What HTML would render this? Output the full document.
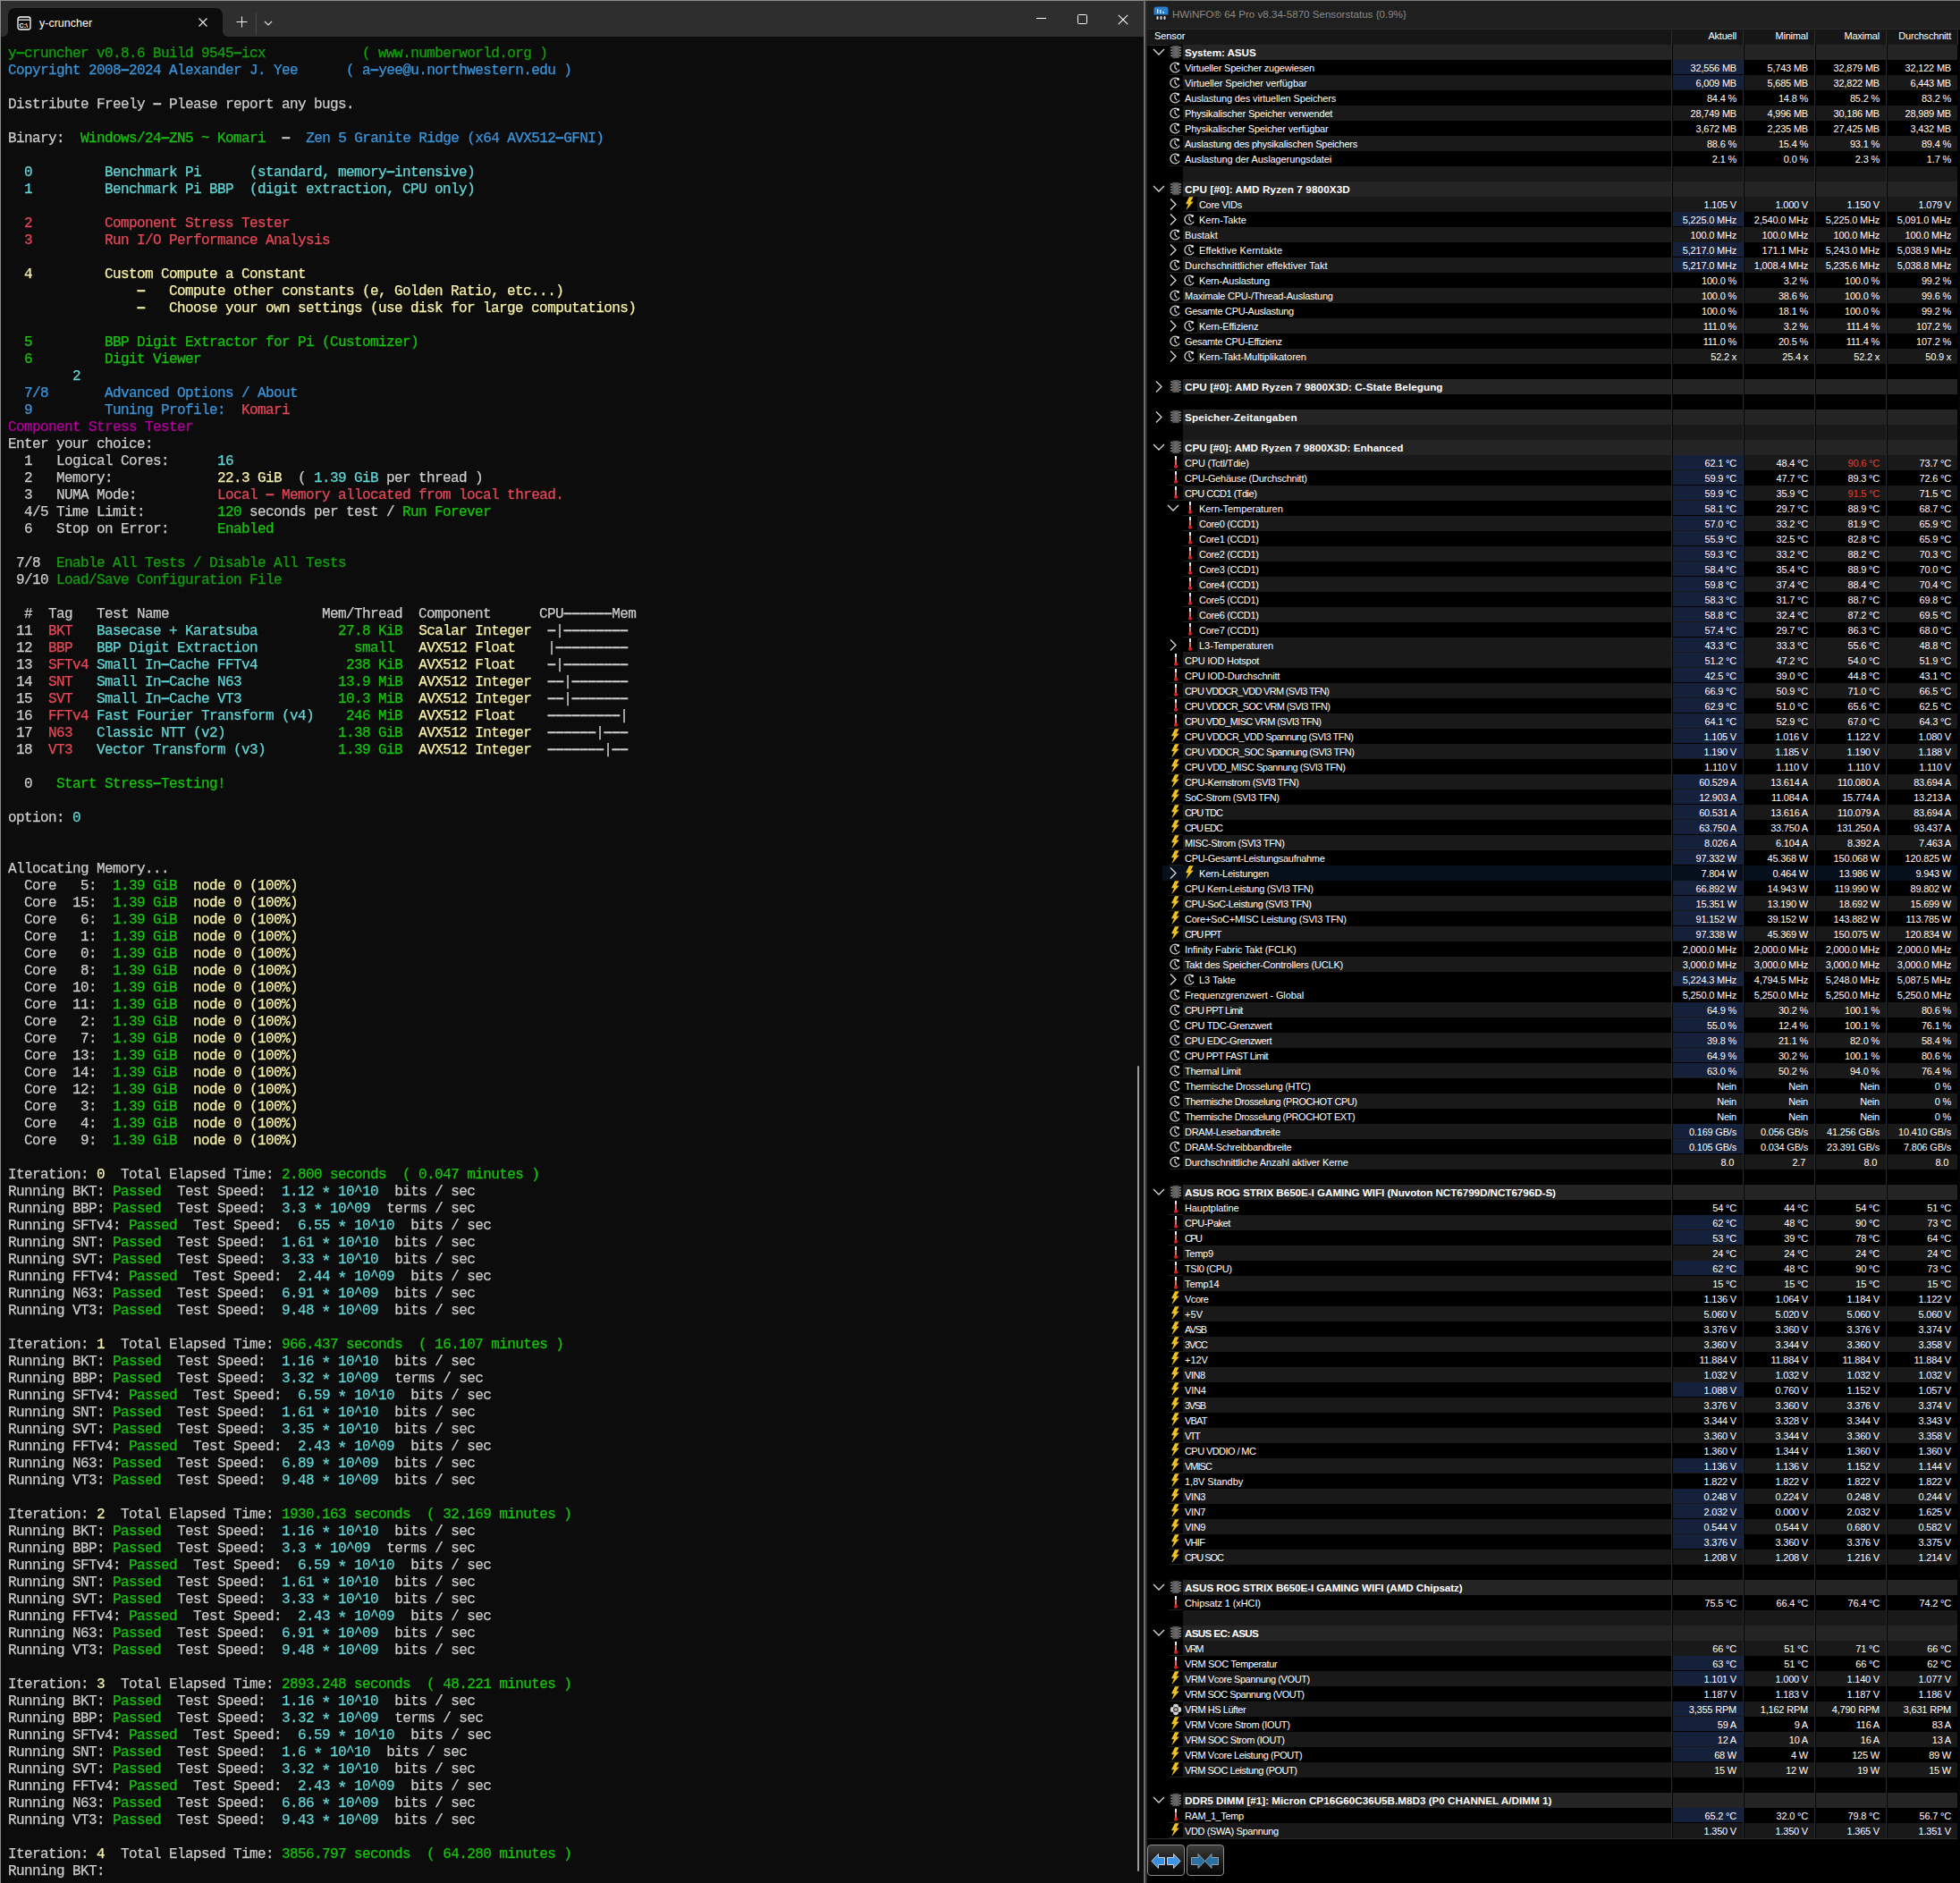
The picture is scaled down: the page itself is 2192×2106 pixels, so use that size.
<!DOCTYPE html><html><head><meta charset="utf-8"><style>

*{box-sizing:border-box}
body{margin:0;width:2192px;height:2106px;overflow:hidden;background:#000;position:relative;font-family:"Liberation Sans",sans-serif}
.a{position:absolute;line-height:0}
svg{display:block}
#tw{position:absolute;left:0;top:0;width:1280px;height:2106px;background:#0c0c0c;border-left:1px solid #8a8a8a;border-top:1px solid #8f8f8f;border-right:1px solid #6e6e6e;overflow:hidden}
#tb{position:absolute;left:0;top:0;width:1278px;height:40px;background:#2e2e2e}
#tab{position:absolute;left:8px;top:8px;width:240px;height:32px;background:#0c0c0c;border-radius:8px 8px 0 0}
.st{display:inline-block;transform:translateY(2.5px) scale(1.2)}
.d{display:inline-block;transform:translateY(-0.7px) scale(1.22,1.35)}
.tl{position:absolute;left:8px;height:19px;line-height:19px;white-space:pre;font-family:"Liberation Mono",monospace;font-size:16px;letter-spacing:-0.6px;color:#ccc;-webkit-text-stroke:0.25px currentColor}
#hw{position:absolute;left:1280px;top:0;width:912px;height:2106px;background:#000;border-top:1px solid #7a7a7a}
.r{position:absolute;left:0;width:912px;height:17px}
.tx{position:absolute;white-space:pre;font-size:11px;line-height:17px;color:#fff;letter-spacing:-0.08px}
.gx{position:absolute;white-space:pre;font-size:11.7px;line-height:17px;color:#fff;font-weight:bold}
.v{position:absolute;top:1px;height:17px;width:79px;text-align:right;padding-right:7px;white-space:pre;font-size:11px;line-height:17px;color:#fff;letter-spacing:-0.2px}

</style></head><body>
<div id="tw">
<div id="tb"></div>
<div id="tab"></div>
<div class="a" style="left:0;top:32px;width:8px;height:8px;background:#0c0c0c"></div>
<div class="a" style="left:-8px;top:24px;width:16px;height:16px;background:#2e2e2e;border-radius:0 0 6px 0"></div>
<div class="a" style="left:248px;top:32px;width:8px;height:8px;background:#0c0c0c"></div>
<div class="a" style="left:248px;top:24px;width:16px;height:16px;background:#2e2e2e;border-radius:0 0 0 6px"></div>
<svg class="a" style="left:18px;top:17px" width="16" height="16" viewBox="0 0 16 16"><rect x="1" y="1" width="14" height="14" rx="2.5" fill="none" stroke="#fff" stroke-width="1.3"/><line x1="1.5" y1="4.2" x2="14.5" y2="4.2" stroke="#fff" stroke-width="1.2"/><text x="2.6" y="12.6" font-family="Liberation Sans" font-size="7" font-weight="bold" fill="#fff">C:\</text></svg>
<div class="a" style="left:43px;top:15px;font-size:12.5px;line-height:20px;color:#fff;white-space:pre">y-cruncher</div>
<svg class="a" style="left:220px;top:18px" width="12" height="12" viewBox="0 0 12 12"><path d="M1.5 1.5L10.5 10.5M10.5 1.5L1.5 10.5" stroke="#e8e8e8" stroke-width="1.2"/></svg>
<svg class="a" style="left:263px;top:17px" width="13" height="13" viewBox="0 0 13 13"><path d="M6.5 0.5V12.5M0.5 6.5H12.5" stroke="#eef2f4" stroke-width="1"/></svg>
<div class="a" style="left:285px;top:13px;width:1px;height:25px;background:#4a4a44"></div>
<svg class="a" style="left:294px;top:21px" width="10" height="8" viewBox="0 0 10 8"><path d="M1 2L5 6L9 2" fill="none" stroke="#e0e0e0" stroke-width="1.1"/></svg>
<div class="a" style="left:1158px;top:19px;width:11px;height:1px;background:#fff"></div>
<div class="a" style="left:1204px;top:15px;width:11px;height:11px;border:1px solid #fff;border-radius:1.5px"></div>
<svg class="a" style="left:1249px;top:15px" width="12" height="12" viewBox="0 0 12 12"><path d="M0.8 0.8L11.2 11.2M11.2 0.8L0.8 11.2" stroke="#fff" stroke-width="1.1"/></svg>
<div class="a" style="left:1271px;top:1191px;width:2px;height:901px;background:#9c9c9c;border-radius:1px"></div>
<div class="a" style="left:0;top:0;width:1278px;height:2105px;will-change:transform">
<div class="tl" style="top:50px"><span style="color:#13a10e">y<span class="d">–</span>cruncher v0.8.6 Build 9545<span class="d">–</span>icx            ( www.numberworld.org )</span></div>
<div class="tl" style="top:69px"><span style="color:#3a96dd">Copyright 2008<span class="d">–</span>2024 Alexander J. Yee      ( a<span class="d">–</span>yee@u.northwestern.edu )</span></div>
<div class="tl" style="top:107px">Distribute Freely <span class="d">–</span> Please report any bugs.</div>
<div class="tl" style="top:145px">Binary:  <span style="color:#16c60c">Windows/24<span class="d">–</span>ZN5 ~ Komari</span>  <span class="d">–</span>  <span style="color:#3a96dd">Zen 5 Granite Ridge (x64 AVX512<span class="d">–</span>GFNI)</span></div>
<div class="tl" style="top:183px"><span style="color:#61d6d6">  0         </span><span style="color:#61d6d6">Benchmark Pi      (standard, memory<span class="d">–</span>intensive)</span></div>
<div class="tl" style="top:202px"><span style="color:#61d6d6">  1         </span><span style="color:#61d6d6">Benchmark Pi BBP  (digit extraction, CPU only)</span></div>
<div class="tl" style="top:240px"><span style="color:#e74856">  2         </span><span style="color:#e74856">Component Stress Tester</span></div>
<div class="tl" style="top:259px"><span style="color:#e74856">  3         </span><span style="color:#e74856">Run I/O Performance Analysis</span></div>
<div class="tl" style="top:297px"><span style="color:#f9f1a5">  4         </span><span style="color:#f9f1a5">Custom Compute a Constant</span></div>
<div class="tl" style="top:316px"><span style="color:#f9f1a5">                <span class="d">–</span>   Compute other constants (e, Golden Ratio, etc...)</span></div>
<div class="tl" style="top:335px"><span style="color:#f9f1a5">                <span class="d">–</span>   Choose your own settings (use disk for large computations)</span></div>
<div class="tl" style="top:373px"><span style="color:#16c60c">  5         </span><span style="color:#16c60c">BBP Digit Extractor for Pi (Customizer)</span></div>
<div class="tl" style="top:392px"><span style="color:#16c60c">  6         </span><span style="color:#16c60c">Digit Viewer</span></div>
<div class="tl" style="top:411px"><span style="color:#61d6d6">        2</span></div>
<div class="tl" style="top:430px"><span style="color:#3a96dd">  7/8       </span><span style="color:#3a96dd">Advanced Options / About</span></div>
<div class="tl" style="top:449px"><span style="color:#3a96dd">  9         </span><span style="color:#3a96dd">Tuning Profile:  </span><span style="color:#e74856">Komari</span></div>
<div class="tl" style="top:468px"><span style="color:#b4009e">Component Stress Tester</span></div>
<div class="tl" style="top:487px">Enter your choice:</div>
<div class="tl" style="top:506px">  1   Logical Cores:      <span style="color:#61d6d6">16</span></div>
<div class="tl" style="top:525px">  2   Memory:             <span style="color:#f9f1a5">22.3 GiB</span>  ( <span style="color:#61d6d6">1.39 GiB</span> per thread )</div>
<div class="tl" style="top:544px">  3   NUMA Mode:          <span style="color:#e74856">Local <span class="d">–</span> Memory allocated from local thread.</span></div>
<div class="tl" style="top:563px">  4/5 Time Limit:         <span style="color:#16c60c">120</span> seconds per test / <span style="color:#16c60c">Run Forever</span></div>
<div class="tl" style="top:582px">  6   Stop on Error:      <span style="color:#16c60c">Enabled</span></div>
<div class="tl" style="top:620px"> 7/8  <span style="color:#13a10e">Enable All Tests / Disable All Tests</span></div>
<div class="tl" style="top:639px"> 9/10 <span style="color:#13a10e">Load/Save Configuration File</span></div>
<div class="tl" style="top:677px">  #  Tag   Test Name                   Mem/Thread  Component      CPU<span class="d">–</span><span class="d">–</span><span class="d">–</span><span class="d">–</span><span class="d">–</span><span class="d">–</span>Mem</div>
<div class="tl" style="top:696px"> 11  <span style="color:#e74856">BKT  </span> <span style="color:#61d6d6">Basecase + Karatsuba       </span><span style="color:#16c60c">   27.8 KiB</span>  <span style="color:#f9f1a5">Scalar Integer</span>  <span class="d">–</span>|<span class="d">–</span><span class="d">–</span><span class="d">–</span><span class="d">–</span><span class="d">–</span><span class="d">–</span><span class="d">–</span><span class="d">–</span></div>
<div class="tl" style="top:715px"> 12  <span style="color:#e74856">BBP  </span> <span style="color:#61d6d6">BBP Digit Extraction       </span><span style="color:#16c60c">     small </span>  <span style="color:#f9f1a5">AVX512 Float  </span>  |<span class="d">–</span><span class="d">–</span><span class="d">–</span><span class="d">–</span><span class="d">–</span><span class="d">–</span><span class="d">–</span><span class="d">–</span><span class="d">–</span></div>
<div class="tl" style="top:734px"> 13  <span style="color:#e74856">SFTv4</span> <span style="color:#61d6d6">Small In<span class="d">–</span>Cache FFTv4       </span><span style="color:#16c60c">    238 KiB</span>  <span style="color:#f9f1a5">AVX512 Float  </span>  <span class="d">–</span>|<span class="d">–</span><span class="d">–</span><span class="d">–</span><span class="d">–</span><span class="d">–</span><span class="d">–</span><span class="d">–</span><span class="d">–</span></div>
<div class="tl" style="top:753px"> 14  <span style="color:#e74856">SNT  </span> <span style="color:#61d6d6">Small In<span class="d">–</span>Cache N63         </span><span style="color:#16c60c">   13.9 MiB</span>  <span style="color:#f9f1a5">AVX512 Integer</span>  <span class="d">–</span><span class="d">–</span>|<span class="d">–</span><span class="d">–</span><span class="d">–</span><span class="d">–</span><span class="d">–</span><span class="d">–</span><span class="d">–</span></div>
<div class="tl" style="top:772px"> 15  <span style="color:#e74856">SVT  </span> <span style="color:#61d6d6">Small In<span class="d">–</span>Cache VT3         </span><span style="color:#16c60c">   10.3 MiB</span>  <span style="color:#f9f1a5">AVX512 Integer</span>  <span class="d">–</span><span class="d">–</span>|<span class="d">–</span><span class="d">–</span><span class="d">–</span><span class="d">–</span><span class="d">–</span><span class="d">–</span><span class="d">–</span></div>
<div class="tl" style="top:791px"> 16  <span style="color:#e74856">FFTv4</span> <span style="color:#61d6d6">Fast Fourier Transform (v4)</span><span style="color:#16c60c">    246 MiB</span>  <span style="color:#f9f1a5">AVX512 Float  </span>  <span class="d">–</span><span class="d">–</span><span class="d">–</span><span class="d">–</span><span class="d">–</span><span class="d">–</span><span class="d">–</span><span class="d">–</span><span class="d">–</span>|</div>
<div class="tl" style="top:810px"> 17  <span style="color:#e74856">N63  </span> <span style="color:#61d6d6">Classic NTT (v2)           </span><span style="color:#16c60c">   1.38 GiB</span>  <span style="color:#f9f1a5">AVX512 Integer</span>  <span class="d">–</span><span class="d">–</span><span class="d">–</span><span class="d">–</span><span class="d">–</span><span class="d">–</span>|<span class="d">–</span><span class="d">–</span><span class="d">–</span></div>
<div class="tl" style="top:829px"> 18  <span style="color:#e74856">VT3  </span> <span style="color:#61d6d6">Vector Transform (v3)      </span><span style="color:#16c60c">   1.39 GiB</span>  <span style="color:#f9f1a5">AVX512 Integer</span>  <span class="d">–</span><span class="d">–</span><span class="d">–</span><span class="d">–</span><span class="d">–</span><span class="d">–</span><span class="d">–</span>|<span class="d">–</span><span class="d">–</span></div>
<div class="tl" style="top:867px">  0   <span style="color:#16c60c">Start Stress<span class="d">–</span>Testing!</span></div>
<div class="tl" style="top:905px">option: <span style="color:#61d6d6">0</span></div>
<div class="tl" style="top:962px">Allocating Memory...</div>
<div class="tl" style="top:981px">  Core   5:  <span style="color:#16c60c">1.39 GiB</span>  <span style="color:#f9f1a5">node 0 (100%)</span></div>
<div class="tl" style="top:1000px">  Core  15:  <span style="color:#16c60c">1.39 GiB</span>  <span style="color:#f9f1a5">node 0 (100%)</span></div>
<div class="tl" style="top:1019px">  Core   6:  <span style="color:#16c60c">1.39 GiB</span>  <span style="color:#f9f1a5">node 0 (100%)</span></div>
<div class="tl" style="top:1038px">  Core   1:  <span style="color:#16c60c">1.39 GiB</span>  <span style="color:#f9f1a5">node 0 (100%)</span></div>
<div class="tl" style="top:1057px">  Core   0:  <span style="color:#16c60c">1.39 GiB</span>  <span style="color:#f9f1a5">node 0 (100%)</span></div>
<div class="tl" style="top:1076px">  Core   8:  <span style="color:#16c60c">1.39 GiB</span>  <span style="color:#f9f1a5">node 0 (100%)</span></div>
<div class="tl" style="top:1095px">  Core  10:  <span style="color:#16c60c">1.39 GiB</span>  <span style="color:#f9f1a5">node 0 (100%)</span></div>
<div class="tl" style="top:1114px">  Core  11:  <span style="color:#16c60c">1.39 GiB</span>  <span style="color:#f9f1a5">node 0 (100%)</span></div>
<div class="tl" style="top:1133px">  Core   2:  <span style="color:#16c60c">1.39 GiB</span>  <span style="color:#f9f1a5">node 0 (100%)</span></div>
<div class="tl" style="top:1152px">  Core   7:  <span style="color:#16c60c">1.39 GiB</span>  <span style="color:#f9f1a5">node 0 (100%)</span></div>
<div class="tl" style="top:1171px">  Core  13:  <span style="color:#16c60c">1.39 GiB</span>  <span style="color:#f9f1a5">node 0 (100%)</span></div>
<div class="tl" style="top:1190px">  Core  14:  <span style="color:#16c60c">1.39 GiB</span>  <span style="color:#f9f1a5">node 0 (100%)</span></div>
<div class="tl" style="top:1209px">  Core  12:  <span style="color:#16c60c">1.39 GiB</span>  <span style="color:#f9f1a5">node 0 (100%)</span></div>
<div class="tl" style="top:1228px">  Core   3:  <span style="color:#16c60c">1.39 GiB</span>  <span style="color:#f9f1a5">node 0 (100%)</span></div>
<div class="tl" style="top:1247px">  Core   4:  <span style="color:#16c60c">1.39 GiB</span>  <span style="color:#f9f1a5">node 0 (100%)</span></div>
<div class="tl" style="top:1266px">  Core   9:  <span style="color:#16c60c">1.39 GiB</span>  <span style="color:#f9f1a5">node 0 (100%)</span></div>
<div class="tl" style="top:1304px">Iteration: <span style="color:#f9f1a5">0</span>  Total Elapsed Time: <span style="color:#16c60c">2.800 seconds  ( 0.047 minutes )</span></div>
<div class="tl" style="top:1323px">Running BKT: <span style="color:#16c60c">Passed</span>  Test Speed:  <span style="color:#61d6d6">1.12 <span class="st">*</span> 10^10</span>  bits / sec</div>
<div class="tl" style="top:1342px">Running BBP: <span style="color:#16c60c">Passed</span>  Test Speed:  <span style="color:#61d6d6">3.3 <span class="st">*</span> 10^09</span>  terms / sec</div>
<div class="tl" style="top:1361px">Running SFTv4: <span style="color:#16c60c">Passed</span>  Test Speed:  <span style="color:#61d6d6">6.55 <span class="st">*</span> 10^10</span>  bits / sec</div>
<div class="tl" style="top:1380px">Running SNT: <span style="color:#16c60c">Passed</span>  Test Speed:  <span style="color:#61d6d6">1.61 <span class="st">*</span> 10^10</span>  bits / sec</div>
<div class="tl" style="top:1399px">Running SVT: <span style="color:#16c60c">Passed</span>  Test Speed:  <span style="color:#61d6d6">3.33 <span class="st">*</span> 10^10</span>  bits / sec</div>
<div class="tl" style="top:1418px">Running FFTv4: <span style="color:#16c60c">Passed</span>  Test Speed:  <span style="color:#61d6d6">2.44 <span class="st">*</span> 10^09</span>  bits / sec</div>
<div class="tl" style="top:1437px">Running N63: <span style="color:#16c60c">Passed</span>  Test Speed:  <span style="color:#61d6d6">6.91 <span class="st">*</span> 10^09</span>  bits / sec</div>
<div class="tl" style="top:1456px">Running VT3: <span style="color:#16c60c">Passed</span>  Test Speed:  <span style="color:#61d6d6">9.48 <span class="st">*</span> 10^09</span>  bits / sec</div>
<div class="tl" style="top:1494px">Iteration: <span style="color:#f9f1a5">1</span>  Total Elapsed Time: <span style="color:#16c60c">966.437 seconds  ( 16.107 minutes )</span></div>
<div class="tl" style="top:1513px">Running BKT: <span style="color:#16c60c">Passed</span>  Test Speed:  <span style="color:#61d6d6">1.16 <span class="st">*</span> 10^10</span>  bits / sec</div>
<div class="tl" style="top:1532px">Running BBP: <span style="color:#16c60c">Passed</span>  Test Speed:  <span style="color:#61d6d6">3.32 <span class="st">*</span> 10^09</span>  terms / sec</div>
<div class="tl" style="top:1551px">Running SFTv4: <span style="color:#16c60c">Passed</span>  Test Speed:  <span style="color:#61d6d6">6.59 <span class="st">*</span> 10^10</span>  bits / sec</div>
<div class="tl" style="top:1570px">Running SNT: <span style="color:#16c60c">Passed</span>  Test Speed:  <span style="color:#61d6d6">1.61 <span class="st">*</span> 10^10</span>  bits / sec</div>
<div class="tl" style="top:1589px">Running SVT: <span style="color:#16c60c">Passed</span>  Test Speed:  <span style="color:#61d6d6">3.35 <span class="st">*</span> 10^10</span>  bits / sec</div>
<div class="tl" style="top:1608px">Running FFTv4: <span style="color:#16c60c">Passed</span>  Test Speed:  <span style="color:#61d6d6">2.43 <span class="st">*</span> 10^09</span>  bits / sec</div>
<div class="tl" style="top:1627px">Running N63: <span style="color:#16c60c">Passed</span>  Test Speed:  <span style="color:#61d6d6">6.89 <span class="st">*</span> 10^09</span>  bits / sec</div>
<div class="tl" style="top:1646px">Running VT3: <span style="color:#16c60c">Passed</span>  Test Speed:  <span style="color:#61d6d6">9.48 <span class="st">*</span> 10^09</span>  bits / sec</div>
<div class="tl" style="top:1684px">Iteration: <span style="color:#f9f1a5">2</span>  Total Elapsed Time: <span style="color:#16c60c">1930.163 seconds  ( 32.169 minutes )</span></div>
<div class="tl" style="top:1703px">Running BKT: <span style="color:#16c60c">Passed</span>  Test Speed:  <span style="color:#61d6d6">1.16 <span class="st">*</span> 10^10</span>  bits / sec</div>
<div class="tl" style="top:1722px">Running BBP: <span style="color:#16c60c">Passed</span>  Test Speed:  <span style="color:#61d6d6">3.3 <span class="st">*</span> 10^09</span>  terms / sec</div>
<div class="tl" style="top:1741px">Running SFTv4: <span style="color:#16c60c">Passed</span>  Test Speed:  <span style="color:#61d6d6">6.59 <span class="st">*</span> 10^10</span>  bits / sec</div>
<div class="tl" style="top:1760px">Running SNT: <span style="color:#16c60c">Passed</span>  Test Speed:  <span style="color:#61d6d6">1.61 <span class="st">*</span> 10^10</span>  bits / sec</div>
<div class="tl" style="top:1779px">Running SVT: <span style="color:#16c60c">Passed</span>  Test Speed:  <span style="color:#61d6d6">3.33 <span class="st">*</span> 10^10</span>  bits / sec</div>
<div class="tl" style="top:1798px">Running FFTv4: <span style="color:#16c60c">Passed</span>  Test Speed:  <span style="color:#61d6d6">2.43 <span class="st">*</span> 10^09</span>  bits / sec</div>
<div class="tl" style="top:1817px">Running N63: <span style="color:#16c60c">Passed</span>  Test Speed:  <span style="color:#61d6d6">6.91 <span class="st">*</span> 10^09</span>  bits / sec</div>
<div class="tl" style="top:1836px">Running VT3: <span style="color:#16c60c">Passed</span>  Test Speed:  <span style="color:#61d6d6">9.48 <span class="st">*</span> 10^09</span>  bits / sec</div>
<div class="tl" style="top:1874px">Iteration: <span style="color:#f9f1a5">3</span>  Total Elapsed Time: <span style="color:#16c60c">2893.248 seconds  ( 48.221 minutes )</span></div>
<div class="tl" style="top:1893px">Running BKT: <span style="color:#16c60c">Passed</span>  Test Speed:  <span style="color:#61d6d6">1.16 <span class="st">*</span> 10^10</span>  bits / sec</div>
<div class="tl" style="top:1912px">Running BBP: <span style="color:#16c60c">Passed</span>  Test Speed:  <span style="color:#61d6d6">3.32 <span class="st">*</span> 10^09</span>  terms / sec</div>
<div class="tl" style="top:1931px">Running SFTv4: <span style="color:#16c60c">Passed</span>  Test Speed:  <span style="color:#61d6d6">6.59 <span class="st">*</span> 10^10</span>  bits / sec</div>
<div class="tl" style="top:1950px">Running SNT: <span style="color:#16c60c">Passed</span>  Test Speed:  <span style="color:#61d6d6">1.6 <span class="st">*</span> 10^10</span>  bits / sec</div>
<div class="tl" style="top:1969px">Running SVT: <span style="color:#16c60c">Passed</span>  Test Speed:  <span style="color:#61d6d6">3.32 <span class="st">*</span> 10^10</span>  bits / sec</div>
<div class="tl" style="top:1988px">Running FFTv4: <span style="color:#16c60c">Passed</span>  Test Speed:  <span style="color:#61d6d6">2.43 <span class="st">*</span> 10^09</span>  bits / sec</div>
<div class="tl" style="top:2007px">Running N63: <span style="color:#16c60c">Passed</span>  Test Speed:  <span style="color:#61d6d6">6.86 <span class="st">*</span> 10^09</span>  bits / sec</div>
<div class="tl" style="top:2026px">Running VT3: <span style="color:#16c60c">Passed</span>  Test Speed:  <span style="color:#61d6d6">9.43 <span class="st">*</span> 10^09</span>  bits / sec</div>
<div class="tl" style="top:2064px">Iteration: <span style="color:#f9f1a5">4</span>  Total Elapsed Time: <span style="color:#16c60c">3856.797 seconds  ( 64.280 minutes )</span></div>
<div class="tl" style="top:2083px">Running BKT: </div>
</div>
</div>
<div id="hw">
<div class="a" style="left:0;top:0;width:1px;height:2106px;background:#6a6a6a"></div><div class="a" style="left:1px;top:0;width:2px;height:2106px;background:#262626"></div>
<div class="a" style="left:3px;top:0;width:909px;height:31px;background:#1f1f1f"></div><div class="a" style="left:3px;top:31px;width:909px;height:1px;background:#2a2a2a"></div>
<svg class="a" style="left:10px;top:6px" width="17" height="17" viewBox="0 0 17 17"><rect x="0.5" y="0.5" width="16" height="16" rx="3" fill="#1a1a1a"/><path d="M0.5 3.5A3 3 0 0 1 3.5 0.5H13.5A3 3 0 0 1 16.5 3.5V9.5H0.5Z" fill="#2a7fcf"/><rect x="4" y="3" width="1.3" height="5" fill="#dfe8f0"/><rect x="7" y="4" width="1.5" height="4" fill="#dfe8f0"/><rect x="10.5" y="6" width="1.5" height="2" fill="#dfe8f0"/><rect x="3.5" y="11" width="2" height="4" rx="1" fill="#ddd"/><rect x="7.5" y="11" width="2" height="4" rx="1" fill="#ddd"/><rect x="11.5" y="11" width="2" height="4" rx="1" fill="#ddd"/></svg>
<div class="a" style="left:31px;top:6px;font-size:11.6px;line-height:18px;color:#8a8a86;white-space:pre">HWiNFO® 64 Pro v8.34-5870 Sensorstatus {0.9%}</div>
<div class="a" style="left:3px;top:32px;width:906px;height:18px;background:#161616;border-bottom:1px solid #2a2a2a"></div>
<div class="tx" style="left:11px;top:31px;line-height:17px">Sensor</div>
<div class="a" style="left:589px;top:33px;width:1px;height:16px;background:#2e2e2e"></div>
<div class="v" style="left:590px;top:31px;line-height:17px">Aktuell</div>
<div class="a" style="left:669px;top:33px;width:1px;height:16px;background:#2e2e2e"></div>
<div class="v" style="left:670px;top:31px;line-height:17px">Minimal</div>
<div class="a" style="left:749px;top:33px;width:1px;height:16px;background:#2e2e2e"></div>
<div class="v" style="left:750px;top:31px;line-height:17px">Maximal</div>
<div class="a" style="left:829px;top:33px;width:1px;height:16px;background:#2e2e2e"></div>
<div class="v" style="left:830px;top:31px;line-height:17px">Durchschnitt</div>
<div class="a" style="left:909px;top:33px;width:1px;height:16px;background:#2e2e2e"></div>
<div class="r" style="top:49px">
<div class="a" style="left:43px;top:0;width:866px;height:17px;background:#242424"></div>
<div class="a" style="left:27px;top:0;width:16px;height:16px;background:#0a0a0a"></div>
<div class="a" style="left:9px;top:4px"><svg width="14" height="9" viewBox="0 0 14 9"><path d="M1 1L7 7L13 1" fill="none" stroke="#dcdcdc" stroke-width="1.25"/></svg></div>
<div class="a" style="left:29px;top:0px"><svg width="12" height="16" viewBox="0 0 12 16"><rect x="2" y="1" width="8" height="14" rx="1.5" fill="#555"/><rect x="3.5" y="2.5" width="5" height="11" fill="#676767"/><rect x="0.3" y="2.5" width="1.8" height="1.3" fill="#b0b0b0"/><rect x="9.9" y="2.5" width="1.8" height="1.3" fill="#b0b0b0"/><rect x="0.3" y="5.5" width="1.8" height="1.3" fill="#b0b0b0"/><rect x="9.9" y="5.5" width="1.8" height="1.3" fill="#b0b0b0"/><rect x="0.3" y="8.5" width="1.8" height="1.3" fill="#b0b0b0"/><rect x="9.9" y="8.5" width="1.8" height="1.3" fill="#b0b0b0"/><rect x="0.3" y="11.5" width="1.8" height="1.3" fill="#b0b0b0"/><rect x="9.9" y="11.5" width="1.8" height="1.3" fill="#b0b0b0"/></svg></div>
<div class="gx" id="n0" style="left:45px;top:0px;letter-spacing:-0.097px">System: ASUS</div>
<div class="a" style="left:589px;top:0;width:1px;height:17px;background:#2a2a2a"></div><div class="a" style="left:590px;top:0;width:1px;height:17px;background:#01050c"></div>
<div class="a" style="left:669px;top:0;width:1px;height:17px;background:#2a2a2a"></div><div class="a" style="left:670px;top:0;width:1px;height:17px;background:#01050c"></div>
<div class="a" style="left:749px;top:0;width:1px;height:17px;background:#2a2a2a"></div><div class="a" style="left:750px;top:0;width:1px;height:17px;background:#01050c"></div>
<div class="a" style="left:829px;top:0;width:1px;height:17px;background:#2a2a2a"></div><div class="a" style="left:830px;top:0;width:1px;height:17px;background:#01050c"></div>
</div>
<div class="r" style="top:66px">
<div class="a" style="left:43px;top:0;width:866px;height:17px;background:#000"></div>
<div class="a" style="left:27px;top:16px;width:16px;height:1px;background:#1e1e1e"></div>
<div class="a" style="left:28px;top:2px"><svg width="13" height="13" viewBox="0 0 13 13"><path d="M9.3 2.2A5.3 5.3 0 1 0 11.1 8.8" fill="none" stroke="#c4c4c4" stroke-width="1.4"/><circle cx="9.6" cy="2.6" r="1.3" fill="#fff"/><path d="M6 3V6.6L8.2 9" fill="none" stroke="#cfcfcf" stroke-width="1.3"/></svg></div>
<div class="tx" id="n1" style="left:45px;top:1px;letter-spacing:-0.201px">Virtueller Speicher zugewiesen</div>
<div class="a" style="left:589px;top:0;width:1px;height:17px;background:#2a2a2a"></div><div class="a" style="left:590px;top:0;width:1px;height:17px;background:#01050c"></div>
<div class="a" style="left:591px;top:0;width:79px;height:16px;background:#15203a"></div>
<div class="v" style="left:590px">32,556 MB</div>
<div class="a" style="left:669px;top:0;width:1px;height:17px;background:#2a2a2a"></div><div class="a" style="left:670px;top:0;width:1px;height:17px;background:#01050c"></div>
<div class="v" style="left:670px">5,743 MB</div>
<div class="a" style="left:749px;top:0;width:1px;height:17px;background:#2a2a2a"></div><div class="a" style="left:750px;top:0;width:1px;height:17px;background:#01050c"></div>
<div class="v" style="left:750px">32,879 MB</div>
<div class="a" style="left:829px;top:0;width:1px;height:17px;background:#2a2a2a"></div><div class="a" style="left:830px;top:0;width:1px;height:17px;background:#01050c"></div>
<div class="v" style="left:830px">32,122 MB</div>
</div>
<div class="r" style="top:83px">
<div class="a" style="left:43px;top:0;width:866px;height:17px;background:#191919"></div>
<div class="a" style="left:27px;top:16px;width:16px;height:1px;background:#1e1e1e"></div>
<div class="a" style="left:28px;top:2px"><svg width="13" height="13" viewBox="0 0 13 13"><path d="M9.3 2.2A5.3 5.3 0 1 0 11.1 8.8" fill="none" stroke="#c4c4c4" stroke-width="1.4"/><circle cx="9.6" cy="2.6" r="1.3" fill="#fff"/><path d="M6 3V6.6L8.2 9" fill="none" stroke="#cfcfcf" stroke-width="1.3"/></svg></div>
<div class="tx" id="n2" style="left:45px;top:1px;letter-spacing:-0.093px">Virtueller Speicher verfügbar</div>
<div class="a" style="left:589px;top:0;width:1px;height:17px;background:#2a2a2a"></div><div class="a" style="left:590px;top:0;width:1px;height:17px;background:#01050c"></div>
<div class="a" style="left:591px;top:0;width:79px;height:16px;background:#15203a"></div>
<div class="v" style="left:590px">6,009 MB</div>
<div class="a" style="left:669px;top:0;width:1px;height:17px;background:#2a2a2a"></div><div class="a" style="left:670px;top:0;width:1px;height:17px;background:#01050c"></div>
<div class="v" style="left:670px">5,685 MB</div>
<div class="a" style="left:749px;top:0;width:1px;height:17px;background:#2a2a2a"></div><div class="a" style="left:750px;top:0;width:1px;height:17px;background:#01050c"></div>
<div class="v" style="left:750px">32,822 MB</div>
<div class="a" style="left:829px;top:0;width:1px;height:17px;background:#2a2a2a"></div><div class="a" style="left:830px;top:0;width:1px;height:17px;background:#01050c"></div>
<div class="v" style="left:830px">6,443 MB</div>
</div>
<div class="r" style="top:100px">
<div class="a" style="left:43px;top:0;width:866px;height:17px;background:#000"></div>
<div class="a" style="left:27px;top:16px;width:16px;height:1px;background:#1e1e1e"></div>
<div class="a" style="left:28px;top:2px"><svg width="13" height="13" viewBox="0 0 13 13"><path d="M9.3 2.2A5.3 5.3 0 1 0 11.1 8.8" fill="none" stroke="#c4c4c4" stroke-width="1.4"/><circle cx="9.6" cy="2.6" r="1.3" fill="#fff"/><path d="M6 3V6.6L8.2 9" fill="none" stroke="#cfcfcf" stroke-width="1.3"/></svg></div>
<div class="tx" id="n3" style="left:45px;top:1px;letter-spacing:-0.149px">Auslastung des virtuellen Speichers</div>
<div class="a" style="left:589px;top:0;width:1px;height:17px;background:#2a2a2a"></div><div class="a" style="left:590px;top:0;width:1px;height:17px;background:#01050c"></div>
<div class="v" style="left:590px">84.4 %</div>
<div class="a" style="left:669px;top:0;width:1px;height:17px;background:#2a2a2a"></div><div class="a" style="left:670px;top:0;width:1px;height:17px;background:#01050c"></div>
<div class="v" style="left:670px">14.8 %</div>
<div class="a" style="left:749px;top:0;width:1px;height:17px;background:#2a2a2a"></div><div class="a" style="left:750px;top:0;width:1px;height:17px;background:#01050c"></div>
<div class="v" style="left:750px">85.2 %</div>
<div class="a" style="left:829px;top:0;width:1px;height:17px;background:#2a2a2a"></div><div class="a" style="left:830px;top:0;width:1px;height:17px;background:#01050c"></div>
<div class="v" style="left:830px">83.2 %</div>
</div>
<div class="r" style="top:117px">
<div class="a" style="left:43px;top:0;width:866px;height:17px;background:#191919"></div>
<div class="a" style="left:27px;top:16px;width:16px;height:1px;background:#1e1e1e"></div>
<div class="a" style="left:28px;top:2px"><svg width="13" height="13" viewBox="0 0 13 13"><path d="M9.3 2.2A5.3 5.3 0 1 0 11.1 8.8" fill="none" stroke="#c4c4c4" stroke-width="1.4"/><circle cx="9.6" cy="2.6" r="1.3" fill="#fff"/><path d="M6 3V6.6L8.2 9" fill="none" stroke="#cfcfcf" stroke-width="1.3"/></svg></div>
<div class="tx" id="n4" style="left:45px;top:1px;letter-spacing:-0.162px">Physikalischer Speicher verwendet</div>
<div class="a" style="left:589px;top:0;width:1px;height:17px;background:#2a2a2a"></div><div class="a" style="left:590px;top:0;width:1px;height:17px;background:#01050c"></div>
<div class="v" style="left:590px">28,749 MB</div>
<div class="a" style="left:669px;top:0;width:1px;height:17px;background:#2a2a2a"></div><div class="a" style="left:670px;top:0;width:1px;height:17px;background:#01050c"></div>
<div class="v" style="left:670px">4,996 MB</div>
<div class="a" style="left:749px;top:0;width:1px;height:17px;background:#2a2a2a"></div><div class="a" style="left:750px;top:0;width:1px;height:17px;background:#01050c"></div>
<div class="v" style="left:750px">30,186 MB</div>
<div class="a" style="left:829px;top:0;width:1px;height:17px;background:#2a2a2a"></div><div class="a" style="left:830px;top:0;width:1px;height:17px;background:#01050c"></div>
<div class="v" style="left:830px">28,989 MB</div>
</div>
<div class="r" style="top:134px">
<div class="a" style="left:43px;top:0;width:866px;height:17px;background:#000"></div>
<div class="a" style="left:27px;top:16px;width:16px;height:1px;background:#1e1e1e"></div>
<div class="a" style="left:28px;top:2px"><svg width="13" height="13" viewBox="0 0 13 13"><path d="M9.3 2.2A5.3 5.3 0 1 0 11.1 8.8" fill="none" stroke="#c4c4c4" stroke-width="1.4"/><circle cx="9.6" cy="2.6" r="1.3" fill="#fff"/><path d="M6 3V6.6L8.2 9" fill="none" stroke="#cfcfcf" stroke-width="1.3"/></svg></div>
<div class="tx" id="n5" style="left:45px;top:1px;letter-spacing:-0.175px">Physikalischer Speicher verfügbar</div>
<div class="a" style="left:589px;top:0;width:1px;height:17px;background:#2a2a2a"></div><div class="a" style="left:590px;top:0;width:1px;height:17px;background:#01050c"></div>
<div class="v" style="left:590px">3,672 MB</div>
<div class="a" style="left:669px;top:0;width:1px;height:17px;background:#2a2a2a"></div><div class="a" style="left:670px;top:0;width:1px;height:17px;background:#01050c"></div>
<div class="v" style="left:670px">2,235 MB</div>
<div class="a" style="left:749px;top:0;width:1px;height:17px;background:#2a2a2a"></div><div class="a" style="left:750px;top:0;width:1px;height:17px;background:#01050c"></div>
<div class="v" style="left:750px">27,425 MB</div>
<div class="a" style="left:829px;top:0;width:1px;height:17px;background:#2a2a2a"></div><div class="a" style="left:830px;top:0;width:1px;height:17px;background:#01050c"></div>
<div class="v" style="left:830px">3,432 MB</div>
</div>
<div class="r" style="top:151px">
<div class="a" style="left:43px;top:0;width:866px;height:17px;background:#191919"></div>
<div class="a" style="left:27px;top:16px;width:16px;height:1px;background:#1e1e1e"></div>
<div class="a" style="left:28px;top:2px"><svg width="13" height="13" viewBox="0 0 13 13"><path d="M9.3 2.2A5.3 5.3 0 1 0 11.1 8.8" fill="none" stroke="#c4c4c4" stroke-width="1.4"/><circle cx="9.6" cy="2.6" r="1.3" fill="#fff"/><path d="M6 3V6.6L8.2 9" fill="none" stroke="#cfcfcf" stroke-width="1.3"/></svg></div>
<div class="tx" id="n6" style="left:45px;top:1px;letter-spacing:-0.223px">Auslastung des physikalischen Speichers</div>
<div class="a" style="left:589px;top:0;width:1px;height:17px;background:#2a2a2a"></div><div class="a" style="left:590px;top:0;width:1px;height:17px;background:#01050c"></div>
<div class="v" style="left:590px">88.6 %</div>
<div class="a" style="left:669px;top:0;width:1px;height:17px;background:#2a2a2a"></div><div class="a" style="left:670px;top:0;width:1px;height:17px;background:#01050c"></div>
<div class="v" style="left:670px">15.4 %</div>
<div class="a" style="left:749px;top:0;width:1px;height:17px;background:#2a2a2a"></div><div class="a" style="left:750px;top:0;width:1px;height:17px;background:#01050c"></div>
<div class="v" style="left:750px">93.1 %</div>
<div class="a" style="left:829px;top:0;width:1px;height:17px;background:#2a2a2a"></div><div class="a" style="left:830px;top:0;width:1px;height:17px;background:#01050c"></div>
<div class="v" style="left:830px">89.4 %</div>
</div>
<div class="r" style="top:168px">
<div class="a" style="left:43px;top:0;width:866px;height:17px;background:#000"></div>
<div class="a" style="left:27px;top:16px;width:16px;height:1px;background:#1e1e1e"></div>
<div class="a" style="left:28px;top:2px"><svg width="13" height="13" viewBox="0 0 13 13"><path d="M9.3 2.2A5.3 5.3 0 1 0 11.1 8.8" fill="none" stroke="#c4c4c4" stroke-width="1.4"/><circle cx="9.6" cy="2.6" r="1.3" fill="#fff"/><path d="M6 3V6.6L8.2 9" fill="none" stroke="#cfcfcf" stroke-width="1.3"/></svg></div>
<div class="tx" id="n7" style="left:45px;top:1px;letter-spacing:-0.089px">Auslastung der Auslagerungsdatei</div>
<div class="a" style="left:589px;top:0;width:1px;height:17px;background:#2a2a2a"></div><div class="a" style="left:590px;top:0;width:1px;height:17px;background:#01050c"></div>
<div class="v" style="left:590px">2.1 %</div>
<div class="a" style="left:669px;top:0;width:1px;height:17px;background:#2a2a2a"></div><div class="a" style="left:670px;top:0;width:1px;height:17px;background:#01050c"></div>
<div class="v" style="left:670px">0.0 %</div>
<div class="a" style="left:749px;top:0;width:1px;height:17px;background:#2a2a2a"></div><div class="a" style="left:750px;top:0;width:1px;height:17px;background:#01050c"></div>
<div class="v" style="left:750px">2.3 %</div>
<div class="a" style="left:829px;top:0;width:1px;height:17px;background:#2a2a2a"></div><div class="a" style="left:830px;top:0;width:1px;height:17px;background:#01050c"></div>
<div class="v" style="left:830px">1.7 %</div>
</div>
<div class="r" style="top:185px">
<div class="a" style="left:43px;top:0;width:866px;height:17px;background:#191919"></div>
<div class="a" style="left:589px;top:0;width:1px;height:17px;background:#2a2a2a"></div><div class="a" style="left:590px;top:0;width:1px;height:17px;background:#01050c"></div>
<div class="a" style="left:669px;top:0;width:1px;height:17px;background:#2a2a2a"></div><div class="a" style="left:670px;top:0;width:1px;height:17px;background:#01050c"></div>
<div class="a" style="left:749px;top:0;width:1px;height:17px;background:#2a2a2a"></div><div class="a" style="left:750px;top:0;width:1px;height:17px;background:#01050c"></div>
<div class="a" style="left:829px;top:0;width:1px;height:17px;background:#2a2a2a"></div><div class="a" style="left:830px;top:0;width:1px;height:17px;background:#01050c"></div>
</div>
<div class="r" style="top:202px">
<div class="a" style="left:43px;top:0;width:866px;height:17px;background:#242424"></div>
<div class="a" style="left:27px;top:0;width:16px;height:16px;background:#0a0a0a"></div>
<div class="a" style="left:9px;top:4px"><svg width="14" height="9" viewBox="0 0 14 9"><path d="M1 1L7 7L13 1" fill="none" stroke="#dcdcdc" stroke-width="1.25"/></svg></div>
<div class="a" style="left:29px;top:0px"><svg width="12" height="16" viewBox="0 0 12 16"><rect x="2" y="1" width="8" height="14" rx="1.5" fill="#555"/><rect x="3.5" y="2.5" width="5" height="11" fill="#676767"/><rect x="0.3" y="2.5" width="1.8" height="1.3" fill="#b0b0b0"/><rect x="9.9" y="2.5" width="1.8" height="1.3" fill="#b0b0b0"/><rect x="0.3" y="5.5" width="1.8" height="1.3" fill="#b0b0b0"/><rect x="9.9" y="5.5" width="1.8" height="1.3" fill="#b0b0b0"/><rect x="0.3" y="8.5" width="1.8" height="1.3" fill="#b0b0b0"/><rect x="9.9" y="8.5" width="1.8" height="1.3" fill="#b0b0b0"/><rect x="0.3" y="11.5" width="1.8" height="1.3" fill="#b0b0b0"/><rect x="9.9" y="11.5" width="1.8" height="1.3" fill="#b0b0b0"/></svg></div>
<div class="gx" id="n9" style="left:45px;top:0px;letter-spacing:0.120px">CPU [#0]: AMD Ryzen 7 9800X3D</div>
<div class="a" style="left:589px;top:0;width:1px;height:17px;background:#2a2a2a"></div><div class="a" style="left:590px;top:0;width:1px;height:17px;background:#01050c"></div>
<div class="a" style="left:669px;top:0;width:1px;height:17px;background:#2a2a2a"></div><div class="a" style="left:670px;top:0;width:1px;height:17px;background:#01050c"></div>
<div class="a" style="left:749px;top:0;width:1px;height:17px;background:#2a2a2a"></div><div class="a" style="left:750px;top:0;width:1px;height:17px;background:#01050c"></div>
<div class="a" style="left:829px;top:0;width:1px;height:17px;background:#2a2a2a"></div><div class="a" style="left:830px;top:0;width:1px;height:17px;background:#01050c"></div>
</div>
<div class="r" style="top:219px">
<div class="a" style="left:59px;top:0;width:850px;height:17px;background:#191919"></div>
<div class="a" style="left:43px;top:16px;width:16px;height:1px;background:#1e1e1e"></div>
<div class="a" style="left:46px;top:0"><svg width="10" height="16" viewBox="0 0 10 16"><path d="M4 0.2H8.6L5.6 5.6H8.8L0.3 15.3L3 8.3H0Z" fill="#f0c020"/></svg></div>
<div class="a" style="left:28px;top:1px"><svg width="8" height="14" viewBox="0 0 8 14"><path d="M1 1.5L7 7.5L1 13.5" fill="none" stroke="#dcdcdc" stroke-width="1.25"/></svg></div>
<div class="tx" id="n10" style="left:61px;top:1px;letter-spacing:-0.319px">Core VIDs</div>
<div class="a" style="left:589px;top:0;width:1px;height:17px;background:#2a2a2a"></div><div class="a" style="left:590px;top:0;width:1px;height:17px;background:#01050c"></div>
<div class="v" style="left:590px">1.105 V</div>
<div class="a" style="left:669px;top:0;width:1px;height:17px;background:#2a2a2a"></div><div class="a" style="left:670px;top:0;width:1px;height:17px;background:#01050c"></div>
<div class="v" style="left:670px">1.000 V</div>
<div class="a" style="left:749px;top:0;width:1px;height:17px;background:#2a2a2a"></div><div class="a" style="left:750px;top:0;width:1px;height:17px;background:#01050c"></div>
<div class="v" style="left:750px">1.150 V</div>
<div class="a" style="left:829px;top:0;width:1px;height:17px;background:#2a2a2a"></div><div class="a" style="left:830px;top:0;width:1px;height:17px;background:#01050c"></div>
<div class="v" style="left:830px">1.079 V</div>
</div>
<div class="r" style="top:236px">
<div class="a" style="left:59px;top:0;width:850px;height:17px;background:#000"></div>
<div class="a" style="left:43px;top:16px;width:16px;height:1px;background:#1e1e1e"></div>
<div class="a" style="left:44px;top:2px"><svg width="13" height="13" viewBox="0 0 13 13"><path d="M9.3 2.2A5.3 5.3 0 1 0 11.1 8.8" fill="none" stroke="#c4c4c4" stroke-width="1.4"/><circle cx="9.6" cy="2.6" r="1.3" fill="#fff"/><path d="M6 3V6.6L8.2 9" fill="none" stroke="#cfcfcf" stroke-width="1.3"/></svg></div>
<div class="a" style="left:28px;top:1px"><svg width="8" height="14" viewBox="0 0 8 14"><path d="M1 1.5L7 7.5L1 13.5" fill="none" stroke="#dcdcdc" stroke-width="1.25"/></svg></div>
<div class="tx" id="n11" style="left:61px;top:1px;letter-spacing:-0.023px">Kern-Takte</div>
<div class="a" style="left:589px;top:0;width:1px;height:17px;background:#2a2a2a"></div><div class="a" style="left:590px;top:0;width:1px;height:17px;background:#01050c"></div>
<div class="a" style="left:591px;top:0;width:79px;height:16px;background:#15203a"></div>
<div class="v" style="left:590px">5,225.0 MHz</div>
<div class="a" style="left:669px;top:0;width:1px;height:17px;background:#2a2a2a"></div><div class="a" style="left:670px;top:0;width:1px;height:17px;background:#01050c"></div>
<div class="v" style="left:670px">2,540.0 MHz</div>
<div class="a" style="left:749px;top:0;width:1px;height:17px;background:#2a2a2a"></div><div class="a" style="left:750px;top:0;width:1px;height:17px;background:#01050c"></div>
<div class="v" style="left:750px">5,225.0 MHz</div>
<div class="a" style="left:829px;top:0;width:1px;height:17px;background:#2a2a2a"></div><div class="a" style="left:830px;top:0;width:1px;height:17px;background:#01050c"></div>
<div class="v" style="left:830px">5,091.0 MHz</div>
</div>
<div class="r" style="top:253px">
<div class="a" style="left:43px;top:0;width:866px;height:17px;background:#191919"></div>
<div class="a" style="left:27px;top:16px;width:16px;height:1px;background:#1e1e1e"></div>
<div class="a" style="left:28px;top:2px"><svg width="13" height="13" viewBox="0 0 13 13"><path d="M9.3 2.2A5.3 5.3 0 1 0 11.1 8.8" fill="none" stroke="#c4c4c4" stroke-width="1.4"/><circle cx="9.6" cy="2.6" r="1.3" fill="#fff"/><path d="M6 3V6.6L8.2 9" fill="none" stroke="#cfcfcf" stroke-width="1.3"/></svg></div>
<div class="tx" id="n12" style="left:45px;top:1px;letter-spacing:0.002px">Bustakt</div>
<div class="a" style="left:589px;top:0;width:1px;height:17px;background:#2a2a2a"></div><div class="a" style="left:590px;top:0;width:1px;height:17px;background:#01050c"></div>
<div class="v" style="left:590px">100.0 MHz</div>
<div class="a" style="left:669px;top:0;width:1px;height:17px;background:#2a2a2a"></div><div class="a" style="left:670px;top:0;width:1px;height:17px;background:#01050c"></div>
<div class="v" style="left:670px">100.0 MHz</div>
<div class="a" style="left:749px;top:0;width:1px;height:17px;background:#2a2a2a"></div><div class="a" style="left:750px;top:0;width:1px;height:17px;background:#01050c"></div>
<div class="v" style="left:750px">100.0 MHz</div>
<div class="a" style="left:829px;top:0;width:1px;height:17px;background:#2a2a2a"></div><div class="a" style="left:830px;top:0;width:1px;height:17px;background:#01050c"></div>
<div class="v" style="left:830px">100.0 MHz</div>
</div>
<div class="r" style="top:270px">
<div class="a" style="left:59px;top:0;width:850px;height:17px;background:#000"></div>
<div class="a" style="left:43px;top:16px;width:16px;height:1px;background:#1e1e1e"></div>
<div class="a" style="left:44px;top:2px"><svg width="13" height="13" viewBox="0 0 13 13"><path d="M9.3 2.2A5.3 5.3 0 1 0 11.1 8.8" fill="none" stroke="#c4c4c4" stroke-width="1.4"/><circle cx="9.6" cy="2.6" r="1.3" fill="#fff"/><path d="M6 3V6.6L8.2 9" fill="none" stroke="#cfcfcf" stroke-width="1.3"/></svg></div>
<div class="a" style="left:28px;top:1px"><svg width="8" height="14" viewBox="0 0 8 14"><path d="M1 1.5L7 7.5L1 13.5" fill="none" stroke="#dcdcdc" stroke-width="1.25"/></svg></div>
<div class="tx" id="n13" style="left:61px;top:1px;letter-spacing:0.054px">Effektive Kerntakte</div>
<div class="a" style="left:589px;top:0;width:1px;height:17px;background:#2a2a2a"></div><div class="a" style="left:590px;top:0;width:1px;height:17px;background:#01050c"></div>
<div class="a" style="left:591px;top:0;width:79px;height:16px;background:#15203a"></div>
<div class="v" style="left:590px">5,217.0 MHz</div>
<div class="a" style="left:669px;top:0;width:1px;height:17px;background:#2a2a2a"></div><div class="a" style="left:670px;top:0;width:1px;height:17px;background:#01050c"></div>
<div class="v" style="left:670px">171.1 MHz</div>
<div class="a" style="left:749px;top:0;width:1px;height:17px;background:#2a2a2a"></div><div class="a" style="left:750px;top:0;width:1px;height:17px;background:#01050c"></div>
<div class="v" style="left:750px">5,243.0 MHz</div>
<div class="a" style="left:829px;top:0;width:1px;height:17px;background:#2a2a2a"></div><div class="a" style="left:830px;top:0;width:1px;height:17px;background:#01050c"></div>
<div class="v" style="left:830px">5,038.9 MHz</div>
</div>
<div class="r" style="top:287px">
<div class="a" style="left:43px;top:0;width:866px;height:17px;background:#191919"></div>
<div class="a" style="left:27px;top:16px;width:16px;height:1px;background:#1e1e1e"></div>
<div class="a" style="left:28px;top:2px"><svg width="13" height="13" viewBox="0 0 13 13"><path d="M9.3 2.2A5.3 5.3 0 1 0 11.1 8.8" fill="none" stroke="#c4c4c4" stroke-width="1.4"/><circle cx="9.6" cy="2.6" r="1.3" fill="#fff"/><path d="M6 3V6.6L8.2 9" fill="none" stroke="#cfcfcf" stroke-width="1.3"/></svg></div>
<div class="tx" id="n14" style="left:45px;top:1px;letter-spacing:0.050px">Durchschnittlicher effektiver Takt</div>
<div class="a" style="left:589px;top:0;width:1px;height:17px;background:#2a2a2a"></div><div class="a" style="left:590px;top:0;width:1px;height:17px;background:#01050c"></div>
<div class="a" style="left:591px;top:0;width:79px;height:16px;background:#15203a"></div>
<div class="v" style="left:590px">5,217.0 MHz</div>
<div class="a" style="left:669px;top:0;width:1px;height:17px;background:#2a2a2a"></div><div class="a" style="left:670px;top:0;width:1px;height:17px;background:#01050c"></div>
<div class="v" style="left:670px">1,008.4 MHz</div>
<div class="a" style="left:749px;top:0;width:1px;height:17px;background:#2a2a2a"></div><div class="a" style="left:750px;top:0;width:1px;height:17px;background:#01050c"></div>
<div class="v" style="left:750px">5,235.6 MHz</div>
<div class="a" style="left:829px;top:0;width:1px;height:17px;background:#2a2a2a"></div><div class="a" style="left:830px;top:0;width:1px;height:17px;background:#01050c"></div>
<div class="v" style="left:830px">5,038.8 MHz</div>
</div>
<div class="r" style="top:304px">
<div class="a" style="left:59px;top:0;width:850px;height:17px;background:#000"></div>
<div class="a" style="left:43px;top:16px;width:16px;height:1px;background:#1e1e1e"></div>
<div class="a" style="left:44px;top:2px"><svg width="13" height="13" viewBox="0 0 13 13"><path d="M9.3 2.2A5.3 5.3 0 1 0 11.1 8.8" fill="none" stroke="#c4c4c4" stroke-width="1.4"/><circle cx="9.6" cy="2.6" r="1.3" fill="#fff"/><path d="M6 3V6.6L8.2 9" fill="none" stroke="#cfcfcf" stroke-width="1.3"/></svg></div>
<div class="a" style="left:28px;top:1px"><svg width="8" height="14" viewBox="0 0 8 14"><path d="M1 1.5L7 7.5L1 13.5" fill="none" stroke="#dcdcdc" stroke-width="1.25"/></svg></div>
<div class="tx" id="n15" style="left:61px;top:1px;letter-spacing:-0.166px">Kern-Auslastung</div>
<div class="a" style="left:589px;top:0;width:1px;height:17px;background:#2a2a2a"></div><div class="a" style="left:590px;top:0;width:1px;height:17px;background:#01050c"></div>
<div class="v" style="left:590px">100.0 %</div>
<div class="a" style="left:669px;top:0;width:1px;height:17px;background:#2a2a2a"></div><div class="a" style="left:670px;top:0;width:1px;height:17px;background:#01050c"></div>
<div class="v" style="left:670px">3.2 %</div>
<div class="a" style="left:749px;top:0;width:1px;height:17px;background:#2a2a2a"></div><div class="a" style="left:750px;top:0;width:1px;height:17px;background:#01050c"></div>
<div class="v" style="left:750px">100.0 %</div>
<div class="a" style="left:829px;top:0;width:1px;height:17px;background:#2a2a2a"></div><div class="a" style="left:830px;top:0;width:1px;height:17px;background:#01050c"></div>
<div class="v" style="left:830px">99.2 %</div>
</div>
<div class="r" style="top:321px">
<div class="a" style="left:43px;top:0;width:866px;height:17px;background:#191919"></div>
<div class="a" style="left:27px;top:16px;width:16px;height:1px;background:#1e1e1e"></div>
<div class="a" style="left:28px;top:2px"><svg width="13" height="13" viewBox="0 0 13 13"><path d="M9.3 2.2A5.3 5.3 0 1 0 11.1 8.8" fill="none" stroke="#c4c4c4" stroke-width="1.4"/><circle cx="9.6" cy="2.6" r="1.3" fill="#fff"/><path d="M6 3V6.6L8.2 9" fill="none" stroke="#cfcfcf" stroke-width="1.3"/></svg></div>
<div class="tx" id="n16" style="left:45px;top:1px;letter-spacing:-0.234px">Maximale CPU-/Thread-Auslastung</div>
<div class="a" style="left:589px;top:0;width:1px;height:17px;background:#2a2a2a"></div><div class="a" style="left:590px;top:0;width:1px;height:17px;background:#01050c"></div>
<div class="v" style="left:590px">100.0 %</div>
<div class="a" style="left:669px;top:0;width:1px;height:17px;background:#2a2a2a"></div><div class="a" style="left:670px;top:0;width:1px;height:17px;background:#01050c"></div>
<div class="v" style="left:670px">38.6 %</div>
<div class="a" style="left:749px;top:0;width:1px;height:17px;background:#2a2a2a"></div><div class="a" style="left:750px;top:0;width:1px;height:17px;background:#01050c"></div>
<div class="v" style="left:750px">100.0 %</div>
<div class="a" style="left:829px;top:0;width:1px;height:17px;background:#2a2a2a"></div><div class="a" style="left:830px;top:0;width:1px;height:17px;background:#01050c"></div>
<div class="v" style="left:830px">99.6 %</div>
</div>
<div class="r" style="top:338px">
<div class="a" style="left:43px;top:0;width:866px;height:17px;background:#000"></div>
<div class="a" style="left:27px;top:16px;width:16px;height:1px;background:#1e1e1e"></div>
<div class="a" style="left:28px;top:2px"><svg width="13" height="13" viewBox="0 0 13 13"><path d="M9.3 2.2A5.3 5.3 0 1 0 11.1 8.8" fill="none" stroke="#c4c4c4" stroke-width="1.4"/><circle cx="9.6" cy="2.6" r="1.3" fill="#fff"/><path d="M6 3V6.6L8.2 9" fill="none" stroke="#cfcfcf" stroke-width="1.3"/></svg></div>
<div class="tx" id="n17" style="left:45px;top:1px;letter-spacing:-0.329px">Gesamte CPU-Auslastung</div>
<div class="a" style="left:589px;top:0;width:1px;height:17px;background:#2a2a2a"></div><div class="a" style="left:590px;top:0;width:1px;height:17px;background:#01050c"></div>
<div class="v" style="left:590px">100.0 %</div>
<div class="a" style="left:669px;top:0;width:1px;height:17px;background:#2a2a2a"></div><div class="a" style="left:670px;top:0;width:1px;height:17px;background:#01050c"></div>
<div class="v" style="left:670px">18.1 %</div>
<div class="a" style="left:749px;top:0;width:1px;height:17px;background:#2a2a2a"></div><div class="a" style="left:750px;top:0;width:1px;height:17px;background:#01050c"></div>
<div class="v" style="left:750px">100.0 %</div>
<div class="a" style="left:829px;top:0;width:1px;height:17px;background:#2a2a2a"></div><div class="a" style="left:830px;top:0;width:1px;height:17px;background:#01050c"></div>
<div class="v" style="left:830px">99.2 %</div>
</div>
<div class="r" style="top:355px">
<div class="a" style="left:59px;top:0;width:850px;height:17px;background:#191919"></div>
<div class="a" style="left:43px;top:16px;width:16px;height:1px;background:#1e1e1e"></div>
<div class="a" style="left:44px;top:2px"><svg width="13" height="13" viewBox="0 0 13 13"><path d="M9.3 2.2A5.3 5.3 0 1 0 11.1 8.8" fill="none" stroke="#c4c4c4" stroke-width="1.4"/><circle cx="9.6" cy="2.6" r="1.3" fill="#fff"/><path d="M6 3V6.6L8.2 9" fill="none" stroke="#cfcfcf" stroke-width="1.3"/></svg></div>
<div class="a" style="left:28px;top:1px"><svg width="8" height="14" viewBox="0 0 8 14"><path d="M1 1.5L7 7.5L1 13.5" fill="none" stroke="#dcdcdc" stroke-width="1.25"/></svg></div>
<div class="tx" id="n18" style="left:61px;top:1px;letter-spacing:-0.129px">Kern-Effizienz</div>
<div class="a" style="left:589px;top:0;width:1px;height:17px;background:#2a2a2a"></div><div class="a" style="left:590px;top:0;width:1px;height:17px;background:#01050c"></div>
<div class="v" style="left:590px">111.0 %</div>
<div class="a" style="left:669px;top:0;width:1px;height:17px;background:#2a2a2a"></div><div class="a" style="left:670px;top:0;width:1px;height:17px;background:#01050c"></div>
<div class="v" style="left:670px">3.2 %</div>
<div class="a" style="left:749px;top:0;width:1px;height:17px;background:#2a2a2a"></div><div class="a" style="left:750px;top:0;width:1px;height:17px;background:#01050c"></div>
<div class="v" style="left:750px">111.4 %</div>
<div class="a" style="left:829px;top:0;width:1px;height:17px;background:#2a2a2a"></div><div class="a" style="left:830px;top:0;width:1px;height:17px;background:#01050c"></div>
<div class="v" style="left:830px">107.2 %</div>
</div>
<div class="r" style="top:372px">
<div class="a" style="left:43px;top:0;width:866px;height:17px;background:#000"></div>
<div class="a" style="left:27px;top:16px;width:16px;height:1px;background:#1e1e1e"></div>
<div class="a" style="left:28px;top:2px"><svg width="13" height="13" viewBox="0 0 13 13"><path d="M9.3 2.2A5.3 5.3 0 1 0 11.1 8.8" fill="none" stroke="#c4c4c4" stroke-width="1.4"/><circle cx="9.6" cy="2.6" r="1.3" fill="#fff"/><path d="M6 3V6.6L8.2 9" fill="none" stroke="#cfcfcf" stroke-width="1.3"/></svg></div>
<div class="tx" id="n19" style="left:45px;top:1px;letter-spacing:-0.343px">Gesamte CPU-Effizienz</div>
<div class="a" style="left:589px;top:0;width:1px;height:17px;background:#2a2a2a"></div><div class="a" style="left:590px;top:0;width:1px;height:17px;background:#01050c"></div>
<div class="v" style="left:590px">111.0 %</div>
<div class="a" style="left:669px;top:0;width:1px;height:17px;background:#2a2a2a"></div><div class="a" style="left:670px;top:0;width:1px;height:17px;background:#01050c"></div>
<div class="v" style="left:670px">20.5 %</div>
<div class="a" style="left:749px;top:0;width:1px;height:17px;background:#2a2a2a"></div><div class="a" style="left:750px;top:0;width:1px;height:17px;background:#01050c"></div>
<div class="v" style="left:750px">111.4 %</div>
<div class="a" style="left:829px;top:0;width:1px;height:17px;background:#2a2a2a"></div><div class="a" style="left:830px;top:0;width:1px;height:17px;background:#01050c"></div>
<div class="v" style="left:830px">107.2 %</div>
</div>
<div class="r" style="top:389px">
<div class="a" style="left:59px;top:0;width:850px;height:17px;background:#191919"></div>
<div class="a" style="left:43px;top:16px;width:16px;height:1px;background:#1e1e1e"></div>
<div class="a" style="left:44px;top:2px"><svg width="13" height="13" viewBox="0 0 13 13"><path d="M9.3 2.2A5.3 5.3 0 1 0 11.1 8.8" fill="none" stroke="#c4c4c4" stroke-width="1.4"/><circle cx="9.6" cy="2.6" r="1.3" fill="#fff"/><path d="M6 3V6.6L8.2 9" fill="none" stroke="#cfcfcf" stroke-width="1.3"/></svg></div>
<div class="a" style="left:28px;top:1px"><svg width="8" height="14" viewBox="0 0 8 14"><path d="M1 1.5L7 7.5L1 13.5" fill="none" stroke="#dcdcdc" stroke-width="1.25"/></svg></div>
<div class="tx" id="n20" style="left:61px;top:1px;letter-spacing:-0.073px">Kern-Takt-Multiplikatoren</div>
<div class="a" style="left:589px;top:0;width:1px;height:17px;background:#2a2a2a"></div><div class="a" style="left:590px;top:0;width:1px;height:17px;background:#01050c"></div>
<div class="v" style="left:590px">52.2 x</div>
<div class="a" style="left:669px;top:0;width:1px;height:17px;background:#2a2a2a"></div><div class="a" style="left:670px;top:0;width:1px;height:17px;background:#01050c"></div>
<div class="v" style="left:670px">25.4 x</div>
<div class="a" style="left:749px;top:0;width:1px;height:17px;background:#2a2a2a"></div><div class="a" style="left:750px;top:0;width:1px;height:17px;background:#01050c"></div>
<div class="v" style="left:750px">52.2 x</div>
<div class="a" style="left:829px;top:0;width:1px;height:17px;background:#2a2a2a"></div><div class="a" style="left:830px;top:0;width:1px;height:17px;background:#01050c"></div>
<div class="v" style="left:830px">50.9 x</div>
</div>
<div class="r" style="top:406px">
<div class="a" style="left:43px;top:0;width:866px;height:17px;background:#000"></div>
<div class="a" style="left:589px;top:0;width:1px;height:17px;background:#2a2a2a"></div><div class="a" style="left:590px;top:0;width:1px;height:17px;background:#01050c"></div>
<div class="a" style="left:669px;top:0;width:1px;height:17px;background:#2a2a2a"></div><div class="a" style="left:670px;top:0;width:1px;height:17px;background:#01050c"></div>
<div class="a" style="left:749px;top:0;width:1px;height:17px;background:#2a2a2a"></div><div class="a" style="left:750px;top:0;width:1px;height:17px;background:#01050c"></div>
<div class="a" style="left:829px;top:0;width:1px;height:17px;background:#2a2a2a"></div><div class="a" style="left:830px;top:0;width:1px;height:17px;background:#01050c"></div>
</div>
<div class="r" style="top:423px">
<div class="a" style="left:43px;top:0;width:866px;height:17px;background:#242424"></div>
<div class="a" style="left:27px;top:0;width:16px;height:16px;background:#0a0a0a"></div>
<div class="a" style="left:12px;top:1px"><svg width="8" height="14" viewBox="0 0 8 14"><path d="M1 1.5L7 7.5L1 13.5" fill="none" stroke="#dcdcdc" stroke-width="1.25"/></svg></div>
<div class="a" style="left:29px;top:0px"><svg width="12" height="16" viewBox="0 0 12 16"><rect x="2" y="1" width="8" height="14" rx="1.5" fill="#555"/><rect x="3.5" y="2.5" width="5" height="11" fill="#676767"/><rect x="0.3" y="2.5" width="1.8" height="1.3" fill="#b0b0b0"/><rect x="9.9" y="2.5" width="1.8" height="1.3" fill="#b0b0b0"/><rect x="0.3" y="5.5" width="1.8" height="1.3" fill="#b0b0b0"/><rect x="9.9" y="5.5" width="1.8" height="1.3" fill="#b0b0b0"/><rect x="0.3" y="8.5" width="1.8" height="1.3" fill="#b0b0b0"/><rect x="9.9" y="8.5" width="1.8" height="1.3" fill="#b0b0b0"/><rect x="0.3" y="11.5" width="1.8" height="1.3" fill="#b0b0b0"/><rect x="9.9" y="11.5" width="1.8" height="1.3" fill="#b0b0b0"/></svg></div>
<div class="gx" id="n22" style="left:45px;top:0px;letter-spacing:0.055px">CPU [#0]: AMD Ryzen 7 9800X3D: C-State Belegung</div>
<div class="a" style="left:589px;top:0;width:1px;height:17px;background:#2a2a2a"></div><div class="a" style="left:590px;top:0;width:1px;height:17px;background:#01050c"></div>
<div class="a" style="left:669px;top:0;width:1px;height:17px;background:#2a2a2a"></div><div class="a" style="left:670px;top:0;width:1px;height:17px;background:#01050c"></div>
<div class="a" style="left:749px;top:0;width:1px;height:17px;background:#2a2a2a"></div><div class="a" style="left:750px;top:0;width:1px;height:17px;background:#01050c"></div>
<div class="a" style="left:829px;top:0;width:1px;height:17px;background:#2a2a2a"></div><div class="a" style="left:830px;top:0;width:1px;height:17px;background:#01050c"></div>
</div>
<div class="r" style="top:440px">
<div class="a" style="left:43px;top:0;width:866px;height:17px;background:#000"></div>
<div class="a" style="left:589px;top:0;width:1px;height:17px;background:#2a2a2a"></div><div class="a" style="left:590px;top:0;width:1px;height:17px;background:#01050c"></div>
<div class="a" style="left:669px;top:0;width:1px;height:17px;background:#2a2a2a"></div><div class="a" style="left:670px;top:0;width:1px;height:17px;background:#01050c"></div>
<div class="a" style="left:749px;top:0;width:1px;height:17px;background:#2a2a2a"></div><div class="a" style="left:750px;top:0;width:1px;height:17px;background:#01050c"></div>
<div class="a" style="left:829px;top:0;width:1px;height:17px;background:#2a2a2a"></div><div class="a" style="left:830px;top:0;width:1px;height:17px;background:#01050c"></div>
</div>
<div class="r" style="top:457px">
<div class="a" style="left:43px;top:0;width:866px;height:17px;background:#242424"></div>
<div class="a" style="left:27px;top:0;width:16px;height:16px;background:#0a0a0a"></div>
<div class="a" style="left:12px;top:1px"><svg width="8" height="14" viewBox="0 0 8 14"><path d="M1 1.5L7 7.5L1 13.5" fill="none" stroke="#dcdcdc" stroke-width="1.25"/></svg></div>
<div class="a" style="left:29px;top:0px"><svg width="12" height="16" viewBox="0 0 12 16"><rect x="2" y="1" width="8" height="14" rx="1.5" fill="#555"/><rect x="3.5" y="2.5" width="5" height="11" fill="#676767"/><rect x="0.3" y="2.5" width="1.8" height="1.3" fill="#b0b0b0"/><rect x="9.9" y="2.5" width="1.8" height="1.3" fill="#b0b0b0"/><rect x="0.3" y="5.5" width="1.8" height="1.3" fill="#b0b0b0"/><rect x="9.9" y="5.5" width="1.8" height="1.3" fill="#b0b0b0"/><rect x="0.3" y="8.5" width="1.8" height="1.3" fill="#b0b0b0"/><rect x="9.9" y="8.5" width="1.8" height="1.3" fill="#b0b0b0"/><rect x="0.3" y="11.5" width="1.8" height="1.3" fill="#b0b0b0"/><rect x="9.9" y="11.5" width="1.8" height="1.3" fill="#b0b0b0"/></svg></div>
<div class="gx" id="n24" style="left:45px;top:0px;letter-spacing:0.184px">Speicher-Zeitangaben</div>
<div class="a" style="left:589px;top:0;width:1px;height:17px;background:#2a2a2a"></div><div class="a" style="left:590px;top:0;width:1px;height:17px;background:#01050c"></div>
<div class="a" style="left:669px;top:0;width:1px;height:17px;background:#2a2a2a"></div><div class="a" style="left:670px;top:0;width:1px;height:17px;background:#01050c"></div>
<div class="a" style="left:749px;top:0;width:1px;height:17px;background:#2a2a2a"></div><div class="a" style="left:750px;top:0;width:1px;height:17px;background:#01050c"></div>
<div class="a" style="left:829px;top:0;width:1px;height:17px;background:#2a2a2a"></div><div class="a" style="left:830px;top:0;width:1px;height:17px;background:#01050c"></div>
</div>
<div class="r" style="top:474px">
<div class="a" style="left:43px;top:0;width:866px;height:17px;background:#191919"></div>
<div class="a" style="left:589px;top:0;width:1px;height:17px;background:#2a2a2a"></div><div class="a" style="left:590px;top:0;width:1px;height:17px;background:#01050c"></div>
<div class="a" style="left:669px;top:0;width:1px;height:17px;background:#2a2a2a"></div><div class="a" style="left:670px;top:0;width:1px;height:17px;background:#01050c"></div>
<div class="a" style="left:749px;top:0;width:1px;height:17px;background:#2a2a2a"></div><div class="a" style="left:750px;top:0;width:1px;height:17px;background:#01050c"></div>
<div class="a" style="left:829px;top:0;width:1px;height:17px;background:#2a2a2a"></div><div class="a" style="left:830px;top:0;width:1px;height:17px;background:#01050c"></div>
</div>
<div class="r" style="top:491px">
<div class="a" style="left:43px;top:0;width:866px;height:17px;background:#242424"></div>
<div class="a" style="left:27px;top:0;width:16px;height:16px;background:#0a0a0a"></div>
<div class="a" style="left:9px;top:4px"><svg width="14" height="9" viewBox="0 0 14 9"><path d="M1 1L7 7L13 1" fill="none" stroke="#dcdcdc" stroke-width="1.25"/></svg></div>
<div class="a" style="left:29px;top:0px"><svg width="12" height="16" viewBox="0 0 12 16"><rect x="2" y="1" width="8" height="14" rx="1.5" fill="#555"/><rect x="3.5" y="2.5" width="5" height="11" fill="#676767"/><rect x="0.3" y="2.5" width="1.8" height="1.3" fill="#b0b0b0"/><rect x="9.9" y="2.5" width="1.8" height="1.3" fill="#b0b0b0"/><rect x="0.3" y="5.5" width="1.8" height="1.3" fill="#b0b0b0"/><rect x="9.9" y="5.5" width="1.8" height="1.3" fill="#b0b0b0"/><rect x="0.3" y="8.5" width="1.8" height="1.3" fill="#b0b0b0"/><rect x="9.9" y="8.5" width="1.8" height="1.3" fill="#b0b0b0"/><rect x="0.3" y="11.5" width="1.8" height="1.3" fill="#b0b0b0"/><rect x="9.9" y="11.5" width="1.8" height="1.3" fill="#b0b0b0"/></svg></div>
<div class="gx" id="n26" style="left:45px;top:0px;letter-spacing:0.002px">CPU [#0]: AMD Ryzen 7 9800X3D: Enhanced</div>
<div class="a" style="left:589px;top:0;width:1px;height:17px;background:#2a2a2a"></div><div class="a" style="left:590px;top:0;width:1px;height:17px;background:#01050c"></div>
<div class="a" style="left:669px;top:0;width:1px;height:17px;background:#2a2a2a"></div><div class="a" style="left:670px;top:0;width:1px;height:17px;background:#01050c"></div>
<div class="a" style="left:749px;top:0;width:1px;height:17px;background:#2a2a2a"></div><div class="a" style="left:750px;top:0;width:1px;height:17px;background:#01050c"></div>
<div class="a" style="left:829px;top:0;width:1px;height:17px;background:#2a2a2a"></div><div class="a" style="left:830px;top:0;width:1px;height:17px;background:#01050c"></div>
</div>
<div class="r" style="top:508px">
<div class="a" style="left:43px;top:0;width:866px;height:17px;background:#191919"></div>
<div class="a" style="left:27px;top:16px;width:16px;height:1px;background:#1e1e1e"></div>
<div class="a" style="left:32px;top:0"><svg width="6" height="16" viewBox="0 0 6 16"><rect x="2" y="1" width="2" height="4.5" fill="#e4ecef"/><rect x="2" y="5.5" width="2" height="6" fill="#e0705e"/><circle cx="3" cy="12.8" r="2" fill="#e82020"/></svg></div>
<div class="tx" id="n27" style="left:45px;top:1px;letter-spacing:-0.190px">CPU (Tctl/Tdie)</div>
<div class="a" style="left:589px;top:0;width:1px;height:17px;background:#2a2a2a"></div><div class="a" style="left:590px;top:0;width:1px;height:17px;background:#01050c"></div>
<div class="a" style="left:591px;top:0;width:79px;height:16px;background:#15203a"></div>
<div class="v" style="left:590px">62.1 °C</div>
<div class="a" style="left:669px;top:0;width:1px;height:17px;background:#2a2a2a"></div><div class="a" style="left:670px;top:0;width:1px;height:17px;background:#01050c"></div>
<div class="v" style="left:670px">48.4 °C</div>
<div class="a" style="left:749px;top:0;width:1px;height:17px;background:#2a2a2a"></div><div class="a" style="left:750px;top:0;width:1px;height:17px;background:#01050c"></div>
<div class="v" style="left:750px;color:#f03a2a">90.6 °C</div>
<div class="a" style="left:829px;top:0;width:1px;height:17px;background:#2a2a2a"></div><div class="a" style="left:830px;top:0;width:1px;height:17px;background:#01050c"></div>
<div class="v" style="left:830px">73.7 °C</div>
</div>
<div class="r" style="top:525px">
<div class="a" style="left:43px;top:0;width:866px;height:17px;background:#000"></div>
<div class="a" style="left:27px;top:16px;width:16px;height:1px;background:#1e1e1e"></div>
<div class="a" style="left:32px;top:0"><svg width="6" height="16" viewBox="0 0 6 16"><rect x="2" y="1" width="2" height="4.5" fill="#e4ecef"/><rect x="2" y="5.5" width="2" height="6" fill="#e0705e"/><circle cx="3" cy="12.8" r="2" fill="#e82020"/></svg></div>
<div class="tx" id="n28" style="left:45px;top:1px;letter-spacing:-0.247px">CPU-Gehäuse (Durchschnitt)</div>
<div class="a" style="left:589px;top:0;width:1px;height:17px;background:#2a2a2a"></div><div class="a" style="left:590px;top:0;width:1px;height:17px;background:#01050c"></div>
<div class="a" style="left:591px;top:0;width:79px;height:16px;background:#15203a"></div>
<div class="v" style="left:590px">59.9 °C</div>
<div class="a" style="left:669px;top:0;width:1px;height:17px;background:#2a2a2a"></div><div class="a" style="left:670px;top:0;width:1px;height:17px;background:#01050c"></div>
<div class="v" style="left:670px">47.7 °C</div>
<div class="a" style="left:749px;top:0;width:1px;height:17px;background:#2a2a2a"></div><div class="a" style="left:750px;top:0;width:1px;height:17px;background:#01050c"></div>
<div class="v" style="left:750px">89.3 °C</div>
<div class="a" style="left:829px;top:0;width:1px;height:17px;background:#2a2a2a"></div><div class="a" style="left:830px;top:0;width:1px;height:17px;background:#01050c"></div>
<div class="v" style="left:830px">72.6 °C</div>
</div>
<div class="r" style="top:542px">
<div class="a" style="left:43px;top:0;width:866px;height:17px;background:#191919"></div>
<div class="a" style="left:27px;top:16px;width:16px;height:1px;background:#1e1e1e"></div>
<div class="a" style="left:32px;top:0"><svg width="6" height="16" viewBox="0 0 6 16"><rect x="2" y="1" width="2" height="4.5" fill="#e4ecef"/><rect x="2" y="5.5" width="2" height="6" fill="#e0705e"/><circle cx="3" cy="12.8" r="2" fill="#e82020"/></svg></div>
<div class="tx" id="n29" style="left:45px;top:1px;letter-spacing:-0.515px">CPU CCD1 (Tdie)</div>
<div class="a" style="left:589px;top:0;width:1px;height:17px;background:#2a2a2a"></div><div class="a" style="left:590px;top:0;width:1px;height:17px;background:#01050c"></div>
<div class="a" style="left:591px;top:0;width:79px;height:16px;background:#15203a"></div>
<div class="v" style="left:590px">59.9 °C</div>
<div class="a" style="left:669px;top:0;width:1px;height:17px;background:#2a2a2a"></div><div class="a" style="left:670px;top:0;width:1px;height:17px;background:#01050c"></div>
<div class="v" style="left:670px">35.9 °C</div>
<div class="a" style="left:749px;top:0;width:1px;height:17px;background:#2a2a2a"></div><div class="a" style="left:750px;top:0;width:1px;height:17px;background:#01050c"></div>
<div class="v" style="left:750px;color:#f03a2a">91.5 °C</div>
<div class="a" style="left:829px;top:0;width:1px;height:17px;background:#2a2a2a"></div><div class="a" style="left:830px;top:0;width:1px;height:17px;background:#01050c"></div>
<div class="v" style="left:830px">71.5 °C</div>
</div>
<div class="r" style="top:559px">
<div class="a" style="left:59px;top:0;width:850px;height:17px;background:#000"></div>
<div class="a" style="left:43px;top:16px;width:16px;height:1px;background:#1e1e1e"></div>
<div class="a" style="left:48px;top:0"><svg width="6" height="16" viewBox="0 0 6 16"><rect x="2" y="1" width="2" height="4.5" fill="#e4ecef"/><rect x="2" y="5.5" width="2" height="6" fill="#e0705e"/><circle cx="3" cy="12.8" r="2" fill="#e82020"/></svg></div>
<div class="a" style="left:25px;top:4px"><svg width="14" height="9" viewBox="0 0 14 9"><path d="M1 1L7 7L13 1" fill="none" stroke="#dcdcdc" stroke-width="1.25"/></svg></div>
<div class="tx" id="n30" style="left:61px;top:1px;letter-spacing:-0.061px">Kern-Temperaturen</div>
<div class="a" style="left:589px;top:0;width:1px;height:17px;background:#2a2a2a"></div><div class="a" style="left:590px;top:0;width:1px;height:17px;background:#01050c"></div>
<div class="a" style="left:591px;top:0;width:79px;height:16px;background:#15203a"></div>
<div class="v" style="left:590px">58.1 °C</div>
<div class="a" style="left:669px;top:0;width:1px;height:17px;background:#2a2a2a"></div><div class="a" style="left:670px;top:0;width:1px;height:17px;background:#01050c"></div>
<div class="v" style="left:670px">29.7 °C</div>
<div class="a" style="left:749px;top:0;width:1px;height:17px;background:#2a2a2a"></div><div class="a" style="left:750px;top:0;width:1px;height:17px;background:#01050c"></div>
<div class="v" style="left:750px">88.9 °C</div>
<div class="a" style="left:829px;top:0;width:1px;height:17px;background:#2a2a2a"></div><div class="a" style="left:830px;top:0;width:1px;height:17px;background:#01050c"></div>
<div class="v" style="left:830px">68.7 °C</div>
</div>
<div class="r" style="top:576px">
<div class="a" style="left:59px;top:0;width:850px;height:17px;background:#191919"></div>
<div class="a" style="left:43px;top:16px;width:16px;height:1px;background:#1e1e1e"></div>
<div class="a" style="left:48px;top:0"><svg width="6" height="16" viewBox="0 0 6 16"><rect x="2" y="1" width="2" height="4.5" fill="#e4ecef"/><rect x="2" y="5.5" width="2" height="6" fill="#e0705e"/><circle cx="3" cy="12.8" r="2" fill="#e82020"/></svg></div>
<div class="tx" id="n31" style="left:61px;top:1px;letter-spacing:-0.300px">Core0 (CCD1)</div>
<div class="a" style="left:589px;top:0;width:1px;height:17px;background:#2a2a2a"></div><div class="a" style="left:590px;top:0;width:1px;height:17px;background:#01050c"></div>
<div class="a" style="left:591px;top:0;width:79px;height:16px;background:#15203a"></div>
<div class="v" style="left:590px">57.0 °C</div>
<div class="a" style="left:669px;top:0;width:1px;height:17px;background:#2a2a2a"></div><div class="a" style="left:670px;top:0;width:1px;height:17px;background:#01050c"></div>
<div class="v" style="left:670px">33.2 °C</div>
<div class="a" style="left:749px;top:0;width:1px;height:17px;background:#2a2a2a"></div><div class="a" style="left:750px;top:0;width:1px;height:17px;background:#01050c"></div>
<div class="v" style="left:750px">81.9 °C</div>
<div class="a" style="left:829px;top:0;width:1px;height:17px;background:#2a2a2a"></div><div class="a" style="left:830px;top:0;width:1px;height:17px;background:#01050c"></div>
<div class="v" style="left:830px">65.9 °C</div>
</div>
<div class="r" style="top:593px">
<div class="a" style="left:59px;top:0;width:850px;height:17px;background:#000"></div>
<div class="a" style="left:43px;top:16px;width:16px;height:1px;background:#1e1e1e"></div>
<div class="a" style="left:48px;top:0"><svg width="6" height="16" viewBox="0 0 6 16"><rect x="2" y="1" width="2" height="4.5" fill="#e4ecef"/><rect x="2" y="5.5" width="2" height="6" fill="#e0705e"/><circle cx="3" cy="12.8" r="2" fill="#e82020"/></svg></div>
<div class="tx" id="n32" style="left:61px;top:1px;letter-spacing:-0.300px">Core1 (CCD1)</div>
<div class="a" style="left:589px;top:0;width:1px;height:17px;background:#2a2a2a"></div><div class="a" style="left:590px;top:0;width:1px;height:17px;background:#01050c"></div>
<div class="a" style="left:591px;top:0;width:79px;height:16px;background:#15203a"></div>
<div class="v" style="left:590px">55.9 °C</div>
<div class="a" style="left:669px;top:0;width:1px;height:17px;background:#2a2a2a"></div><div class="a" style="left:670px;top:0;width:1px;height:17px;background:#01050c"></div>
<div class="v" style="left:670px">32.5 °C</div>
<div class="a" style="left:749px;top:0;width:1px;height:17px;background:#2a2a2a"></div><div class="a" style="left:750px;top:0;width:1px;height:17px;background:#01050c"></div>
<div class="v" style="left:750px">82.8 °C</div>
<div class="a" style="left:829px;top:0;width:1px;height:17px;background:#2a2a2a"></div><div class="a" style="left:830px;top:0;width:1px;height:17px;background:#01050c"></div>
<div class="v" style="left:830px">65.9 °C</div>
</div>
<div class="r" style="top:610px">
<div class="a" style="left:59px;top:0;width:850px;height:17px;background:#191919"></div>
<div class="a" style="left:43px;top:16px;width:16px;height:1px;background:#1e1e1e"></div>
<div class="a" style="left:48px;top:0"><svg width="6" height="16" viewBox="0 0 6 16"><rect x="2" y="1" width="2" height="4.5" fill="#e4ecef"/><rect x="2" y="5.5" width="2" height="6" fill="#e0705e"/><circle cx="3" cy="12.8" r="2" fill="#e82020"/></svg></div>
<div class="tx" id="n33" style="left:61px;top:1px;letter-spacing:-0.300px">Core2 (CCD1)</div>
<div class="a" style="left:589px;top:0;width:1px;height:17px;background:#2a2a2a"></div><div class="a" style="left:590px;top:0;width:1px;height:17px;background:#01050c"></div>
<div class="a" style="left:591px;top:0;width:79px;height:16px;background:#15203a"></div>
<div class="v" style="left:590px">59.3 °C</div>
<div class="a" style="left:669px;top:0;width:1px;height:17px;background:#2a2a2a"></div><div class="a" style="left:670px;top:0;width:1px;height:17px;background:#01050c"></div>
<div class="v" style="left:670px">33.2 °C</div>
<div class="a" style="left:749px;top:0;width:1px;height:17px;background:#2a2a2a"></div><div class="a" style="left:750px;top:0;width:1px;height:17px;background:#01050c"></div>
<div class="v" style="left:750px">88.2 °C</div>
<div class="a" style="left:829px;top:0;width:1px;height:17px;background:#2a2a2a"></div><div class="a" style="left:830px;top:0;width:1px;height:17px;background:#01050c"></div>
<div class="v" style="left:830px">70.3 °C</div>
</div>
<div class="r" style="top:627px">
<div class="a" style="left:59px;top:0;width:850px;height:17px;background:#000"></div>
<div class="a" style="left:43px;top:16px;width:16px;height:1px;background:#1e1e1e"></div>
<div class="a" style="left:48px;top:0"><svg width="6" height="16" viewBox="0 0 6 16"><rect x="2" y="1" width="2" height="4.5" fill="#e4ecef"/><rect x="2" y="5.5" width="2" height="6" fill="#e0705e"/><circle cx="3" cy="12.8" r="2" fill="#e82020"/></svg></div>
<div class="tx" id="n34" style="left:61px;top:1px;letter-spacing:-0.300px">Core3 (CCD1)</div>
<div class="a" style="left:589px;top:0;width:1px;height:17px;background:#2a2a2a"></div><div class="a" style="left:590px;top:0;width:1px;height:17px;background:#01050c"></div>
<div class="a" style="left:591px;top:0;width:79px;height:16px;background:#15203a"></div>
<div class="v" style="left:590px">58.4 °C</div>
<div class="a" style="left:669px;top:0;width:1px;height:17px;background:#2a2a2a"></div><div class="a" style="left:670px;top:0;width:1px;height:17px;background:#01050c"></div>
<div class="v" style="left:670px">35.4 °C</div>
<div class="a" style="left:749px;top:0;width:1px;height:17px;background:#2a2a2a"></div><div class="a" style="left:750px;top:0;width:1px;height:17px;background:#01050c"></div>
<div class="v" style="left:750px">88.9 °C</div>
<div class="a" style="left:829px;top:0;width:1px;height:17px;background:#2a2a2a"></div><div class="a" style="left:830px;top:0;width:1px;height:17px;background:#01050c"></div>
<div class="v" style="left:830px">70.0 °C</div>
</div>
<div class="r" style="top:644px">
<div class="a" style="left:59px;top:0;width:850px;height:17px;background:#191919"></div>
<div class="a" style="left:43px;top:16px;width:16px;height:1px;background:#1e1e1e"></div>
<div class="a" style="left:48px;top:0"><svg width="6" height="16" viewBox="0 0 6 16"><rect x="2" y="1" width="2" height="4.5" fill="#e4ecef"/><rect x="2" y="5.5" width="2" height="6" fill="#e0705e"/><circle cx="3" cy="12.8" r="2" fill="#e82020"/></svg></div>
<div class="tx" id="n35" style="left:61px;top:1px;letter-spacing:-0.300px">Core4 (CCD1)</div>
<div class="a" style="left:589px;top:0;width:1px;height:17px;background:#2a2a2a"></div><div class="a" style="left:590px;top:0;width:1px;height:17px;background:#01050c"></div>
<div class="a" style="left:591px;top:0;width:79px;height:16px;background:#15203a"></div>
<div class="v" style="left:590px">59.8 °C</div>
<div class="a" style="left:669px;top:0;width:1px;height:17px;background:#2a2a2a"></div><div class="a" style="left:670px;top:0;width:1px;height:17px;background:#01050c"></div>
<div class="v" style="left:670px">37.4 °C</div>
<div class="a" style="left:749px;top:0;width:1px;height:17px;background:#2a2a2a"></div><div class="a" style="left:750px;top:0;width:1px;height:17px;background:#01050c"></div>
<div class="v" style="left:750px">88.4 °C</div>
<div class="a" style="left:829px;top:0;width:1px;height:17px;background:#2a2a2a"></div><div class="a" style="left:830px;top:0;width:1px;height:17px;background:#01050c"></div>
<div class="v" style="left:830px">70.4 °C</div>
</div>
<div class="r" style="top:661px">
<div class="a" style="left:59px;top:0;width:850px;height:17px;background:#000"></div>
<div class="a" style="left:43px;top:16px;width:16px;height:1px;background:#1e1e1e"></div>
<div class="a" style="left:48px;top:0"><svg width="6" height="16" viewBox="0 0 6 16"><rect x="2" y="1" width="2" height="4.5" fill="#e4ecef"/><rect x="2" y="5.5" width="2" height="6" fill="#e0705e"/><circle cx="3" cy="12.8" r="2" fill="#e82020"/></svg></div>
<div class="tx" id="n36" style="left:61px;top:1px;letter-spacing:-0.300px">Core5 (CCD1)</div>
<div class="a" style="left:589px;top:0;width:1px;height:17px;background:#2a2a2a"></div><div class="a" style="left:590px;top:0;width:1px;height:17px;background:#01050c"></div>
<div class="a" style="left:591px;top:0;width:79px;height:16px;background:#15203a"></div>
<div class="v" style="left:590px">58.3 °C</div>
<div class="a" style="left:669px;top:0;width:1px;height:17px;background:#2a2a2a"></div><div class="a" style="left:670px;top:0;width:1px;height:17px;background:#01050c"></div>
<div class="v" style="left:670px">31.7 °C</div>
<div class="a" style="left:749px;top:0;width:1px;height:17px;background:#2a2a2a"></div><div class="a" style="left:750px;top:0;width:1px;height:17px;background:#01050c"></div>
<div class="v" style="left:750px">88.7 °C</div>
<div class="a" style="left:829px;top:0;width:1px;height:17px;background:#2a2a2a"></div><div class="a" style="left:830px;top:0;width:1px;height:17px;background:#01050c"></div>
<div class="v" style="left:830px">69.8 °C</div>
</div>
<div class="r" style="top:678px">
<div class="a" style="left:59px;top:0;width:850px;height:17px;background:#191919"></div>
<div class="a" style="left:43px;top:16px;width:16px;height:1px;background:#1e1e1e"></div>
<div class="a" style="left:48px;top:0"><svg width="6" height="16" viewBox="0 0 6 16"><rect x="2" y="1" width="2" height="4.5" fill="#e4ecef"/><rect x="2" y="5.5" width="2" height="6" fill="#e0705e"/><circle cx="3" cy="12.8" r="2" fill="#e82020"/></svg></div>
<div class="tx" id="n37" style="left:61px;top:1px;letter-spacing:-0.300px">Core6 (CCD1)</div>
<div class="a" style="left:589px;top:0;width:1px;height:17px;background:#2a2a2a"></div><div class="a" style="left:590px;top:0;width:1px;height:17px;background:#01050c"></div>
<div class="a" style="left:591px;top:0;width:79px;height:16px;background:#15203a"></div>
<div class="v" style="left:590px">58.8 °C</div>
<div class="a" style="left:669px;top:0;width:1px;height:17px;background:#2a2a2a"></div><div class="a" style="left:670px;top:0;width:1px;height:17px;background:#01050c"></div>
<div class="v" style="left:670px">32.4 °C</div>
<div class="a" style="left:749px;top:0;width:1px;height:17px;background:#2a2a2a"></div><div class="a" style="left:750px;top:0;width:1px;height:17px;background:#01050c"></div>
<div class="v" style="left:750px">87.2 °C</div>
<div class="a" style="left:829px;top:0;width:1px;height:17px;background:#2a2a2a"></div><div class="a" style="left:830px;top:0;width:1px;height:17px;background:#01050c"></div>
<div class="v" style="left:830px">69.5 °C</div>
</div>
<div class="r" style="top:695px">
<div class="a" style="left:59px;top:0;width:850px;height:17px;background:#000"></div>
<div class="a" style="left:43px;top:16px;width:16px;height:1px;background:#1e1e1e"></div>
<div class="a" style="left:48px;top:0"><svg width="6" height="16" viewBox="0 0 6 16"><rect x="2" y="1" width="2" height="4.5" fill="#e4ecef"/><rect x="2" y="5.5" width="2" height="6" fill="#e0705e"/><circle cx="3" cy="12.8" r="2" fill="#e82020"/></svg></div>
<div class="tx" id="n38" style="left:61px;top:1px;letter-spacing:-0.300px">Core7 (CCD1)</div>
<div class="a" style="left:589px;top:0;width:1px;height:17px;background:#2a2a2a"></div><div class="a" style="left:590px;top:0;width:1px;height:17px;background:#01050c"></div>
<div class="a" style="left:591px;top:0;width:79px;height:16px;background:#15203a"></div>
<div class="v" style="left:590px">57.4 °C</div>
<div class="a" style="left:669px;top:0;width:1px;height:17px;background:#2a2a2a"></div><div class="a" style="left:670px;top:0;width:1px;height:17px;background:#01050c"></div>
<div class="v" style="left:670px">29.7 °C</div>
<div class="a" style="left:749px;top:0;width:1px;height:17px;background:#2a2a2a"></div><div class="a" style="left:750px;top:0;width:1px;height:17px;background:#01050c"></div>
<div class="v" style="left:750px">86.3 °C</div>
<div class="a" style="left:829px;top:0;width:1px;height:17px;background:#2a2a2a"></div><div class="a" style="left:830px;top:0;width:1px;height:17px;background:#01050c"></div>
<div class="v" style="left:830px">68.0 °C</div>
</div>
<div class="r" style="top:712px">
<div class="a" style="left:59px;top:0;width:850px;height:17px;background:#191919"></div>
<div class="a" style="left:43px;top:16px;width:16px;height:1px;background:#1e1e1e"></div>
<div class="a" style="left:48px;top:0"><svg width="6" height="16" viewBox="0 0 6 16"><rect x="2" y="1" width="2" height="4.5" fill="#e4ecef"/><rect x="2" y="5.5" width="2" height="6" fill="#e0705e"/><circle cx="3" cy="12.8" r="2" fill="#e82020"/></svg></div>
<div class="a" style="left:28px;top:1px"><svg width="8" height="14" viewBox="0 0 8 14"><path d="M1 1.5L7 7.5L1 13.5" fill="none" stroke="#dcdcdc" stroke-width="1.25"/></svg></div>
<div class="tx" id="n39" style="left:61px;top:1px;letter-spacing:-0.049px">L3-Temperaturen</div>
<div class="a" style="left:589px;top:0;width:1px;height:17px;background:#2a2a2a"></div><div class="a" style="left:590px;top:0;width:1px;height:17px;background:#01050c"></div>
<div class="a" style="left:591px;top:0;width:79px;height:16px;background:#15203a"></div>
<div class="v" style="left:590px">43.3 °C</div>
<div class="a" style="left:669px;top:0;width:1px;height:17px;background:#2a2a2a"></div><div class="a" style="left:670px;top:0;width:1px;height:17px;background:#01050c"></div>
<div class="v" style="left:670px">33.3 °C</div>
<div class="a" style="left:749px;top:0;width:1px;height:17px;background:#2a2a2a"></div><div class="a" style="left:750px;top:0;width:1px;height:17px;background:#01050c"></div>
<div class="v" style="left:750px">55.6 °C</div>
<div class="a" style="left:829px;top:0;width:1px;height:17px;background:#2a2a2a"></div><div class="a" style="left:830px;top:0;width:1px;height:17px;background:#01050c"></div>
<div class="v" style="left:830px">48.8 °C</div>
</div>
<div class="r" style="top:729px">
<div class="a" style="left:43px;top:0;width:866px;height:17px;background:#191919"></div>
<div class="a" style="left:27px;top:16px;width:16px;height:1px;background:#1e1e1e"></div>
<div class="a" style="left:32px;top:0"><svg width="6" height="16" viewBox="0 0 6 16"><rect x="2" y="1" width="2" height="4.5" fill="#e4ecef"/><rect x="2" y="5.5" width="2" height="6" fill="#e0705e"/><circle cx="3" cy="12.8" r="2" fill="#e82020"/></svg></div>
<div class="tx" id="n40" style="left:45px;top:1px;letter-spacing:-0.244px">CPU IOD Hotspot</div>
<div class="a" style="left:589px;top:0;width:1px;height:17px;background:#2a2a2a"></div><div class="a" style="left:590px;top:0;width:1px;height:17px;background:#01050c"></div>
<div class="a" style="left:591px;top:0;width:79px;height:16px;background:#15203a"></div>
<div class="v" style="left:590px">51.2 °C</div>
<div class="a" style="left:669px;top:0;width:1px;height:17px;background:#2a2a2a"></div><div class="a" style="left:670px;top:0;width:1px;height:17px;background:#01050c"></div>
<div class="v" style="left:670px">47.2 °C</div>
<div class="a" style="left:749px;top:0;width:1px;height:17px;background:#2a2a2a"></div><div class="a" style="left:750px;top:0;width:1px;height:17px;background:#01050c"></div>
<div class="v" style="left:750px">54.0 °C</div>
<div class="a" style="left:829px;top:0;width:1px;height:17px;background:#2a2a2a"></div><div class="a" style="left:830px;top:0;width:1px;height:17px;background:#01050c"></div>
<div class="v" style="left:830px">51.9 °C</div>
</div>
<div class="r" style="top:746px">
<div class="a" style="left:43px;top:0;width:866px;height:17px;background:#000"></div>
<div class="a" style="left:27px;top:16px;width:16px;height:1px;background:#1e1e1e"></div>
<div class="a" style="left:32px;top:0"><svg width="6" height="16" viewBox="0 0 6 16"><rect x="2" y="1" width="2" height="4.5" fill="#e4ecef"/><rect x="2" y="5.5" width="2" height="6" fill="#e0705e"/><circle cx="3" cy="12.8" r="2" fill="#e82020"/></svg></div>
<div class="tx" id="n41" style="left:45px;top:1px;letter-spacing:-0.228px">CPU IOD-Durchschnitt</div>
<div class="a" style="left:589px;top:0;width:1px;height:17px;background:#2a2a2a"></div><div class="a" style="left:590px;top:0;width:1px;height:17px;background:#01050c"></div>
<div class="a" style="left:591px;top:0;width:79px;height:16px;background:#15203a"></div>
<div class="v" style="left:590px">42.5 °C</div>
<div class="a" style="left:669px;top:0;width:1px;height:17px;background:#2a2a2a"></div><div class="a" style="left:670px;top:0;width:1px;height:17px;background:#01050c"></div>
<div class="v" style="left:670px">39.0 °C</div>
<div class="a" style="left:749px;top:0;width:1px;height:17px;background:#2a2a2a"></div><div class="a" style="left:750px;top:0;width:1px;height:17px;background:#01050c"></div>
<div class="v" style="left:750px">44.8 °C</div>
<div class="a" style="left:829px;top:0;width:1px;height:17px;background:#2a2a2a"></div><div class="a" style="left:830px;top:0;width:1px;height:17px;background:#01050c"></div>
<div class="v" style="left:830px">43.1 °C</div>
</div>
<div class="r" style="top:763px">
<div class="a" style="left:43px;top:0;width:866px;height:17px;background:#191919"></div>
<div class="a" style="left:27px;top:16px;width:16px;height:1px;background:#1e1e1e"></div>
<div class="a" style="left:32px;top:0"><svg width="6" height="16" viewBox="0 0 6 16"><rect x="2" y="1" width="2" height="4.5" fill="#e4ecef"/><rect x="2" y="5.5" width="2" height="6" fill="#e0705e"/><circle cx="3" cy="12.8" r="2" fill="#e82020"/></svg></div>
<div class="tx" id="n42" style="left:45px;top:1px;letter-spacing:-0.697px">CPU VDDCR_VDD VRM (SVI3 TFN)</div>
<div class="a" style="left:589px;top:0;width:1px;height:17px;background:#2a2a2a"></div><div class="a" style="left:590px;top:0;width:1px;height:17px;background:#01050c"></div>
<div class="a" style="left:591px;top:0;width:79px;height:16px;background:#15203a"></div>
<div class="v" style="left:590px">66.9 °C</div>
<div class="a" style="left:669px;top:0;width:1px;height:17px;background:#2a2a2a"></div><div class="a" style="left:670px;top:0;width:1px;height:17px;background:#01050c"></div>
<div class="v" style="left:670px">50.9 °C</div>
<div class="a" style="left:749px;top:0;width:1px;height:17px;background:#2a2a2a"></div><div class="a" style="left:750px;top:0;width:1px;height:17px;background:#01050c"></div>
<div class="v" style="left:750px">71.0 °C</div>
<div class="a" style="left:829px;top:0;width:1px;height:17px;background:#2a2a2a"></div><div class="a" style="left:830px;top:0;width:1px;height:17px;background:#01050c"></div>
<div class="v" style="left:830px">66.5 °C</div>
</div>
<div class="r" style="top:780px">
<div class="a" style="left:43px;top:0;width:866px;height:17px;background:#000"></div>
<div class="a" style="left:27px;top:16px;width:16px;height:1px;background:#1e1e1e"></div>
<div class="a" style="left:32px;top:0"><svg width="6" height="16" viewBox="0 0 6 16"><rect x="2" y="1" width="2" height="4.5" fill="#e4ecef"/><rect x="2" y="5.5" width="2" height="6" fill="#e0705e"/><circle cx="3" cy="12.8" r="2" fill="#e82020"/></svg></div>
<div class="tx" id="n43" style="left:45px;top:1px;letter-spacing:-0.679px">CPU VDDCR_SOC VRM (SVI3 TFN)</div>
<div class="a" style="left:589px;top:0;width:1px;height:17px;background:#2a2a2a"></div><div class="a" style="left:590px;top:0;width:1px;height:17px;background:#01050c"></div>
<div class="a" style="left:591px;top:0;width:79px;height:16px;background:#15203a"></div>
<div class="v" style="left:590px">62.9 °C</div>
<div class="a" style="left:669px;top:0;width:1px;height:17px;background:#2a2a2a"></div><div class="a" style="left:670px;top:0;width:1px;height:17px;background:#01050c"></div>
<div class="v" style="left:670px">51.0 °C</div>
<div class="a" style="left:749px;top:0;width:1px;height:17px;background:#2a2a2a"></div><div class="a" style="left:750px;top:0;width:1px;height:17px;background:#01050c"></div>
<div class="v" style="left:750px">65.6 °C</div>
<div class="a" style="left:829px;top:0;width:1px;height:17px;background:#2a2a2a"></div><div class="a" style="left:830px;top:0;width:1px;height:17px;background:#01050c"></div>
<div class="v" style="left:830px">62.5 °C</div>
</div>
<div class="r" style="top:797px">
<div class="a" style="left:43px;top:0;width:866px;height:17px;background:#191919"></div>
<div class="a" style="left:27px;top:16px;width:16px;height:1px;background:#1e1e1e"></div>
<div class="a" style="left:32px;top:0"><svg width="6" height="16" viewBox="0 0 6 16"><rect x="2" y="1" width="2" height="4.5" fill="#e4ecef"/><rect x="2" y="5.5" width="2" height="6" fill="#e0705e"/><circle cx="3" cy="12.8" r="2" fill="#e82020"/></svg></div>
<div class="tx" id="n44" style="left:45px;top:1px;letter-spacing:-0.619px">CPU VDD_MISC VRM (SVI3 TFN)</div>
<div class="a" style="left:589px;top:0;width:1px;height:17px;background:#2a2a2a"></div><div class="a" style="left:590px;top:0;width:1px;height:17px;background:#01050c"></div>
<div class="a" style="left:591px;top:0;width:79px;height:16px;background:#15203a"></div>
<div class="v" style="left:590px">64.1 °C</div>
<div class="a" style="left:669px;top:0;width:1px;height:17px;background:#2a2a2a"></div><div class="a" style="left:670px;top:0;width:1px;height:17px;background:#01050c"></div>
<div class="v" style="left:670px">52.9 °C</div>
<div class="a" style="left:749px;top:0;width:1px;height:17px;background:#2a2a2a"></div><div class="a" style="left:750px;top:0;width:1px;height:17px;background:#01050c"></div>
<div class="v" style="left:750px">67.0 °C</div>
<div class="a" style="left:829px;top:0;width:1px;height:17px;background:#2a2a2a"></div><div class="a" style="left:830px;top:0;width:1px;height:17px;background:#01050c"></div>
<div class="v" style="left:830px">64.3 °C</div>
</div>
<div class="r" style="top:814px">
<div class="a" style="left:43px;top:0;width:866px;height:17px;background:#000"></div>
<div class="a" style="left:27px;top:16px;width:16px;height:1px;background:#1e1e1e"></div>
<div class="a" style="left:30px;top:0"><svg width="10" height="16" viewBox="0 0 10 16"><path d="M4 0.2H8.6L5.6 5.6H8.8L0.3 15.3L3 8.3H0Z" fill="#f0c020"/></svg></div>
<div class="tx" id="n45" style="left:45px;top:1px;letter-spacing:-0.544px">CPU VDDCR_VDD Spannung (SVI3 TFN)</div>
<div class="a" style="left:589px;top:0;width:1px;height:17px;background:#2a2a2a"></div><div class="a" style="left:590px;top:0;width:1px;height:17px;background:#01050c"></div>
<div class="a" style="left:591px;top:0;width:79px;height:16px;background:#15203a"></div>
<div class="v" style="left:590px">1.105 V</div>
<div class="a" style="left:669px;top:0;width:1px;height:17px;background:#2a2a2a"></div><div class="a" style="left:670px;top:0;width:1px;height:17px;background:#01050c"></div>
<div class="v" style="left:670px">1.016 V</div>
<div class="a" style="left:749px;top:0;width:1px;height:17px;background:#2a2a2a"></div><div class="a" style="left:750px;top:0;width:1px;height:17px;background:#01050c"></div>
<div class="v" style="left:750px">1.122 V</div>
<div class="a" style="left:829px;top:0;width:1px;height:17px;background:#2a2a2a"></div><div class="a" style="left:830px;top:0;width:1px;height:17px;background:#01050c"></div>
<div class="v" style="left:830px">1.080 V</div>
</div>
<div class="r" style="top:831px">
<div class="a" style="left:43px;top:0;width:866px;height:17px;background:#191919"></div>
<div class="a" style="left:27px;top:16px;width:16px;height:1px;background:#1e1e1e"></div>
<div class="a" style="left:30px;top:0"><svg width="10" height="16" viewBox="0 0 10 16"><path d="M4 0.2H8.6L5.6 5.6H8.8L0.3 15.3L3 8.3H0Z" fill="#f0c020"/></svg></div>
<div class="tx" id="n46" style="left:45px;top:1px;letter-spacing:-0.536px">CPU VDDCR_SOC Spannung (SVI3 TFN)</div>
<div class="a" style="left:589px;top:0;width:1px;height:17px;background:#2a2a2a"></div><div class="a" style="left:590px;top:0;width:1px;height:17px;background:#01050c"></div>
<div class="a" style="left:591px;top:0;width:79px;height:16px;background:#15203a"></div>
<div class="v" style="left:590px">1.190 V</div>
<div class="a" style="left:669px;top:0;width:1px;height:17px;background:#2a2a2a"></div><div class="a" style="left:670px;top:0;width:1px;height:17px;background:#01050c"></div>
<div class="v" style="left:670px">1.185 V</div>
<div class="a" style="left:749px;top:0;width:1px;height:17px;background:#2a2a2a"></div><div class="a" style="left:750px;top:0;width:1px;height:17px;background:#01050c"></div>
<div class="v" style="left:750px">1.190 V</div>
<div class="a" style="left:829px;top:0;width:1px;height:17px;background:#2a2a2a"></div><div class="a" style="left:830px;top:0;width:1px;height:17px;background:#01050c"></div>
<div class="v" style="left:830px">1.188 V</div>
</div>
<div class="r" style="top:848px">
<div class="a" style="left:43px;top:0;width:866px;height:17px;background:#000"></div>
<div class="a" style="left:27px;top:16px;width:16px;height:1px;background:#1e1e1e"></div>
<div class="a" style="left:30px;top:0"><svg width="10" height="16" viewBox="0 0 10 16"><path d="M4 0.2H8.6L5.6 5.6H8.8L0.3 15.3L3 8.3H0Z" fill="#f0c020"/></svg></div>
<div class="tx" id="n47" style="left:45px;top:1px;letter-spacing:-0.481px">CPU VDD_MISC Spannung (SVI3 TFN)</div>
<div class="a" style="left:589px;top:0;width:1px;height:17px;background:#2a2a2a"></div><div class="a" style="left:590px;top:0;width:1px;height:17px;background:#01050c"></div>
<div class="v" style="left:590px">1.110 V</div>
<div class="a" style="left:669px;top:0;width:1px;height:17px;background:#2a2a2a"></div><div class="a" style="left:670px;top:0;width:1px;height:17px;background:#01050c"></div>
<div class="v" style="left:670px">1.110 V</div>
<div class="a" style="left:749px;top:0;width:1px;height:17px;background:#2a2a2a"></div><div class="a" style="left:750px;top:0;width:1px;height:17px;background:#01050c"></div>
<div class="v" style="left:750px">1.110 V</div>
<div class="a" style="left:829px;top:0;width:1px;height:17px;background:#2a2a2a"></div><div class="a" style="left:830px;top:0;width:1px;height:17px;background:#01050c"></div>
<div class="v" style="left:830px">1.110 V</div>
</div>
<div class="r" style="top:865px">
<div class="a" style="left:43px;top:0;width:866px;height:17px;background:#191919"></div>
<div class="a" style="left:27px;top:16px;width:16px;height:1px;background:#1e1e1e"></div>
<div class="a" style="left:30px;top:0"><svg width="10" height="16" viewBox="0 0 10 16"><path d="M4 0.2H8.6L5.6 5.6H8.8L0.3 15.3L3 8.3H0Z" fill="#f0c020"/></svg></div>
<div class="tx" id="n48" style="left:45px;top:1px;letter-spacing:-0.361px">CPU-Kernstrom (SVI3 TFN)</div>
<div class="a" style="left:589px;top:0;width:1px;height:17px;background:#2a2a2a"></div><div class="a" style="left:590px;top:0;width:1px;height:17px;background:#01050c"></div>
<div class="a" style="left:591px;top:0;width:79px;height:16px;background:#15203a"></div>
<div class="v" style="left:590px">60.529 A</div>
<div class="a" style="left:669px;top:0;width:1px;height:17px;background:#2a2a2a"></div><div class="a" style="left:670px;top:0;width:1px;height:17px;background:#01050c"></div>
<div class="v" style="left:670px">13.614 A</div>
<div class="a" style="left:749px;top:0;width:1px;height:17px;background:#2a2a2a"></div><div class="a" style="left:750px;top:0;width:1px;height:17px;background:#01050c"></div>
<div class="v" style="left:750px">110.080 A</div>
<div class="a" style="left:829px;top:0;width:1px;height:17px;background:#2a2a2a"></div><div class="a" style="left:830px;top:0;width:1px;height:17px;background:#01050c"></div>
<div class="v" style="left:830px">83.694 A</div>
</div>
<div class="r" style="top:882px">
<div class="a" style="left:43px;top:0;width:866px;height:17px;background:#000"></div>
<div class="a" style="left:27px;top:16px;width:16px;height:1px;background:#1e1e1e"></div>
<div class="a" style="left:30px;top:0"><svg width="10" height="16" viewBox="0 0 10 16"><path d="M4 0.2H8.6L5.6 5.6H8.8L0.3 15.3L3 8.3H0Z" fill="#f0c020"/></svg></div>
<div class="tx" id="n49" style="left:45px;top:1px;letter-spacing:-0.362px">SoC-Strom (SVI3 TFN)</div>
<div class="a" style="left:589px;top:0;width:1px;height:17px;background:#2a2a2a"></div><div class="a" style="left:590px;top:0;width:1px;height:17px;background:#01050c"></div>
<div class="a" style="left:591px;top:0;width:79px;height:16px;background:#15203a"></div>
<div class="v" style="left:590px">12.903 A</div>
<div class="a" style="left:669px;top:0;width:1px;height:17px;background:#2a2a2a"></div><div class="a" style="left:670px;top:0;width:1px;height:17px;background:#01050c"></div>
<div class="v" style="left:670px">11.084 A</div>
<div class="a" style="left:749px;top:0;width:1px;height:17px;background:#2a2a2a"></div><div class="a" style="left:750px;top:0;width:1px;height:17px;background:#01050c"></div>
<div class="v" style="left:750px">15.774 A</div>
<div class="a" style="left:829px;top:0;width:1px;height:17px;background:#2a2a2a"></div><div class="a" style="left:830px;top:0;width:1px;height:17px;background:#01050c"></div>
<div class="v" style="left:830px">13.213 A</div>
</div>
<div class="r" style="top:899px">
<div class="a" style="left:43px;top:0;width:866px;height:17px;background:#191919"></div>
<div class="a" style="left:27px;top:16px;width:16px;height:1px;background:#1e1e1e"></div>
<div class="a" style="left:30px;top:0"><svg width="10" height="16" viewBox="0 0 10 16"><path d="M4 0.2H8.6L5.6 5.6H8.8L0.3 15.3L3 8.3H0Z" fill="#f0c020"/></svg></div>
<div class="tx" id="n50" style="left:45px;top:1px;letter-spacing:-0.967px">CPU TDC</div>
<div class="a" style="left:589px;top:0;width:1px;height:17px;background:#2a2a2a"></div><div class="a" style="left:590px;top:0;width:1px;height:17px;background:#01050c"></div>
<div class="a" style="left:591px;top:0;width:79px;height:16px;background:#15203a"></div>
<div class="v" style="left:590px">60.531 A</div>
<div class="a" style="left:669px;top:0;width:1px;height:17px;background:#2a2a2a"></div><div class="a" style="left:670px;top:0;width:1px;height:17px;background:#01050c"></div>
<div class="v" style="left:670px">13.616 A</div>
<div class="a" style="left:749px;top:0;width:1px;height:17px;background:#2a2a2a"></div><div class="a" style="left:750px;top:0;width:1px;height:17px;background:#01050c"></div>
<div class="v" style="left:750px">110.079 A</div>
<div class="a" style="left:829px;top:0;width:1px;height:17px;background:#2a2a2a"></div><div class="a" style="left:830px;top:0;width:1px;height:17px;background:#01050c"></div>
<div class="v" style="left:830px">83.694 A</div>
</div>
<div class="r" style="top:916px">
<div class="a" style="left:43px;top:0;width:866px;height:17px;background:#000"></div>
<div class="a" style="left:27px;top:16px;width:16px;height:1px;background:#1e1e1e"></div>
<div class="a" style="left:30px;top:0"><svg width="10" height="16" viewBox="0 0 10 16"><path d="M4 0.2H8.6L5.6 5.6H8.8L0.3 15.3L3 8.3H0Z" fill="#f0c020"/></svg></div>
<div class="tx" id="n51" style="left:45px;top:1px;letter-spacing:-1.103px">CPU EDC</div>
<div class="a" style="left:589px;top:0;width:1px;height:17px;background:#2a2a2a"></div><div class="a" style="left:590px;top:0;width:1px;height:17px;background:#01050c"></div>
<div class="a" style="left:591px;top:0;width:79px;height:16px;background:#15203a"></div>
<div class="v" style="left:590px">63.750 A</div>
<div class="a" style="left:669px;top:0;width:1px;height:17px;background:#2a2a2a"></div><div class="a" style="left:670px;top:0;width:1px;height:17px;background:#01050c"></div>
<div class="v" style="left:670px">33.750 A</div>
<div class="a" style="left:749px;top:0;width:1px;height:17px;background:#2a2a2a"></div><div class="a" style="left:750px;top:0;width:1px;height:17px;background:#01050c"></div>
<div class="v" style="left:750px">131.250 A</div>
<div class="a" style="left:829px;top:0;width:1px;height:17px;background:#2a2a2a"></div><div class="a" style="left:830px;top:0;width:1px;height:17px;background:#01050c"></div>
<div class="v" style="left:830px">93.437 A</div>
</div>
<div class="r" style="top:933px">
<div class="a" style="left:43px;top:0;width:866px;height:17px;background:#191919"></div>
<div class="a" style="left:27px;top:16px;width:16px;height:1px;background:#1e1e1e"></div>
<div class="a" style="left:30px;top:0"><svg width="10" height="16" viewBox="0 0 10 16"><path d="M4 0.2H8.6L5.6 5.6H8.8L0.3 15.3L3 8.3H0Z" fill="#f0c020"/></svg></div>
<div class="tx" id="n52" style="left:45px;top:1px;letter-spacing:-0.359px">MISC-Strom (SVI3 TFN)</div>
<div class="a" style="left:589px;top:0;width:1px;height:17px;background:#2a2a2a"></div><div class="a" style="left:590px;top:0;width:1px;height:17px;background:#01050c"></div>
<div class="a" style="left:591px;top:0;width:79px;height:16px;background:#15203a"></div>
<div class="v" style="left:590px">8.026 A</div>
<div class="a" style="left:669px;top:0;width:1px;height:17px;background:#2a2a2a"></div><div class="a" style="left:670px;top:0;width:1px;height:17px;background:#01050c"></div>
<div class="v" style="left:670px">6.104 A</div>
<div class="a" style="left:749px;top:0;width:1px;height:17px;background:#2a2a2a"></div><div class="a" style="left:750px;top:0;width:1px;height:17px;background:#01050c"></div>
<div class="v" style="left:750px">8.392 A</div>
<div class="a" style="left:829px;top:0;width:1px;height:17px;background:#2a2a2a"></div><div class="a" style="left:830px;top:0;width:1px;height:17px;background:#01050c"></div>
<div class="v" style="left:830px">7.463 A</div>
</div>
<div class="r" style="top:950px">
<div class="a" style="left:43px;top:0;width:866px;height:17px;background:#000"></div>
<div class="a" style="left:27px;top:16px;width:16px;height:1px;background:#1e1e1e"></div>
<div class="a" style="left:30px;top:0"><svg width="10" height="16" viewBox="0 0 10 16"><path d="M4 0.2H8.6L5.6 5.6H8.8L0.3 15.3L3 8.3H0Z" fill="#f0c020"/></svg></div>
<div class="tx" id="n53" style="left:45px;top:1px;letter-spacing:-0.307px">CPU-Gesamt-Leistungsaufnahme</div>
<div class="a" style="left:589px;top:0;width:1px;height:17px;background:#2a2a2a"></div><div class="a" style="left:590px;top:0;width:1px;height:17px;background:#01050c"></div>
<div class="a" style="left:591px;top:0;width:79px;height:16px;background:#15203a"></div>
<div class="v" style="left:590px">97.332 W</div>
<div class="a" style="left:669px;top:0;width:1px;height:17px;background:#2a2a2a"></div><div class="a" style="left:670px;top:0;width:1px;height:17px;background:#01050c"></div>
<div class="v" style="left:670px">45.368 W</div>
<div class="a" style="left:749px;top:0;width:1px;height:17px;background:#2a2a2a"></div><div class="a" style="left:750px;top:0;width:1px;height:17px;background:#01050c"></div>
<div class="v" style="left:750px">150.068 W</div>
<div class="a" style="left:829px;top:0;width:1px;height:17px;background:#2a2a2a"></div><div class="a" style="left:830px;top:0;width:1px;height:17px;background:#01050c"></div>
<div class="v" style="left:830px">120.825 W</div>
</div>
<div class="r" style="top:967px">
<div class="a" style="left:20px;top:0;width:889px;height:17px;background:#06101c"></div>
<div class="a" style="left:46px;top:0"><svg width="10" height="16" viewBox="0 0 10 16"><path d="M4 0.2H8.6L5.6 5.6H8.8L0.3 15.3L3 8.3H0Z" fill="#f0c020"/></svg></div>
<div class="a" style="left:28px;top:1px"><svg width="8" height="14" viewBox="0 0 8 14"><path d="M1 1.5L7 7.5L1 13.5" fill="none" stroke="#dcdcdc" stroke-width="1.25"/></svg></div>
<div class="tx" id="n54" style="left:61px;top:1px;letter-spacing:-0.188px">Kern-Leistungen</div>
<div class="a" style="left:589px;top:0;width:1px;height:17px;background:#2a2a2a"></div><div class="a" style="left:590px;top:0;width:1px;height:17px;background:#01050c"></div>
<div class="v" style="left:590px">7.804 W</div>
<div class="a" style="left:669px;top:0;width:1px;height:17px;background:#2a2a2a"></div><div class="a" style="left:670px;top:0;width:1px;height:17px;background:#01050c"></div>
<div class="v" style="left:670px">0.464 W</div>
<div class="a" style="left:749px;top:0;width:1px;height:17px;background:#2a2a2a"></div><div class="a" style="left:750px;top:0;width:1px;height:17px;background:#01050c"></div>
<div class="v" style="left:750px">13.986 W</div>
<div class="a" style="left:829px;top:0;width:1px;height:17px;background:#2a2a2a"></div><div class="a" style="left:830px;top:0;width:1px;height:17px;background:#01050c"></div>
<div class="v" style="left:830px">9.943 W</div>
</div>
<div class="r" style="top:984px">
<div class="a" style="left:43px;top:0;width:866px;height:17px;background:#000"></div>
<div class="a" style="left:27px;top:16px;width:16px;height:1px;background:#1e1e1e"></div>
<div class="a" style="left:30px;top:0"><svg width="10" height="16" viewBox="0 0 10 16"><path d="M4 0.2H8.6L5.6 5.6H8.8L0.3 15.3L3 8.3H0Z" fill="#f0c020"/></svg></div>
<div class="tx" id="n55" style="left:45px;top:1px;letter-spacing:-0.343px">CPU Kern-Leistung (SVI3 TFN)</div>
<div class="a" style="left:589px;top:0;width:1px;height:17px;background:#2a2a2a"></div><div class="a" style="left:590px;top:0;width:1px;height:17px;background:#01050c"></div>
<div class="a" style="left:591px;top:0;width:79px;height:16px;background:#15203a"></div>
<div class="v" style="left:590px">66.892 W</div>
<div class="a" style="left:669px;top:0;width:1px;height:17px;background:#2a2a2a"></div><div class="a" style="left:670px;top:0;width:1px;height:17px;background:#01050c"></div>
<div class="v" style="left:670px">14.943 W</div>
<div class="a" style="left:749px;top:0;width:1px;height:17px;background:#2a2a2a"></div><div class="a" style="left:750px;top:0;width:1px;height:17px;background:#01050c"></div>
<div class="v" style="left:750px">119.990 W</div>
<div class="a" style="left:829px;top:0;width:1px;height:17px;background:#2a2a2a"></div><div class="a" style="left:830px;top:0;width:1px;height:17px;background:#01050c"></div>
<div class="v" style="left:830px">89.802 W</div>
</div>
<div class="r" style="top:1001px">
<div class="a" style="left:43px;top:0;width:866px;height:17px;background:#191919"></div>
<div class="a" style="left:27px;top:16px;width:16px;height:1px;background:#1e1e1e"></div>
<div class="a" style="left:30px;top:0"><svg width="10" height="16" viewBox="0 0 10 16"><path d="M4 0.2H8.6L5.6 5.6H8.8L0.3 15.3L3 8.3H0Z" fill="#f0c020"/></svg></div>
<div class="tx" id="n56" style="left:45px;top:1px;letter-spacing:-0.385px">CPU-SoC-Leistung (SVI3 TFN)</div>
<div class="a" style="left:589px;top:0;width:1px;height:17px;background:#2a2a2a"></div><div class="a" style="left:590px;top:0;width:1px;height:17px;background:#01050c"></div>
<div class="a" style="left:591px;top:0;width:79px;height:16px;background:#15203a"></div>
<div class="v" style="left:590px">15.351 W</div>
<div class="a" style="left:669px;top:0;width:1px;height:17px;background:#2a2a2a"></div><div class="a" style="left:670px;top:0;width:1px;height:17px;background:#01050c"></div>
<div class="v" style="left:670px">13.190 W</div>
<div class="a" style="left:749px;top:0;width:1px;height:17px;background:#2a2a2a"></div><div class="a" style="left:750px;top:0;width:1px;height:17px;background:#01050c"></div>
<div class="v" style="left:750px">18.692 W</div>
<div class="a" style="left:829px;top:0;width:1px;height:17px;background:#2a2a2a"></div><div class="a" style="left:830px;top:0;width:1px;height:17px;background:#01050c"></div>
<div class="v" style="left:830px">15.699 W</div>
</div>
<div class="r" style="top:1018px">
<div class="a" style="left:43px;top:0;width:866px;height:17px;background:#000"></div>
<div class="a" style="left:27px;top:16px;width:16px;height:1px;background:#1e1e1e"></div>
<div class="a" style="left:30px;top:0"><svg width="10" height="16" viewBox="0 0 10 16"><path d="M4 0.2H8.6L5.6 5.6H8.8L0.3 15.3L3 8.3H0Z" fill="#f0c020"/></svg></div>
<div class="tx" id="n57" style="left:45px;top:1px;letter-spacing:-0.241px">Core+SoC+MISC Leistung (SVI3 TFN)</div>
<div class="a" style="left:589px;top:0;width:1px;height:17px;background:#2a2a2a"></div><div class="a" style="left:590px;top:0;width:1px;height:17px;background:#01050c"></div>
<div class="a" style="left:591px;top:0;width:79px;height:16px;background:#15203a"></div>
<div class="v" style="left:590px">91.152 W</div>
<div class="a" style="left:669px;top:0;width:1px;height:17px;background:#2a2a2a"></div><div class="a" style="left:670px;top:0;width:1px;height:17px;background:#01050c"></div>
<div class="v" style="left:670px">39.152 W</div>
<div class="a" style="left:749px;top:0;width:1px;height:17px;background:#2a2a2a"></div><div class="a" style="left:750px;top:0;width:1px;height:17px;background:#01050c"></div>
<div class="v" style="left:750px">143.882 W</div>
<div class="a" style="left:829px;top:0;width:1px;height:17px;background:#2a2a2a"></div><div class="a" style="left:830px;top:0;width:1px;height:17px;background:#01050c"></div>
<div class="v" style="left:830px">113.785 W</div>
</div>
<div class="r" style="top:1035px">
<div class="a" style="left:43px;top:0;width:866px;height:17px;background:#191919"></div>
<div class="a" style="left:27px;top:16px;width:16px;height:1px;background:#1e1e1e"></div>
<div class="a" style="left:30px;top:0"><svg width="10" height="16" viewBox="0 0 10 16"><path d="M4 0.2H8.6L5.6 5.6H8.8L0.3 15.3L3 8.3H0Z" fill="#f0c020"/></svg></div>
<div class="tx" id="n58" style="left:45px;top:1px;letter-spacing:-1.048px">CPU PPT</div>
<div class="a" style="left:589px;top:0;width:1px;height:17px;background:#2a2a2a"></div><div class="a" style="left:590px;top:0;width:1px;height:17px;background:#01050c"></div>
<div class="a" style="left:591px;top:0;width:79px;height:16px;background:#15203a"></div>
<div class="v" style="left:590px">97.338 W</div>
<div class="a" style="left:669px;top:0;width:1px;height:17px;background:#2a2a2a"></div><div class="a" style="left:670px;top:0;width:1px;height:17px;background:#01050c"></div>
<div class="v" style="left:670px">45.369 W</div>
<div class="a" style="left:749px;top:0;width:1px;height:17px;background:#2a2a2a"></div><div class="a" style="left:750px;top:0;width:1px;height:17px;background:#01050c"></div>
<div class="v" style="left:750px">150.075 W</div>
<div class="a" style="left:829px;top:0;width:1px;height:17px;background:#2a2a2a"></div><div class="a" style="left:830px;top:0;width:1px;height:17px;background:#01050c"></div>
<div class="v" style="left:830px">120.834 W</div>
</div>
<div class="r" style="top:1052px">
<div class="a" style="left:43px;top:0;width:866px;height:17px;background:#000"></div>
<div class="a" style="left:27px;top:16px;width:16px;height:1px;background:#1e1e1e"></div>
<div class="a" style="left:28px;top:2px"><svg width="13" height="13" viewBox="0 0 13 13"><path d="M9.3 2.2A5.3 5.3 0 1 0 11.1 8.8" fill="none" stroke="#c4c4c4" stroke-width="1.4"/><circle cx="9.6" cy="2.6" r="1.3" fill="#fff"/><path d="M6 3V6.6L8.2 9" fill="none" stroke="#cfcfcf" stroke-width="1.3"/></svg></div>
<div class="tx" id="n59" style="left:45px;top:1px;letter-spacing:-0.083px">Infinity Fabric Takt (FCLK)</div>
<div class="a" style="left:589px;top:0;width:1px;height:17px;background:#2a2a2a"></div><div class="a" style="left:590px;top:0;width:1px;height:17px;background:#01050c"></div>
<div class="v" style="left:590px">2,000.0 MHz</div>
<div class="a" style="left:669px;top:0;width:1px;height:17px;background:#2a2a2a"></div><div class="a" style="left:670px;top:0;width:1px;height:17px;background:#01050c"></div>
<div class="v" style="left:670px">2,000.0 MHz</div>
<div class="a" style="left:749px;top:0;width:1px;height:17px;background:#2a2a2a"></div><div class="a" style="left:750px;top:0;width:1px;height:17px;background:#01050c"></div>
<div class="v" style="left:750px">2,000.0 MHz</div>
<div class="a" style="left:829px;top:0;width:1px;height:17px;background:#2a2a2a"></div><div class="a" style="left:830px;top:0;width:1px;height:17px;background:#01050c"></div>
<div class="v" style="left:830px">2,000.0 MHz</div>
</div>
<div class="r" style="top:1069px">
<div class="a" style="left:43px;top:0;width:866px;height:17px;background:#191919"></div>
<div class="a" style="left:27px;top:16px;width:16px;height:1px;background:#1e1e1e"></div>
<div class="a" style="left:28px;top:2px"><svg width="13" height="13" viewBox="0 0 13 13"><path d="M9.3 2.2A5.3 5.3 0 1 0 11.1 8.8" fill="none" stroke="#c4c4c4" stroke-width="1.4"/><circle cx="9.6" cy="2.6" r="1.3" fill="#fff"/><path d="M6 3V6.6L8.2 9" fill="none" stroke="#cfcfcf" stroke-width="1.3"/></svg></div>
<div class="tx" id="n60" style="left:45px;top:1px;letter-spacing:-0.195px">Takt des Speicher-Controllers (UCLK)</div>
<div class="a" style="left:589px;top:0;width:1px;height:17px;background:#2a2a2a"></div><div class="a" style="left:590px;top:0;width:1px;height:17px;background:#01050c"></div>
<div class="v" style="left:590px">3,000.0 MHz</div>
<div class="a" style="left:669px;top:0;width:1px;height:17px;background:#2a2a2a"></div><div class="a" style="left:670px;top:0;width:1px;height:17px;background:#01050c"></div>
<div class="v" style="left:670px">3,000.0 MHz</div>
<div class="a" style="left:749px;top:0;width:1px;height:17px;background:#2a2a2a"></div><div class="a" style="left:750px;top:0;width:1px;height:17px;background:#01050c"></div>
<div class="v" style="left:750px">3,000.0 MHz</div>
<div class="a" style="left:829px;top:0;width:1px;height:17px;background:#2a2a2a"></div><div class="a" style="left:830px;top:0;width:1px;height:17px;background:#01050c"></div>
<div class="v" style="left:830px">3,000.0 MHz</div>
</div>
<div class="r" style="top:1086px">
<div class="a" style="left:59px;top:0;width:850px;height:17px;background:#000"></div>
<div class="a" style="left:43px;top:16px;width:16px;height:1px;background:#1e1e1e"></div>
<div class="a" style="left:44px;top:2px"><svg width="13" height="13" viewBox="0 0 13 13"><path d="M9.3 2.2A5.3 5.3 0 1 0 11.1 8.8" fill="none" stroke="#c4c4c4" stroke-width="1.4"/><circle cx="9.6" cy="2.6" r="1.3" fill="#fff"/><path d="M6 3V6.6L8.2 9" fill="none" stroke="#cfcfcf" stroke-width="1.3"/></svg></div>
<div class="a" style="left:28px;top:1px"><svg width="8" height="14" viewBox="0 0 8 14"><path d="M1 1.5L7 7.5L1 13.5" fill="none" stroke="#dcdcdc" stroke-width="1.25"/></svg></div>
<div class="tx" id="n61" style="left:61px;top:1px;letter-spacing:-0.056px">L3 Takte</div>
<div class="a" style="left:589px;top:0;width:1px;height:17px;background:#2a2a2a"></div><div class="a" style="left:590px;top:0;width:1px;height:17px;background:#01050c"></div>
<div class="a" style="left:591px;top:0;width:79px;height:16px;background:#15203a"></div>
<div class="v" style="left:590px">5,224.3 MHz</div>
<div class="a" style="left:669px;top:0;width:1px;height:17px;background:#2a2a2a"></div><div class="a" style="left:670px;top:0;width:1px;height:17px;background:#01050c"></div>
<div class="v" style="left:670px">4,794.5 MHz</div>
<div class="a" style="left:749px;top:0;width:1px;height:17px;background:#2a2a2a"></div><div class="a" style="left:750px;top:0;width:1px;height:17px;background:#01050c"></div>
<div class="v" style="left:750px">5,248.0 MHz</div>
<div class="a" style="left:829px;top:0;width:1px;height:17px;background:#2a2a2a"></div><div class="a" style="left:830px;top:0;width:1px;height:17px;background:#01050c"></div>
<div class="v" style="left:830px">5,087.5 MHz</div>
</div>
<div class="r" style="top:1103px">
<div class="a" style="left:43px;top:0;width:866px;height:17px;background:#000"></div>
<div class="a" style="left:27px;top:16px;width:16px;height:1px;background:#1e1e1e"></div>
<div class="a" style="left:28px;top:2px"><svg width="13" height="13" viewBox="0 0 13 13"><path d="M9.3 2.2A5.3 5.3 0 1 0 11.1 8.8" fill="none" stroke="#c4c4c4" stroke-width="1.4"/><circle cx="9.6" cy="2.6" r="1.3" fill="#fff"/><path d="M6 3V6.6L8.2 9" fill="none" stroke="#cfcfcf" stroke-width="1.3"/></svg></div>
<div class="tx" id="n62" style="left:45px;top:1px;letter-spacing:-0.130px">Frequenzgrenzwert - Global</div>
<div class="a" style="left:589px;top:0;width:1px;height:17px;background:#2a2a2a"></div><div class="a" style="left:590px;top:0;width:1px;height:17px;background:#01050c"></div>
<div class="v" style="left:590px">5,250.0 MHz</div>
<div class="a" style="left:669px;top:0;width:1px;height:17px;background:#2a2a2a"></div><div class="a" style="left:670px;top:0;width:1px;height:17px;background:#01050c"></div>
<div class="v" style="left:670px">5,250.0 MHz</div>
<div class="a" style="left:749px;top:0;width:1px;height:17px;background:#2a2a2a"></div><div class="a" style="left:750px;top:0;width:1px;height:17px;background:#01050c"></div>
<div class="v" style="left:750px">5,250.0 MHz</div>
<div class="a" style="left:829px;top:0;width:1px;height:17px;background:#2a2a2a"></div><div class="a" style="left:830px;top:0;width:1px;height:17px;background:#01050c"></div>
<div class="v" style="left:830px">5,250.0 MHz</div>
</div>
<div class="r" style="top:1120px">
<div class="a" style="left:43px;top:0;width:866px;height:17px;background:#191919"></div>
<div class="a" style="left:27px;top:16px;width:16px;height:1px;background:#1e1e1e"></div>
<div class="a" style="left:28px;top:2px"><svg width="13" height="13" viewBox="0 0 13 13"><path d="M9.3 2.2A5.3 5.3 0 1 0 11.1 8.8" fill="none" stroke="#c4c4c4" stroke-width="1.4"/><circle cx="9.6" cy="2.6" r="1.3" fill="#fff"/><path d="M6 3V6.6L8.2 9" fill="none" stroke="#cfcfcf" stroke-width="1.3"/></svg></div>
<div class="tx" id="n63" style="left:45px;top:1px;letter-spacing:-0.697px">CPU PPT Limit</div>
<div class="a" style="left:589px;top:0;width:1px;height:17px;background:#2a2a2a"></div><div class="a" style="left:590px;top:0;width:1px;height:17px;background:#01050c"></div>
<div class="a" style="left:591px;top:0;width:79px;height:16px;background:#15203a"></div>
<div class="v" style="left:590px">64.9 %</div>
<div class="a" style="left:669px;top:0;width:1px;height:17px;background:#2a2a2a"></div><div class="a" style="left:670px;top:0;width:1px;height:17px;background:#01050c"></div>
<div class="v" style="left:670px">30.2 %</div>
<div class="a" style="left:749px;top:0;width:1px;height:17px;background:#2a2a2a"></div><div class="a" style="left:750px;top:0;width:1px;height:17px;background:#01050c"></div>
<div class="v" style="left:750px">100.1 %</div>
<div class="a" style="left:829px;top:0;width:1px;height:17px;background:#2a2a2a"></div><div class="a" style="left:830px;top:0;width:1px;height:17px;background:#01050c"></div>
<div class="v" style="left:830px">80.6 %</div>
</div>
<div class="r" style="top:1137px">
<div class="a" style="left:43px;top:0;width:866px;height:17px;background:#000"></div>
<div class="a" style="left:27px;top:16px;width:16px;height:1px;background:#1e1e1e"></div>
<div class="a" style="left:28px;top:2px"><svg width="13" height="13" viewBox="0 0 13 13"><path d="M9.3 2.2A5.3 5.3 0 1 0 11.1 8.8" fill="none" stroke="#c4c4c4" stroke-width="1.4"/><circle cx="9.6" cy="2.6" r="1.3" fill="#fff"/><path d="M6 3V6.6L8.2 9" fill="none" stroke="#cfcfcf" stroke-width="1.3"/></svg></div>
<div class="tx" id="n64" style="left:45px;top:1px;letter-spacing:-0.343px">CPU TDC-Grenzwert</div>
<div class="a" style="left:589px;top:0;width:1px;height:17px;background:#2a2a2a"></div><div class="a" style="left:590px;top:0;width:1px;height:17px;background:#01050c"></div>
<div class="a" style="left:591px;top:0;width:79px;height:16px;background:#15203a"></div>
<div class="v" style="left:590px">55.0 %</div>
<div class="a" style="left:669px;top:0;width:1px;height:17px;background:#2a2a2a"></div><div class="a" style="left:670px;top:0;width:1px;height:17px;background:#01050c"></div>
<div class="v" style="left:670px">12.4 %</div>
<div class="a" style="left:749px;top:0;width:1px;height:17px;background:#2a2a2a"></div><div class="a" style="left:750px;top:0;width:1px;height:17px;background:#01050c"></div>
<div class="v" style="left:750px">100.1 %</div>
<div class="a" style="left:829px;top:0;width:1px;height:17px;background:#2a2a2a"></div><div class="a" style="left:830px;top:0;width:1px;height:17px;background:#01050c"></div>
<div class="v" style="left:830px">76.1 %</div>
</div>
<div class="r" style="top:1154px">
<div class="a" style="left:43px;top:0;width:866px;height:17px;background:#191919"></div>
<div class="a" style="left:27px;top:16px;width:16px;height:1px;background:#1e1e1e"></div>
<div class="a" style="left:28px;top:2px"><svg width="13" height="13" viewBox="0 0 13 13"><path d="M9.3 2.2A5.3 5.3 0 1 0 11.1 8.8" fill="none" stroke="#c4c4c4" stroke-width="1.4"/><circle cx="9.6" cy="2.6" r="1.3" fill="#fff"/><path d="M6 3V6.6L8.2 9" fill="none" stroke="#cfcfcf" stroke-width="1.3"/></svg></div>
<div class="tx" id="n65" style="left:45px;top:1px;letter-spacing:-0.394px">CPU EDC-Grenzwert</div>
<div class="a" style="left:589px;top:0;width:1px;height:17px;background:#2a2a2a"></div><div class="a" style="left:590px;top:0;width:1px;height:17px;background:#01050c"></div>
<div class="a" style="left:591px;top:0;width:79px;height:16px;background:#15203a"></div>
<div class="v" style="left:590px">39.8 %</div>
<div class="a" style="left:669px;top:0;width:1px;height:17px;background:#2a2a2a"></div><div class="a" style="left:670px;top:0;width:1px;height:17px;background:#01050c"></div>
<div class="v" style="left:670px">21.1 %</div>
<div class="a" style="left:749px;top:0;width:1px;height:17px;background:#2a2a2a"></div><div class="a" style="left:750px;top:0;width:1px;height:17px;background:#01050c"></div>
<div class="v" style="left:750px">82.0 %</div>
<div class="a" style="left:829px;top:0;width:1px;height:17px;background:#2a2a2a"></div><div class="a" style="left:830px;top:0;width:1px;height:17px;background:#01050c"></div>
<div class="v" style="left:830px">58.4 %</div>
</div>
<div class="r" style="top:1171px">
<div class="a" style="left:43px;top:0;width:866px;height:17px;background:#000"></div>
<div class="a" style="left:27px;top:16px;width:16px;height:1px;background:#1e1e1e"></div>
<div class="a" style="left:28px;top:2px"><svg width="13" height="13" viewBox="0 0 13 13"><path d="M9.3 2.2A5.3 5.3 0 1 0 11.1 8.8" fill="none" stroke="#c4c4c4" stroke-width="1.4"/><circle cx="9.6" cy="2.6" r="1.3" fill="#fff"/><path d="M6 3V6.6L8.2 9" fill="none" stroke="#cfcfcf" stroke-width="1.3"/></svg></div>
<div class="tx" id="n66" style="left:45px;top:1px;letter-spacing:-0.625px">CPU PPT FAST Limit</div>
<div class="a" style="left:589px;top:0;width:1px;height:17px;background:#2a2a2a"></div><div class="a" style="left:590px;top:0;width:1px;height:17px;background:#01050c"></div>
<div class="a" style="left:591px;top:0;width:79px;height:16px;background:#15203a"></div>
<div class="v" style="left:590px">64.9 %</div>
<div class="a" style="left:669px;top:0;width:1px;height:17px;background:#2a2a2a"></div><div class="a" style="left:670px;top:0;width:1px;height:17px;background:#01050c"></div>
<div class="v" style="left:670px">30.2 %</div>
<div class="a" style="left:749px;top:0;width:1px;height:17px;background:#2a2a2a"></div><div class="a" style="left:750px;top:0;width:1px;height:17px;background:#01050c"></div>
<div class="v" style="left:750px">100.1 %</div>
<div class="a" style="left:829px;top:0;width:1px;height:17px;background:#2a2a2a"></div><div class="a" style="left:830px;top:0;width:1px;height:17px;background:#01050c"></div>
<div class="v" style="left:830px">80.6 %</div>
</div>
<div class="r" style="top:1188px">
<div class="a" style="left:43px;top:0;width:866px;height:17px;background:#191919"></div>
<div class="a" style="left:27px;top:16px;width:16px;height:1px;background:#1e1e1e"></div>
<div class="a" style="left:28px;top:2px"><svg width="13" height="13" viewBox="0 0 13 13"><path d="M9.3 2.2A5.3 5.3 0 1 0 11.1 8.8" fill="none" stroke="#c4c4c4" stroke-width="1.4"/><circle cx="9.6" cy="2.6" r="1.3" fill="#fff"/><path d="M6 3V6.6L8.2 9" fill="none" stroke="#cfcfcf" stroke-width="1.3"/></svg></div>
<div class="tx" id="n67" style="left:45px;top:1px;letter-spacing:-0.327px">Thermal Limit</div>
<div class="a" style="left:589px;top:0;width:1px;height:17px;background:#2a2a2a"></div><div class="a" style="left:590px;top:0;width:1px;height:17px;background:#01050c"></div>
<div class="a" style="left:591px;top:0;width:79px;height:16px;background:#15203a"></div>
<div class="v" style="left:590px">63.0 %</div>
<div class="a" style="left:669px;top:0;width:1px;height:17px;background:#2a2a2a"></div><div class="a" style="left:670px;top:0;width:1px;height:17px;background:#01050c"></div>
<div class="v" style="left:670px">50.2 %</div>
<div class="a" style="left:749px;top:0;width:1px;height:17px;background:#2a2a2a"></div><div class="a" style="left:750px;top:0;width:1px;height:17px;background:#01050c"></div>
<div class="v" style="left:750px">94.0 %</div>
<div class="a" style="left:829px;top:0;width:1px;height:17px;background:#2a2a2a"></div><div class="a" style="left:830px;top:0;width:1px;height:17px;background:#01050c"></div>
<div class="v" style="left:830px">76.4 %</div>
</div>
<div class="r" style="top:1205px">
<div class="a" style="left:43px;top:0;width:866px;height:17px;background:#000"></div>
<div class="a" style="left:27px;top:16px;width:16px;height:1px;background:#1e1e1e"></div>
<div class="a" style="left:28px;top:2px"><svg width="13" height="13" viewBox="0 0 13 13"><path d="M9.3 2.2A5.3 5.3 0 1 0 11.1 8.8" fill="none" stroke="#c4c4c4" stroke-width="1.4"/><circle cx="9.6" cy="2.6" r="1.3" fill="#fff"/><path d="M6 3V6.6L8.2 9" fill="none" stroke="#cfcfcf" stroke-width="1.3"/></svg></div>
<div class="tx" id="n68" style="left:45px;top:1px;letter-spacing:-0.318px">Thermische Drosselung (HTC)</div>
<div class="a" style="left:589px;top:0;width:1px;height:17px;background:#2a2a2a"></div><div class="a" style="left:590px;top:0;width:1px;height:17px;background:#01050c"></div>
<div class="v" style="left:590px">Nein</div>
<div class="a" style="left:669px;top:0;width:1px;height:17px;background:#2a2a2a"></div><div class="a" style="left:670px;top:0;width:1px;height:17px;background:#01050c"></div>
<div class="v" style="left:670px">Nein</div>
<div class="a" style="left:749px;top:0;width:1px;height:17px;background:#2a2a2a"></div><div class="a" style="left:750px;top:0;width:1px;height:17px;background:#01050c"></div>
<div class="v" style="left:750px">Nein</div>
<div class="a" style="left:829px;top:0;width:1px;height:17px;background:#2a2a2a"></div><div class="a" style="left:830px;top:0;width:1px;height:17px;background:#01050c"></div>
<div class="v" style="left:830px">0 %</div>
</div>
<div class="r" style="top:1222px">
<div class="a" style="left:43px;top:0;width:866px;height:17px;background:#191919"></div>
<div class="a" style="left:27px;top:16px;width:16px;height:1px;background:#1e1e1e"></div>
<div class="a" style="left:28px;top:2px"><svg width="13" height="13" viewBox="0 0 13 13"><path d="M9.3 2.2A5.3 5.3 0 1 0 11.1 8.8" fill="none" stroke="#c4c4c4" stroke-width="1.4"/><circle cx="9.6" cy="2.6" r="1.3" fill="#fff"/><path d="M6 3V6.6L8.2 9" fill="none" stroke="#cfcfcf" stroke-width="1.3"/></svg></div>
<div class="tx" id="n69" style="left:45px;top:1px;letter-spacing:-0.430px">Thermische Drosselung (PROCHOT CPU)</div>
<div class="a" style="left:589px;top:0;width:1px;height:17px;background:#2a2a2a"></div><div class="a" style="left:590px;top:0;width:1px;height:17px;background:#01050c"></div>
<div class="v" style="left:590px">Nein</div>
<div class="a" style="left:669px;top:0;width:1px;height:17px;background:#2a2a2a"></div><div class="a" style="left:670px;top:0;width:1px;height:17px;background:#01050c"></div>
<div class="v" style="left:670px">Nein</div>
<div class="a" style="left:749px;top:0;width:1px;height:17px;background:#2a2a2a"></div><div class="a" style="left:750px;top:0;width:1px;height:17px;background:#01050c"></div>
<div class="v" style="left:750px">Nein</div>
<div class="a" style="left:829px;top:0;width:1px;height:17px;background:#2a2a2a"></div><div class="a" style="left:830px;top:0;width:1px;height:17px;background:#01050c"></div>
<div class="v" style="left:830px">0 %</div>
</div>
<div class="r" style="top:1239px">
<div class="a" style="left:43px;top:0;width:866px;height:17px;background:#000"></div>
<div class="a" style="left:27px;top:16px;width:16px;height:1px;background:#1e1e1e"></div>
<div class="a" style="left:28px;top:2px"><svg width="13" height="13" viewBox="0 0 13 13"><path d="M9.3 2.2A5.3 5.3 0 1 0 11.1 8.8" fill="none" stroke="#c4c4c4" stroke-width="1.4"/><circle cx="9.6" cy="2.6" r="1.3" fill="#fff"/><path d="M6 3V6.6L8.2 9" fill="none" stroke="#cfcfcf" stroke-width="1.3"/></svg></div>
<div class="tx" id="n70" style="left:45px;top:1px;letter-spacing:-0.444px">Thermische Drosselung (PROCHOT EXT)</div>
<div class="a" style="left:589px;top:0;width:1px;height:17px;background:#2a2a2a"></div><div class="a" style="left:590px;top:0;width:1px;height:17px;background:#01050c"></div>
<div class="v" style="left:590px">Nein</div>
<div class="a" style="left:669px;top:0;width:1px;height:17px;background:#2a2a2a"></div><div class="a" style="left:670px;top:0;width:1px;height:17px;background:#01050c"></div>
<div class="v" style="left:670px">Nein</div>
<div class="a" style="left:749px;top:0;width:1px;height:17px;background:#2a2a2a"></div><div class="a" style="left:750px;top:0;width:1px;height:17px;background:#01050c"></div>
<div class="v" style="left:750px">Nein</div>
<div class="a" style="left:829px;top:0;width:1px;height:17px;background:#2a2a2a"></div><div class="a" style="left:830px;top:0;width:1px;height:17px;background:#01050c"></div>
<div class="v" style="left:830px">0 %</div>
</div>
<div class="r" style="top:1256px">
<div class="a" style="left:43px;top:0;width:866px;height:17px;background:#191919"></div>
<div class="a" style="left:27px;top:16px;width:16px;height:1px;background:#1e1e1e"></div>
<div class="a" style="left:28px;top:2px"><svg width="13" height="13" viewBox="0 0 13 13"><path d="M9.3 2.2A5.3 5.3 0 1 0 11.1 8.8" fill="none" stroke="#c4c4c4" stroke-width="1.4"/><circle cx="9.6" cy="2.6" r="1.3" fill="#fff"/><path d="M6 3V6.6L8.2 9" fill="none" stroke="#cfcfcf" stroke-width="1.3"/></svg></div>
<div class="tx" id="n71" style="left:45px;top:1px;letter-spacing:-0.272px">DRAM-Lesebandbreite</div>
<div class="a" style="left:589px;top:0;width:1px;height:17px;background:#2a2a2a"></div><div class="a" style="left:590px;top:0;width:1px;height:17px;background:#01050c"></div>
<div class="a" style="left:591px;top:0;width:79px;height:16px;background:#15203a"></div>
<div class="v" style="left:590px">0.169 GB/s</div>
<div class="a" style="left:669px;top:0;width:1px;height:17px;background:#2a2a2a"></div><div class="a" style="left:670px;top:0;width:1px;height:17px;background:#01050c"></div>
<div class="v" style="left:670px">0.056 GB/s</div>
<div class="a" style="left:749px;top:0;width:1px;height:17px;background:#2a2a2a"></div><div class="a" style="left:750px;top:0;width:1px;height:17px;background:#01050c"></div>
<div class="v" style="left:750px">41.256 GB/s</div>
<div class="a" style="left:829px;top:0;width:1px;height:17px;background:#2a2a2a"></div><div class="a" style="left:830px;top:0;width:1px;height:17px;background:#01050c"></div>
<div class="v" style="left:830px">10.410 GB/s</div>
</div>
<div class="r" style="top:1273px">
<div class="a" style="left:43px;top:0;width:866px;height:17px;background:#000"></div>
<div class="a" style="left:27px;top:16px;width:16px;height:1px;background:#1e1e1e"></div>
<div class="a" style="left:28px;top:2px"><svg width="13" height="13" viewBox="0 0 13 13"><path d="M9.3 2.2A5.3 5.3 0 1 0 11.1 8.8" fill="none" stroke="#c4c4c4" stroke-width="1.4"/><circle cx="9.6" cy="2.6" r="1.3" fill="#fff"/><path d="M6 3V6.6L8.2 9" fill="none" stroke="#cfcfcf" stroke-width="1.3"/></svg></div>
<div class="tx" id="n72" style="left:45px;top:1px;letter-spacing:-0.269px">DRAM-Schreibbandbreite</div>
<div class="a" style="left:589px;top:0;width:1px;height:17px;background:#2a2a2a"></div><div class="a" style="left:590px;top:0;width:1px;height:17px;background:#01050c"></div>
<div class="a" style="left:591px;top:0;width:79px;height:16px;background:#15203a"></div>
<div class="v" style="left:590px">0.105 GB/s</div>
<div class="a" style="left:669px;top:0;width:1px;height:17px;background:#2a2a2a"></div><div class="a" style="left:670px;top:0;width:1px;height:17px;background:#01050c"></div>
<div class="v" style="left:670px">0.034 GB/s</div>
<div class="a" style="left:749px;top:0;width:1px;height:17px;background:#2a2a2a"></div><div class="a" style="left:750px;top:0;width:1px;height:17px;background:#01050c"></div>
<div class="v" style="left:750px">23.391 GB/s</div>
<div class="a" style="left:829px;top:0;width:1px;height:17px;background:#2a2a2a"></div><div class="a" style="left:830px;top:0;width:1px;height:17px;background:#01050c"></div>
<div class="v" style="left:830px">7.806 GB/s</div>
</div>
<div class="r" style="top:1290px">
<div class="a" style="left:43px;top:0;width:866px;height:17px;background:#191919"></div>
<div class="a" style="left:27px;top:16px;width:16px;height:1px;background:#1e1e1e"></div>
<div class="a" style="left:28px;top:2px"><svg width="13" height="13" viewBox="0 0 13 13"><path d="M9.3 2.2A5.3 5.3 0 1 0 11.1 8.8" fill="none" stroke="#c4c4c4" stroke-width="1.4"/><circle cx="9.6" cy="2.6" r="1.3" fill="#fff"/><path d="M6 3V6.6L8.2 9" fill="none" stroke="#cfcfcf" stroke-width="1.3"/></svg></div>
<div class="tx" id="n73" style="left:45px;top:1px;letter-spacing:-0.130px">Durchschnittliche Anzahl aktiver Kerne</div>
<div class="a" style="left:589px;top:0;width:1px;height:17px;background:#2a2a2a"></div><div class="a" style="left:590px;top:0;width:1px;height:17px;background:#01050c"></div>
<div class="v" style="left:590px">8.0 </div>
<div class="a" style="left:669px;top:0;width:1px;height:17px;background:#2a2a2a"></div><div class="a" style="left:670px;top:0;width:1px;height:17px;background:#01050c"></div>
<div class="v" style="left:670px">2.7 </div>
<div class="a" style="left:749px;top:0;width:1px;height:17px;background:#2a2a2a"></div><div class="a" style="left:750px;top:0;width:1px;height:17px;background:#01050c"></div>
<div class="v" style="left:750px">8.0 </div>
<div class="a" style="left:829px;top:0;width:1px;height:17px;background:#2a2a2a"></div><div class="a" style="left:830px;top:0;width:1px;height:17px;background:#01050c"></div>
<div class="v" style="left:830px">8.0 </div>
</div>
<div class="r" style="top:1307px">
<div class="a" style="left:43px;top:0;width:866px;height:17px;background:#000"></div>
<div class="a" style="left:589px;top:0;width:1px;height:17px;background:#2a2a2a"></div><div class="a" style="left:590px;top:0;width:1px;height:17px;background:#01050c"></div>
<div class="a" style="left:669px;top:0;width:1px;height:17px;background:#2a2a2a"></div><div class="a" style="left:670px;top:0;width:1px;height:17px;background:#01050c"></div>
<div class="a" style="left:749px;top:0;width:1px;height:17px;background:#2a2a2a"></div><div class="a" style="left:750px;top:0;width:1px;height:17px;background:#01050c"></div>
<div class="a" style="left:829px;top:0;width:1px;height:17px;background:#2a2a2a"></div><div class="a" style="left:830px;top:0;width:1px;height:17px;background:#01050c"></div>
</div>
<div class="r" style="top:1324px">
<div class="a" style="left:43px;top:0;width:866px;height:17px;background:#242424"></div>
<div class="a" style="left:27px;top:0;width:16px;height:16px;background:#0a0a0a"></div>
<div class="a" style="left:9px;top:4px"><svg width="14" height="9" viewBox="0 0 14 9"><path d="M1 1L7 7L13 1" fill="none" stroke="#dcdcdc" stroke-width="1.25"/></svg></div>
<div class="a" style="left:29px;top:0px"><svg width="12" height="16" viewBox="0 0 12 16"><rect x="2" y="1" width="8" height="14" rx="1.5" fill="#555"/><rect x="3.5" y="2.5" width="5" height="11" fill="#676767"/><rect x="0.3" y="2.5" width="1.8" height="1.3" fill="#b0b0b0"/><rect x="9.9" y="2.5" width="1.8" height="1.3" fill="#b0b0b0"/><rect x="0.3" y="5.5" width="1.8" height="1.3" fill="#b0b0b0"/><rect x="9.9" y="5.5" width="1.8" height="1.3" fill="#b0b0b0"/><rect x="0.3" y="8.5" width="1.8" height="1.3" fill="#b0b0b0"/><rect x="9.9" y="8.5" width="1.8" height="1.3" fill="#b0b0b0"/><rect x="0.3" y="11.5" width="1.8" height="1.3" fill="#b0b0b0"/><rect x="9.9" y="11.5" width="1.8" height="1.3" fill="#b0b0b0"/></svg></div>
<div class="gx" id="n75" style="left:45px;top:0px;letter-spacing:-0.061px">ASUS ROG STRIX B650E-I GAMING WIFI (Nuvoton NCT6799D/NCT6796D-S)</div>
<div class="a" style="left:589px;top:0;width:1px;height:17px;background:#2a2a2a"></div><div class="a" style="left:590px;top:0;width:1px;height:17px;background:#01050c"></div>
<div class="a" style="left:669px;top:0;width:1px;height:17px;background:#2a2a2a"></div><div class="a" style="left:670px;top:0;width:1px;height:17px;background:#01050c"></div>
<div class="a" style="left:749px;top:0;width:1px;height:17px;background:#2a2a2a"></div><div class="a" style="left:750px;top:0;width:1px;height:17px;background:#01050c"></div>
<div class="a" style="left:829px;top:0;width:1px;height:17px;background:#2a2a2a"></div><div class="a" style="left:830px;top:0;width:1px;height:17px;background:#01050c"></div>
</div>
<div class="r" style="top:1341px">
<div class="a" style="left:43px;top:0;width:866px;height:17px;background:#000"></div>
<div class="a" style="left:27px;top:16px;width:16px;height:1px;background:#1e1e1e"></div>
<div class="a" style="left:32px;top:0"><svg width="6" height="16" viewBox="0 0 6 16"><rect x="2" y="1" width="2" height="4.5" fill="#e4ecef"/><rect x="2" y="5.5" width="2" height="6" fill="#e0705e"/><circle cx="3" cy="12.8" r="2" fill="#e82020"/></svg></div>
<div class="tx" id="n76" style="left:45px;top:1px;letter-spacing:-0.098px">Hauptplatine</div>
<div class="a" style="left:589px;top:0;width:1px;height:17px;background:#2a2a2a"></div><div class="a" style="left:590px;top:0;width:1px;height:17px;background:#01050c"></div>
<div class="v" style="left:590px">54 °C</div>
<div class="a" style="left:669px;top:0;width:1px;height:17px;background:#2a2a2a"></div><div class="a" style="left:670px;top:0;width:1px;height:17px;background:#01050c"></div>
<div class="v" style="left:670px">44 °C</div>
<div class="a" style="left:749px;top:0;width:1px;height:17px;background:#2a2a2a"></div><div class="a" style="left:750px;top:0;width:1px;height:17px;background:#01050c"></div>
<div class="v" style="left:750px">54 °C</div>
<div class="a" style="left:829px;top:0;width:1px;height:17px;background:#2a2a2a"></div><div class="a" style="left:830px;top:0;width:1px;height:17px;background:#01050c"></div>
<div class="v" style="left:830px">51 °C</div>
</div>
<div class="r" style="top:1358px">
<div class="a" style="left:43px;top:0;width:866px;height:17px;background:#191919"></div>
<div class="a" style="left:27px;top:16px;width:16px;height:1px;background:#1e1e1e"></div>
<div class="a" style="left:32px;top:0"><svg width="6" height="16" viewBox="0 0 6 16"><rect x="2" y="1" width="2" height="4.5" fill="#e4ecef"/><rect x="2" y="5.5" width="2" height="6" fill="#e0705e"/><circle cx="3" cy="12.8" r="2" fill="#e82020"/></svg></div>
<div class="tx" id="n77" style="left:45px;top:1px;letter-spacing:-0.466px">CPU-Paket</div>
<div class="a" style="left:589px;top:0;width:1px;height:17px;background:#2a2a2a"></div><div class="a" style="left:590px;top:0;width:1px;height:17px;background:#01050c"></div>
<div class="a" style="left:591px;top:0;width:79px;height:16px;background:#15203a"></div>
<div class="v" style="left:590px">62 °C</div>
<div class="a" style="left:669px;top:0;width:1px;height:17px;background:#2a2a2a"></div><div class="a" style="left:670px;top:0;width:1px;height:17px;background:#01050c"></div>
<div class="v" style="left:670px">48 °C</div>
<div class="a" style="left:749px;top:0;width:1px;height:17px;background:#2a2a2a"></div><div class="a" style="left:750px;top:0;width:1px;height:17px;background:#01050c"></div>
<div class="v" style="left:750px">90 °C</div>
<div class="a" style="left:829px;top:0;width:1px;height:17px;background:#2a2a2a"></div><div class="a" style="left:830px;top:0;width:1px;height:17px;background:#01050c"></div>
<div class="v" style="left:830px">73 °C</div>
</div>
<div class="r" style="top:1375px">
<div class="a" style="left:43px;top:0;width:866px;height:17px;background:#000"></div>
<div class="a" style="left:27px;top:16px;width:16px;height:1px;background:#1e1e1e"></div>
<div class="a" style="left:32px;top:0"><svg width="6" height="16" viewBox="0 0 6 16"><rect x="2" y="1" width="2" height="4.5" fill="#e4ecef"/><rect x="2" y="5.5" width="2" height="6" fill="#e0705e"/><circle cx="3" cy="12.8" r="2" fill="#e82020"/></svg></div>
<div class="tx" id="n78" style="left:45px;top:1px;letter-spacing:-1.667px">CPU</div>
<div class="a" style="left:589px;top:0;width:1px;height:17px;background:#2a2a2a"></div><div class="a" style="left:590px;top:0;width:1px;height:17px;background:#01050c"></div>
<div class="a" style="left:591px;top:0;width:79px;height:16px;background:#15203a"></div>
<div class="v" style="left:590px">53 °C</div>
<div class="a" style="left:669px;top:0;width:1px;height:17px;background:#2a2a2a"></div><div class="a" style="left:670px;top:0;width:1px;height:17px;background:#01050c"></div>
<div class="v" style="left:670px">39 °C</div>
<div class="a" style="left:749px;top:0;width:1px;height:17px;background:#2a2a2a"></div><div class="a" style="left:750px;top:0;width:1px;height:17px;background:#01050c"></div>
<div class="v" style="left:750px">78 °C</div>
<div class="a" style="left:829px;top:0;width:1px;height:17px;background:#2a2a2a"></div><div class="a" style="left:830px;top:0;width:1px;height:17px;background:#01050c"></div>
<div class="v" style="left:830px">64 °C</div>
</div>
<div class="r" style="top:1392px">
<div class="a" style="left:43px;top:0;width:866px;height:17px;background:#191919"></div>
<div class="a" style="left:27px;top:16px;width:16px;height:1px;background:#1e1e1e"></div>
<div class="a" style="left:32px;top:0"><svg width="6" height="16" viewBox="0 0 6 16"><rect x="2" y="1" width="2" height="4.5" fill="#e4ecef"/><rect x="2" y="5.5" width="2" height="6" fill="#e0705e"/><circle cx="3" cy="12.8" r="2" fill="#e82020"/></svg></div>
<div class="tx" id="n79" style="left:45px;top:1px;letter-spacing:-0.233px">Temp9</div>
<div class="a" style="left:589px;top:0;width:1px;height:17px;background:#2a2a2a"></div><div class="a" style="left:590px;top:0;width:1px;height:17px;background:#01050c"></div>
<div class="v" style="left:590px">24 °C</div>
<div class="a" style="left:669px;top:0;width:1px;height:17px;background:#2a2a2a"></div><div class="a" style="left:670px;top:0;width:1px;height:17px;background:#01050c"></div>
<div class="v" style="left:670px">24 °C</div>
<div class="a" style="left:749px;top:0;width:1px;height:17px;background:#2a2a2a"></div><div class="a" style="left:750px;top:0;width:1px;height:17px;background:#01050c"></div>
<div class="v" style="left:750px">24 °C</div>
<div class="a" style="left:829px;top:0;width:1px;height:17px;background:#2a2a2a"></div><div class="a" style="left:830px;top:0;width:1px;height:17px;background:#01050c"></div>
<div class="v" style="left:830px">24 °C</div>
</div>
<div class="r" style="top:1409px">
<div class="a" style="left:43px;top:0;width:866px;height:17px;background:#000"></div>
<div class="a" style="left:27px;top:16px;width:16px;height:1px;background:#1e1e1e"></div>
<div class="a" style="left:32px;top:0"><svg width="6" height="16" viewBox="0 0 6 16"><rect x="2" y="1" width="2" height="4.5" fill="#e4ecef"/><rect x="2" y="5.5" width="2" height="6" fill="#e0705e"/><circle cx="3" cy="12.8" r="2" fill="#e82020"/></svg></div>
<div class="tx" id="n80" style="left:45px;top:1px;letter-spacing:-0.438px">TSI0 (CPU)</div>
<div class="a" style="left:589px;top:0;width:1px;height:17px;background:#2a2a2a"></div><div class="a" style="left:590px;top:0;width:1px;height:17px;background:#01050c"></div>
<div class="a" style="left:591px;top:0;width:79px;height:16px;background:#15203a"></div>
<div class="v" style="left:590px">62 °C</div>
<div class="a" style="left:669px;top:0;width:1px;height:17px;background:#2a2a2a"></div><div class="a" style="left:670px;top:0;width:1px;height:17px;background:#01050c"></div>
<div class="v" style="left:670px">48 °C</div>
<div class="a" style="left:749px;top:0;width:1px;height:17px;background:#2a2a2a"></div><div class="a" style="left:750px;top:0;width:1px;height:17px;background:#01050c"></div>
<div class="v" style="left:750px">90 °C</div>
<div class="a" style="left:829px;top:0;width:1px;height:17px;background:#2a2a2a"></div><div class="a" style="left:830px;top:0;width:1px;height:17px;background:#01050c"></div>
<div class="v" style="left:830px">73 °C</div>
</div>
<div class="r" style="top:1426px">
<div class="a" style="left:43px;top:0;width:866px;height:17px;background:#191919"></div>
<div class="a" style="left:27px;top:16px;width:16px;height:1px;background:#1e1e1e"></div>
<div class="a" style="left:32px;top:0"><svg width="6" height="16" viewBox="0 0 6 16"><rect x="2" y="1" width="2" height="4.5" fill="#e4ecef"/><rect x="2" y="5.5" width="2" height="6" fill="#e0705e"/><circle cx="3" cy="12.8" r="2" fill="#e82020"/></svg></div>
<div class="tx" id="n81" style="left:45px;top:1px;letter-spacing:-0.088px">Temp14</div>
<div class="a" style="left:589px;top:0;width:1px;height:17px;background:#2a2a2a"></div><div class="a" style="left:590px;top:0;width:1px;height:17px;background:#01050c"></div>
<div class="v" style="left:590px">15 °C</div>
<div class="a" style="left:669px;top:0;width:1px;height:17px;background:#2a2a2a"></div><div class="a" style="left:670px;top:0;width:1px;height:17px;background:#01050c"></div>
<div class="v" style="left:670px">15 °C</div>
<div class="a" style="left:749px;top:0;width:1px;height:17px;background:#2a2a2a"></div><div class="a" style="left:750px;top:0;width:1px;height:17px;background:#01050c"></div>
<div class="v" style="left:750px">15 °C</div>
<div class="a" style="left:829px;top:0;width:1px;height:17px;background:#2a2a2a"></div><div class="a" style="left:830px;top:0;width:1px;height:17px;background:#01050c"></div>
<div class="v" style="left:830px">15 °C</div>
</div>
<div class="r" style="top:1443px">
<div class="a" style="left:43px;top:0;width:866px;height:17px;background:#000"></div>
<div class="a" style="left:27px;top:16px;width:16px;height:1px;background:#1e1e1e"></div>
<div class="a" style="left:30px;top:0"><svg width="10" height="16" viewBox="0 0 10 16"><path d="M4 0.2H8.6L5.6 5.6H8.8L0.3 15.3L3 8.3H0Z" fill="#f0c020"/></svg></div>
<div class="tx" id="n82" style="left:45px;top:1px;letter-spacing:-0.463px">Vcore</div>
<div class="a" style="left:589px;top:0;width:1px;height:17px;background:#2a2a2a"></div><div class="a" style="left:590px;top:0;width:1px;height:17px;background:#01050c"></div>
<div class="v" style="left:590px">1.136 V</div>
<div class="a" style="left:669px;top:0;width:1px;height:17px;background:#2a2a2a"></div><div class="a" style="left:670px;top:0;width:1px;height:17px;background:#01050c"></div>
<div class="v" style="left:670px">1.064 V</div>
<div class="a" style="left:749px;top:0;width:1px;height:17px;background:#2a2a2a"></div><div class="a" style="left:750px;top:0;width:1px;height:17px;background:#01050c"></div>
<div class="v" style="left:750px">1.184 V</div>
<div class="a" style="left:829px;top:0;width:1px;height:17px;background:#2a2a2a"></div><div class="a" style="left:830px;top:0;width:1px;height:17px;background:#01050c"></div>
<div class="v" style="left:830px">1.122 V</div>
</div>
<div class="r" style="top:1460px">
<div class="a" style="left:43px;top:0;width:866px;height:17px;background:#191919"></div>
<div class="a" style="left:27px;top:16px;width:16px;height:1px;background:#1e1e1e"></div>
<div class="a" style="left:30px;top:0"><svg width="10" height="16" viewBox="0 0 10 16"><path d="M4 0.2H8.6L5.6 5.6H8.8L0.3 15.3L3 8.3H0Z" fill="#f0c020"/></svg></div>
<div class="tx" id="n83" style="left:45px;top:1px;letter-spacing:0.105px">+5V</div>
<div class="a" style="left:589px;top:0;width:1px;height:17px;background:#2a2a2a"></div><div class="a" style="left:590px;top:0;width:1px;height:17px;background:#01050c"></div>
<div class="v" style="left:590px">5.060 V</div>
<div class="a" style="left:669px;top:0;width:1px;height:17px;background:#2a2a2a"></div><div class="a" style="left:670px;top:0;width:1px;height:17px;background:#01050c"></div>
<div class="v" style="left:670px">5.020 V</div>
<div class="a" style="left:749px;top:0;width:1px;height:17px;background:#2a2a2a"></div><div class="a" style="left:750px;top:0;width:1px;height:17px;background:#01050c"></div>
<div class="v" style="left:750px">5.060 V</div>
<div class="a" style="left:829px;top:0;width:1px;height:17px;background:#2a2a2a"></div><div class="a" style="left:830px;top:0;width:1px;height:17px;background:#01050c"></div>
<div class="v" style="left:830px">5.060 V</div>
</div>
<div class="r" style="top:1477px">
<div class="a" style="left:43px;top:0;width:866px;height:17px;background:#000"></div>
<div class="a" style="left:27px;top:16px;width:16px;height:1px;background:#1e1e1e"></div>
<div class="a" style="left:30px;top:0"><svg width="10" height="16" viewBox="0 0 10 16"><path d="M4 0.2H8.6L5.6 5.6H8.8L0.3 15.3L3 8.3H0Z" fill="#f0c020"/></svg></div>
<div class="tx" id="n84" style="left:45px;top:1px;letter-spacing:-1.110px">AVSB</div>
<div class="a" style="left:589px;top:0;width:1px;height:17px;background:#2a2a2a"></div><div class="a" style="left:590px;top:0;width:1px;height:17px;background:#01050c"></div>
<div class="v" style="left:590px">3.376 V</div>
<div class="a" style="left:669px;top:0;width:1px;height:17px;background:#2a2a2a"></div><div class="a" style="left:670px;top:0;width:1px;height:17px;background:#01050c"></div>
<div class="v" style="left:670px">3.360 V</div>
<div class="a" style="left:749px;top:0;width:1px;height:17px;background:#2a2a2a"></div><div class="a" style="left:750px;top:0;width:1px;height:17px;background:#01050c"></div>
<div class="v" style="left:750px">3.376 V</div>
<div class="a" style="left:829px;top:0;width:1px;height:17px;background:#2a2a2a"></div><div class="a" style="left:830px;top:0;width:1px;height:17px;background:#01050c"></div>
<div class="v" style="left:830px">3.374 V</div>
</div>
<div class="r" style="top:1494px">
<div class="a" style="left:43px;top:0;width:866px;height:17px;background:#191919"></div>
<div class="a" style="left:27px;top:16px;width:16px;height:1px;background:#1e1e1e"></div>
<div class="a" style="left:30px;top:0"><svg width="10" height="16" viewBox="0 0 10 16"><path d="M4 0.2H8.6L5.6 5.6H8.8L0.3 15.3L3 8.3H0Z" fill="#f0c020"/></svg></div>
<div class="tx" id="n85" style="left:45px;top:1px;letter-spacing:-1.148px">3VCC</div>
<div class="a" style="left:589px;top:0;width:1px;height:17px;background:#2a2a2a"></div><div class="a" style="left:590px;top:0;width:1px;height:17px;background:#01050c"></div>
<div class="v" style="left:590px">3.360 V</div>
<div class="a" style="left:669px;top:0;width:1px;height:17px;background:#2a2a2a"></div><div class="a" style="left:670px;top:0;width:1px;height:17px;background:#01050c"></div>
<div class="v" style="left:670px">3.344 V</div>
<div class="a" style="left:749px;top:0;width:1px;height:17px;background:#2a2a2a"></div><div class="a" style="left:750px;top:0;width:1px;height:17px;background:#01050c"></div>
<div class="v" style="left:750px">3.360 V</div>
<div class="a" style="left:829px;top:0;width:1px;height:17px;background:#2a2a2a"></div><div class="a" style="left:830px;top:0;width:1px;height:17px;background:#01050c"></div>
<div class="v" style="left:830px">3.358 V</div>
</div>
<div class="r" style="top:1511px">
<div class="a" style="left:43px;top:0;width:866px;height:17px;background:#000"></div>
<div class="a" style="left:27px;top:16px;width:16px;height:1px;background:#1e1e1e"></div>
<div class="a" style="left:30px;top:0"><svg width="10" height="16" viewBox="0 0 10 16"><path d="M4 0.2H8.6L5.6 5.6H8.8L0.3 15.3L3 8.3H0Z" fill="#f0c020"/></svg></div>
<div class="tx" id="n86" style="left:45px;top:1px;letter-spacing:-0.033px">+12V</div>
<div class="a" style="left:589px;top:0;width:1px;height:17px;background:#2a2a2a"></div><div class="a" style="left:590px;top:0;width:1px;height:17px;background:#01050c"></div>
<div class="v" style="left:590px">11.884 V</div>
<div class="a" style="left:669px;top:0;width:1px;height:17px;background:#2a2a2a"></div><div class="a" style="left:670px;top:0;width:1px;height:17px;background:#01050c"></div>
<div class="v" style="left:670px">11.884 V</div>
<div class="a" style="left:749px;top:0;width:1px;height:17px;background:#2a2a2a"></div><div class="a" style="left:750px;top:0;width:1px;height:17px;background:#01050c"></div>
<div class="v" style="left:750px">11.884 V</div>
<div class="a" style="left:829px;top:0;width:1px;height:17px;background:#2a2a2a"></div><div class="a" style="left:830px;top:0;width:1px;height:17px;background:#01050c"></div>
<div class="v" style="left:830px">11.884 V</div>
</div>
<div class="r" style="top:1528px">
<div class="a" style="left:43px;top:0;width:866px;height:17px;background:#191919"></div>
<div class="a" style="left:27px;top:16px;width:16px;height:1px;background:#1e1e1e"></div>
<div class="a" style="left:30px;top:0"><svg width="10" height="16" viewBox="0 0 10 16"><path d="M4 0.2H8.6L5.6 5.6H8.8L0.3 15.3L3 8.3H0Z" fill="#f0c020"/></svg></div>
<div class="tx" id="n87" style="left:45px;top:1px;letter-spacing:-0.456px">VIN8</div>
<div class="a" style="left:589px;top:0;width:1px;height:17px;background:#2a2a2a"></div><div class="a" style="left:590px;top:0;width:1px;height:17px;background:#01050c"></div>
<div class="v" style="left:590px">1.032 V</div>
<div class="a" style="left:669px;top:0;width:1px;height:17px;background:#2a2a2a"></div><div class="a" style="left:670px;top:0;width:1px;height:17px;background:#01050c"></div>
<div class="v" style="left:670px">1.032 V</div>
<div class="a" style="left:749px;top:0;width:1px;height:17px;background:#2a2a2a"></div><div class="a" style="left:750px;top:0;width:1px;height:17px;background:#01050c"></div>
<div class="v" style="left:750px">1.032 V</div>
<div class="a" style="left:829px;top:0;width:1px;height:17px;background:#2a2a2a"></div><div class="a" style="left:830px;top:0;width:1px;height:17px;background:#01050c"></div>
<div class="v" style="left:830px">1.032 V</div>
</div>
<div class="r" style="top:1545px">
<div class="a" style="left:43px;top:0;width:866px;height:17px;background:#000"></div>
<div class="a" style="left:27px;top:16px;width:16px;height:1px;background:#1e1e1e"></div>
<div class="a" style="left:30px;top:0"><svg width="10" height="16" viewBox="0 0 10 16"><path d="M4 0.2H8.6L5.6 5.6H8.8L0.3 15.3L3 8.3H0Z" fill="#f0c020"/></svg></div>
<div class="tx" id="n88" style="left:45px;top:1px;letter-spacing:-0.190px">VIN4</div>
<div class="a" style="left:589px;top:0;width:1px;height:17px;background:#2a2a2a"></div><div class="a" style="left:590px;top:0;width:1px;height:17px;background:#01050c"></div>
<div class="a" style="left:591px;top:0;width:79px;height:16px;background:#15203a"></div>
<div class="v" style="left:590px">1.088 V</div>
<div class="a" style="left:669px;top:0;width:1px;height:17px;background:#2a2a2a"></div><div class="a" style="left:670px;top:0;width:1px;height:17px;background:#01050c"></div>
<div class="v" style="left:670px">0.760 V</div>
<div class="a" style="left:749px;top:0;width:1px;height:17px;background:#2a2a2a"></div><div class="a" style="left:750px;top:0;width:1px;height:17px;background:#01050c"></div>
<div class="v" style="left:750px">1.152 V</div>
<div class="a" style="left:829px;top:0;width:1px;height:17px;background:#2a2a2a"></div><div class="a" style="left:830px;top:0;width:1px;height:17px;background:#01050c"></div>
<div class="v" style="left:830px">1.057 V</div>
</div>
<div class="r" style="top:1562px">
<div class="a" style="left:43px;top:0;width:866px;height:17px;background:#191919"></div>
<div class="a" style="left:27px;top:16px;width:16px;height:1px;background:#1e1e1e"></div>
<div class="a" style="left:30px;top:0"><svg width="10" height="16" viewBox="0 0 10 16"><path d="M4 0.2H8.6L5.6 5.6H8.8L0.3 15.3L3 8.3H0Z" fill="#f0c020"/></svg></div>
<div class="tx" id="n89" style="left:45px;top:1px;letter-spacing:-1.314px">3VSB</div>
<div class="a" style="left:589px;top:0;width:1px;height:17px;background:#2a2a2a"></div><div class="a" style="left:590px;top:0;width:1px;height:17px;background:#01050c"></div>
<div class="v" style="left:590px">3.376 V</div>
<div class="a" style="left:669px;top:0;width:1px;height:17px;background:#2a2a2a"></div><div class="a" style="left:670px;top:0;width:1px;height:17px;background:#01050c"></div>
<div class="v" style="left:670px">3.360 V</div>
<div class="a" style="left:749px;top:0;width:1px;height:17px;background:#2a2a2a"></div><div class="a" style="left:750px;top:0;width:1px;height:17px;background:#01050c"></div>
<div class="v" style="left:750px">3.376 V</div>
<div class="a" style="left:829px;top:0;width:1px;height:17px;background:#2a2a2a"></div><div class="a" style="left:830px;top:0;width:1px;height:17px;background:#01050c"></div>
<div class="v" style="left:830px">3.374 V</div>
</div>
<div class="r" style="top:1579px">
<div class="a" style="left:43px;top:0;width:866px;height:17px;background:#000"></div>
<div class="a" style="left:27px;top:16px;width:16px;height:1px;background:#1e1e1e"></div>
<div class="a" style="left:30px;top:0"><svg width="10" height="16" viewBox="0 0 10 16"><path d="M4 0.2H8.6L5.6 5.6H8.8L0.3 15.3L3 8.3H0Z" fill="#f0c020"/></svg></div>
<div class="tx" id="n90" style="left:45px;top:1px;letter-spacing:-0.841px">VBAT</div>
<div class="a" style="left:589px;top:0;width:1px;height:17px;background:#2a2a2a"></div><div class="a" style="left:590px;top:0;width:1px;height:17px;background:#01050c"></div>
<div class="v" style="left:590px">3.344 V</div>
<div class="a" style="left:669px;top:0;width:1px;height:17px;background:#2a2a2a"></div><div class="a" style="left:670px;top:0;width:1px;height:17px;background:#01050c"></div>
<div class="v" style="left:670px">3.328 V</div>
<div class="a" style="left:749px;top:0;width:1px;height:17px;background:#2a2a2a"></div><div class="a" style="left:750px;top:0;width:1px;height:17px;background:#01050c"></div>
<div class="v" style="left:750px">3.344 V</div>
<div class="a" style="left:829px;top:0;width:1px;height:17px;background:#2a2a2a"></div><div class="a" style="left:830px;top:0;width:1px;height:17px;background:#01050c"></div>
<div class="v" style="left:830px">3.343 V</div>
</div>
<div class="r" style="top:1596px">
<div class="a" style="left:43px;top:0;width:866px;height:17px;background:#191919"></div>
<div class="a" style="left:27px;top:16px;width:16px;height:1px;background:#1e1e1e"></div>
<div class="a" style="left:30px;top:0"><svg width="10" height="16" viewBox="0 0 10 16"><path d="M4 0.2H8.6L5.6 5.6H8.8L0.3 15.3L3 8.3H0Z" fill="#f0c020"/></svg></div>
<div class="tx" id="n91" style="left:45px;top:1px;letter-spacing:-1.491px">VTT</div>
<div class="a" style="left:589px;top:0;width:1px;height:17px;background:#2a2a2a"></div><div class="a" style="left:590px;top:0;width:1px;height:17px;background:#01050c"></div>
<div class="v" style="left:590px">3.360 V</div>
<div class="a" style="left:669px;top:0;width:1px;height:17px;background:#2a2a2a"></div><div class="a" style="left:670px;top:0;width:1px;height:17px;background:#01050c"></div>
<div class="v" style="left:670px">3.344 V</div>
<div class="a" style="left:749px;top:0;width:1px;height:17px;background:#2a2a2a"></div><div class="a" style="left:750px;top:0;width:1px;height:17px;background:#01050c"></div>
<div class="v" style="left:750px">3.360 V</div>
<div class="a" style="left:829px;top:0;width:1px;height:17px;background:#2a2a2a"></div><div class="a" style="left:830px;top:0;width:1px;height:17px;background:#01050c"></div>
<div class="v" style="left:830px">3.358 V</div>
</div>
<div class="r" style="top:1613px">
<div class="a" style="left:43px;top:0;width:866px;height:17px;background:#000"></div>
<div class="a" style="left:27px;top:16px;width:16px;height:1px;background:#1e1e1e"></div>
<div class="a" style="left:30px;top:0"><svg width="10" height="16" viewBox="0 0 10 16"><path d="M4 0.2H8.6L5.6 5.6H8.8L0.3 15.3L3 8.3H0Z" fill="#f0c020"/></svg></div>
<div class="tx" id="n92" style="left:45px;top:1px;letter-spacing:-0.577px">CPU VDDIO / MC</div>
<div class="a" style="left:589px;top:0;width:1px;height:17px;background:#2a2a2a"></div><div class="a" style="left:590px;top:0;width:1px;height:17px;background:#01050c"></div>
<div class="v" style="left:590px">1.360 V</div>
<div class="a" style="left:669px;top:0;width:1px;height:17px;background:#2a2a2a"></div><div class="a" style="left:670px;top:0;width:1px;height:17px;background:#01050c"></div>
<div class="v" style="left:670px">1.344 V</div>
<div class="a" style="left:749px;top:0;width:1px;height:17px;background:#2a2a2a"></div><div class="a" style="left:750px;top:0;width:1px;height:17px;background:#01050c"></div>
<div class="v" style="left:750px">1.360 V</div>
<div class="a" style="left:829px;top:0;width:1px;height:17px;background:#2a2a2a"></div><div class="a" style="left:830px;top:0;width:1px;height:17px;background:#01050c"></div>
<div class="v" style="left:830px">1.360 V</div>
</div>
<div class="r" style="top:1630px">
<div class="a" style="left:43px;top:0;width:866px;height:17px;background:#191919"></div>
<div class="a" style="left:27px;top:16px;width:16px;height:1px;background:#1e1e1e"></div>
<div class="a" style="left:30px;top:0"><svg width="10" height="16" viewBox="0 0 10 16"><path d="M4 0.2H8.6L5.6 5.6H8.8L0.3 15.3L3 8.3H0Z" fill="#f0c020"/></svg></div>
<div class="tx" id="n93" style="left:45px;top:1px;letter-spacing:-0.986px">VMISC</div>
<div class="a" style="left:589px;top:0;width:1px;height:17px;background:#2a2a2a"></div><div class="a" style="left:590px;top:0;width:1px;height:17px;background:#01050c"></div>
<div class="a" style="left:591px;top:0;width:79px;height:16px;background:#15203a"></div>
<div class="v" style="left:590px">1.136 V</div>
<div class="a" style="left:669px;top:0;width:1px;height:17px;background:#2a2a2a"></div><div class="a" style="left:670px;top:0;width:1px;height:17px;background:#01050c"></div>
<div class="v" style="left:670px">1.136 V</div>
<div class="a" style="left:749px;top:0;width:1px;height:17px;background:#2a2a2a"></div><div class="a" style="left:750px;top:0;width:1px;height:17px;background:#01050c"></div>
<div class="v" style="left:750px">1.152 V</div>
<div class="a" style="left:829px;top:0;width:1px;height:17px;background:#2a2a2a"></div><div class="a" style="left:830px;top:0;width:1px;height:17px;background:#01050c"></div>
<div class="v" style="left:830px">1.144 V</div>
</div>
<div class="r" style="top:1647px">
<div class="a" style="left:43px;top:0;width:866px;height:17px;background:#000"></div>
<div class="a" style="left:27px;top:16px;width:16px;height:1px;background:#1e1e1e"></div>
<div class="a" style="left:30px;top:0"><svg width="10" height="16" viewBox="0 0 10 16"><path d="M4 0.2H8.6L5.6 5.6H8.8L0.3 15.3L3 8.3H0Z" fill="#f0c020"/></svg></div>
<div class="tx" id="n94" style="left:45px;top:1px;letter-spacing:-0.078px">1,8V Standby</div>
<div class="a" style="left:589px;top:0;width:1px;height:17px;background:#2a2a2a"></div><div class="a" style="left:590px;top:0;width:1px;height:17px;background:#01050c"></div>
<div class="v" style="left:590px">1.822 V</div>
<div class="a" style="left:669px;top:0;width:1px;height:17px;background:#2a2a2a"></div><div class="a" style="left:670px;top:0;width:1px;height:17px;background:#01050c"></div>
<div class="v" style="left:670px">1.822 V</div>
<div class="a" style="left:749px;top:0;width:1px;height:17px;background:#2a2a2a"></div><div class="a" style="left:750px;top:0;width:1px;height:17px;background:#01050c"></div>
<div class="v" style="left:750px">1.822 V</div>
<div class="a" style="left:829px;top:0;width:1px;height:17px;background:#2a2a2a"></div><div class="a" style="left:830px;top:0;width:1px;height:17px;background:#01050c"></div>
<div class="v" style="left:830px">1.822 V</div>
</div>
<div class="r" style="top:1664px">
<div class="a" style="left:43px;top:0;width:866px;height:17px;background:#191919"></div>
<div class="a" style="left:27px;top:16px;width:16px;height:1px;background:#1e1e1e"></div>
<div class="a" style="left:30px;top:0"><svg width="10" height="16" viewBox="0 0 10 16"><path d="M4 0.2H8.6L5.6 5.6H8.8L0.3 15.3L3 8.3H0Z" fill="#f0c020"/></svg></div>
<div class="tx" id="n95" style="left:45px;top:1px;letter-spacing:-0.356px">VIN3</div>
<div class="a" style="left:589px;top:0;width:1px;height:17px;background:#2a2a2a"></div><div class="a" style="left:590px;top:0;width:1px;height:17px;background:#01050c"></div>
<div class="a" style="left:591px;top:0;width:79px;height:16px;background:#15203a"></div>
<div class="v" style="left:590px">0.248 V</div>
<div class="a" style="left:669px;top:0;width:1px;height:17px;background:#2a2a2a"></div><div class="a" style="left:670px;top:0;width:1px;height:17px;background:#01050c"></div>
<div class="v" style="left:670px">0.224 V</div>
<div class="a" style="left:749px;top:0;width:1px;height:17px;background:#2a2a2a"></div><div class="a" style="left:750px;top:0;width:1px;height:17px;background:#01050c"></div>
<div class="v" style="left:750px">0.248 V</div>
<div class="a" style="left:829px;top:0;width:1px;height:17px;background:#2a2a2a"></div><div class="a" style="left:830px;top:0;width:1px;height:17px;background:#01050c"></div>
<div class="v" style="left:830px">0.244 V</div>
</div>
<div class="r" style="top:1681px">
<div class="a" style="left:43px;top:0;width:866px;height:17px;background:#000"></div>
<div class="a" style="left:27px;top:16px;width:16px;height:1px;background:#1e1e1e"></div>
<div class="a" style="left:30px;top:0"><svg width="10" height="16" viewBox="0 0 10 16"><path d="M4 0.2H8.6L5.6 5.6H8.8L0.3 15.3L3 8.3H0Z" fill="#f0c020"/></svg></div>
<div class="tx" id="n96" style="left:45px;top:1px;letter-spacing:-0.356px">VIN7</div>
<div class="a" style="left:589px;top:0;width:1px;height:17px;background:#2a2a2a"></div><div class="a" style="left:590px;top:0;width:1px;height:17px;background:#01050c"></div>
<div class="a" style="left:591px;top:0;width:79px;height:16px;background:#15203a"></div>
<div class="v" style="left:590px">2.032 V</div>
<div class="a" style="left:669px;top:0;width:1px;height:17px;background:#2a2a2a"></div><div class="a" style="left:670px;top:0;width:1px;height:17px;background:#01050c"></div>
<div class="v" style="left:670px">0.000 V</div>
<div class="a" style="left:749px;top:0;width:1px;height:17px;background:#2a2a2a"></div><div class="a" style="left:750px;top:0;width:1px;height:17px;background:#01050c"></div>
<div class="v" style="left:750px">2.032 V</div>
<div class="a" style="left:829px;top:0;width:1px;height:17px;background:#2a2a2a"></div><div class="a" style="left:830px;top:0;width:1px;height:17px;background:#01050c"></div>
<div class="v" style="left:830px">1.625 V</div>
</div>
<div class="r" style="top:1698px">
<div class="a" style="left:43px;top:0;width:866px;height:17px;background:#191919"></div>
<div class="a" style="left:27px;top:16px;width:16px;height:1px;background:#1e1e1e"></div>
<div class="a" style="left:30px;top:0"><svg width="10" height="16" viewBox="0 0 10 16"><path d="M4 0.2H8.6L5.6 5.6H8.8L0.3 15.3L3 8.3H0Z" fill="#f0c020"/></svg></div>
<div class="tx" id="n97" style="left:45px;top:1px;letter-spacing:-0.356px">VIN9</div>
<div class="a" style="left:589px;top:0;width:1px;height:17px;background:#2a2a2a"></div><div class="a" style="left:590px;top:0;width:1px;height:17px;background:#01050c"></div>
<div class="a" style="left:591px;top:0;width:79px;height:16px;background:#15203a"></div>
<div class="v" style="left:590px">0.544 V</div>
<div class="a" style="left:669px;top:0;width:1px;height:17px;background:#2a2a2a"></div><div class="a" style="left:670px;top:0;width:1px;height:17px;background:#01050c"></div>
<div class="v" style="left:670px">0.544 V</div>
<div class="a" style="left:749px;top:0;width:1px;height:17px;background:#2a2a2a"></div><div class="a" style="left:750px;top:0;width:1px;height:17px;background:#01050c"></div>
<div class="v" style="left:750px">0.680 V</div>
<div class="a" style="left:829px;top:0;width:1px;height:17px;background:#2a2a2a"></div><div class="a" style="left:830px;top:0;width:1px;height:17px;background:#01050c"></div>
<div class="v" style="left:830px">0.582 V</div>
</div>
<div class="r" style="top:1715px">
<div class="a" style="left:43px;top:0;width:866px;height:17px;background:#000"></div>
<div class="a" style="left:27px;top:16px;width:16px;height:1px;background:#1e1e1e"></div>
<div class="a" style="left:30px;top:0"><svg width="10" height="16" viewBox="0 0 10 16"><path d="M4 0.2H8.6L5.6 5.6H8.8L0.3 15.3L3 8.3H0Z" fill="#f0c020"/></svg></div>
<div class="tx" id="n98" style="left:45px;top:1px;letter-spacing:-0.721px">VHIF</div>
<div class="a" style="left:589px;top:0;width:1px;height:17px;background:#2a2a2a"></div><div class="a" style="left:590px;top:0;width:1px;height:17px;background:#01050c"></div>
<div class="a" style="left:591px;top:0;width:79px;height:16px;background:#15203a"></div>
<div class="v" style="left:590px">3.376 V</div>
<div class="a" style="left:669px;top:0;width:1px;height:17px;background:#2a2a2a"></div><div class="a" style="left:670px;top:0;width:1px;height:17px;background:#01050c"></div>
<div class="v" style="left:670px">3.360 V</div>
<div class="a" style="left:749px;top:0;width:1px;height:17px;background:#2a2a2a"></div><div class="a" style="left:750px;top:0;width:1px;height:17px;background:#01050c"></div>
<div class="v" style="left:750px">3.376 V</div>
<div class="a" style="left:829px;top:0;width:1px;height:17px;background:#2a2a2a"></div><div class="a" style="left:830px;top:0;width:1px;height:17px;background:#01050c"></div>
<div class="v" style="left:830px">3.375 V</div>
</div>
<div class="r" style="top:1732px">
<div class="a" style="left:43px;top:0;width:866px;height:17px;background:#191919"></div>
<div class="a" style="left:27px;top:16px;width:16px;height:1px;background:#1e1e1e"></div>
<div class="a" style="left:30px;top:0"><svg width="10" height="16" viewBox="0 0 10 16"><path d="M4 0.2H8.6L5.6 5.6H8.8L0.3 15.3L3 8.3H0Z" fill="#f0c020"/></svg></div>
<div class="tx" id="n99" style="left:45px;top:1px;letter-spacing:-1.021px">CPU SOC</div>
<div class="a" style="left:589px;top:0;width:1px;height:17px;background:#2a2a2a"></div><div class="a" style="left:590px;top:0;width:1px;height:17px;background:#01050c"></div>
<div class="v" style="left:590px">1.208 V</div>
<div class="a" style="left:669px;top:0;width:1px;height:17px;background:#2a2a2a"></div><div class="a" style="left:670px;top:0;width:1px;height:17px;background:#01050c"></div>
<div class="v" style="left:670px">1.208 V</div>
<div class="a" style="left:749px;top:0;width:1px;height:17px;background:#2a2a2a"></div><div class="a" style="left:750px;top:0;width:1px;height:17px;background:#01050c"></div>
<div class="v" style="left:750px">1.216 V</div>
<div class="a" style="left:829px;top:0;width:1px;height:17px;background:#2a2a2a"></div><div class="a" style="left:830px;top:0;width:1px;height:17px;background:#01050c"></div>
<div class="v" style="left:830px">1.214 V</div>
</div>
<div class="r" style="top:1749px">
<div class="a" style="left:43px;top:0;width:866px;height:17px;background:#000"></div>
<div class="a" style="left:589px;top:0;width:1px;height:17px;background:#2a2a2a"></div><div class="a" style="left:590px;top:0;width:1px;height:17px;background:#01050c"></div>
<div class="a" style="left:669px;top:0;width:1px;height:17px;background:#2a2a2a"></div><div class="a" style="left:670px;top:0;width:1px;height:17px;background:#01050c"></div>
<div class="a" style="left:749px;top:0;width:1px;height:17px;background:#2a2a2a"></div><div class="a" style="left:750px;top:0;width:1px;height:17px;background:#01050c"></div>
<div class="a" style="left:829px;top:0;width:1px;height:17px;background:#2a2a2a"></div><div class="a" style="left:830px;top:0;width:1px;height:17px;background:#01050c"></div>
</div>
<div class="r" style="top:1766px">
<div class="a" style="left:43px;top:0;width:866px;height:17px;background:#242424"></div>
<div class="a" style="left:27px;top:0;width:16px;height:16px;background:#0a0a0a"></div>
<div class="a" style="left:9px;top:4px"><svg width="14" height="9" viewBox="0 0 14 9"><path d="M1 1L7 7L13 1" fill="none" stroke="#dcdcdc" stroke-width="1.25"/></svg></div>
<div class="a" style="left:29px;top:0px"><svg width="12" height="16" viewBox="0 0 12 16"><rect x="2" y="1" width="8" height="14" rx="1.5" fill="#555"/><rect x="3.5" y="2.5" width="5" height="11" fill="#676767"/><rect x="0.3" y="2.5" width="1.8" height="1.3" fill="#b0b0b0"/><rect x="9.9" y="2.5" width="1.8" height="1.3" fill="#b0b0b0"/><rect x="0.3" y="5.5" width="1.8" height="1.3" fill="#b0b0b0"/><rect x="9.9" y="5.5" width="1.8" height="1.3" fill="#b0b0b0"/><rect x="0.3" y="8.5" width="1.8" height="1.3" fill="#b0b0b0"/><rect x="9.9" y="8.5" width="1.8" height="1.3" fill="#b0b0b0"/><rect x="0.3" y="11.5" width="1.8" height="1.3" fill="#b0b0b0"/><rect x="9.9" y="11.5" width="1.8" height="1.3" fill="#b0b0b0"/></svg></div>
<div class="gx" id="n101" style="left:45px;top:0px;letter-spacing:-0.088px">ASUS ROG STRIX B650E-I GAMING WIFI (AMD Chipsatz)</div>
<div class="a" style="left:589px;top:0;width:1px;height:17px;background:#2a2a2a"></div><div class="a" style="left:590px;top:0;width:1px;height:17px;background:#01050c"></div>
<div class="a" style="left:669px;top:0;width:1px;height:17px;background:#2a2a2a"></div><div class="a" style="left:670px;top:0;width:1px;height:17px;background:#01050c"></div>
<div class="a" style="left:749px;top:0;width:1px;height:17px;background:#2a2a2a"></div><div class="a" style="left:750px;top:0;width:1px;height:17px;background:#01050c"></div>
<div class="a" style="left:829px;top:0;width:1px;height:17px;background:#2a2a2a"></div><div class="a" style="left:830px;top:0;width:1px;height:17px;background:#01050c"></div>
</div>
<div class="r" style="top:1783px">
<div class="a" style="left:43px;top:0;width:866px;height:17px;background:#000"></div>
<div class="a" style="left:27px;top:16px;width:16px;height:1px;background:#1e1e1e"></div>
<div class="a" style="left:32px;top:0"><svg width="6" height="16" viewBox="0 0 6 16"><rect x="2" y="1" width="2" height="4.5" fill="#e4ecef"/><rect x="2" y="5.5" width="2" height="6" fill="#e0705e"/><circle cx="3" cy="12.8" r="2" fill="#e82020"/></svg></div>
<div class="tx" id="n102" style="left:45px;top:1px;letter-spacing:-0.112px">Chipsatz 1 (xHCI)</div>
<div class="a" style="left:589px;top:0;width:1px;height:17px;background:#2a2a2a"></div><div class="a" style="left:590px;top:0;width:1px;height:17px;background:#01050c"></div>
<div class="v" style="left:590px">75.5 °C</div>
<div class="a" style="left:669px;top:0;width:1px;height:17px;background:#2a2a2a"></div><div class="a" style="left:670px;top:0;width:1px;height:17px;background:#01050c"></div>
<div class="v" style="left:670px">66.4 °C</div>
<div class="a" style="left:749px;top:0;width:1px;height:17px;background:#2a2a2a"></div><div class="a" style="left:750px;top:0;width:1px;height:17px;background:#01050c"></div>
<div class="v" style="left:750px">76.4 °C</div>
<div class="a" style="left:829px;top:0;width:1px;height:17px;background:#2a2a2a"></div><div class="a" style="left:830px;top:0;width:1px;height:17px;background:#01050c"></div>
<div class="v" style="left:830px">74.2 °C</div>
</div>
<div class="r" style="top:1800px">
<div class="a" style="left:43px;top:0;width:866px;height:17px;background:#191919"></div>
<div class="a" style="left:589px;top:0;width:1px;height:17px;background:#2a2a2a"></div><div class="a" style="left:590px;top:0;width:1px;height:17px;background:#01050c"></div>
<div class="a" style="left:669px;top:0;width:1px;height:17px;background:#2a2a2a"></div><div class="a" style="left:670px;top:0;width:1px;height:17px;background:#01050c"></div>
<div class="a" style="left:749px;top:0;width:1px;height:17px;background:#2a2a2a"></div><div class="a" style="left:750px;top:0;width:1px;height:17px;background:#01050c"></div>
<div class="a" style="left:829px;top:0;width:1px;height:17px;background:#2a2a2a"></div><div class="a" style="left:830px;top:0;width:1px;height:17px;background:#01050c"></div>
</div>
<div class="r" style="top:1817px">
<div class="a" style="left:43px;top:0;width:866px;height:17px;background:#242424"></div>
<div class="a" style="left:27px;top:0;width:16px;height:16px;background:#0a0a0a"></div>
<div class="a" style="left:9px;top:4px"><svg width="14" height="9" viewBox="0 0 14 9"><path d="M1 1L7 7L13 1" fill="none" stroke="#dcdcdc" stroke-width="1.25"/></svg></div>
<div class="a" style="left:29px;top:0px"><svg width="12" height="16" viewBox="0 0 12 16"><rect x="2" y="1" width="8" height="14" rx="1.5" fill="#555"/><rect x="3.5" y="2.5" width="5" height="11" fill="#676767"/><rect x="0.3" y="2.5" width="1.8" height="1.3" fill="#b0b0b0"/><rect x="9.9" y="2.5" width="1.8" height="1.3" fill="#b0b0b0"/><rect x="0.3" y="5.5" width="1.8" height="1.3" fill="#b0b0b0"/><rect x="9.9" y="5.5" width="1.8" height="1.3" fill="#b0b0b0"/><rect x="0.3" y="8.5" width="1.8" height="1.3" fill="#b0b0b0"/><rect x="9.9" y="8.5" width="1.8" height="1.3" fill="#b0b0b0"/><rect x="0.3" y="11.5" width="1.8" height="1.3" fill="#b0b0b0"/><rect x="9.9" y="11.5" width="1.8" height="1.3" fill="#b0b0b0"/></svg></div>
<div class="gx" id="n104" style="left:45px;top:0px;letter-spacing:-0.687px">ASUS EC: ASUS</div>
<div class="a" style="left:589px;top:0;width:1px;height:17px;background:#2a2a2a"></div><div class="a" style="left:590px;top:0;width:1px;height:17px;background:#01050c"></div>
<div class="a" style="left:669px;top:0;width:1px;height:17px;background:#2a2a2a"></div><div class="a" style="left:670px;top:0;width:1px;height:17px;background:#01050c"></div>
<div class="a" style="left:749px;top:0;width:1px;height:17px;background:#2a2a2a"></div><div class="a" style="left:750px;top:0;width:1px;height:17px;background:#01050c"></div>
<div class="a" style="left:829px;top:0;width:1px;height:17px;background:#2a2a2a"></div><div class="a" style="left:830px;top:0;width:1px;height:17px;background:#01050c"></div>
</div>
<div class="r" style="top:1834px">
<div class="a" style="left:43px;top:0;width:866px;height:17px;background:#191919"></div>
<div class="a" style="left:27px;top:16px;width:16px;height:1px;background:#1e1e1e"></div>
<div class="a" style="left:32px;top:0"><svg width="6" height="16" viewBox="0 0 6 16"><rect x="2" y="1" width="2" height="4.5" fill="#e4ecef"/><rect x="2" y="5.5" width="2" height="6" fill="#e0705e"/><circle cx="3" cy="12.8" r="2" fill="#e82020"/></svg></div>
<div class="tx" id="n105" style="left:45px;top:1px;letter-spacing:-1.577px">VRM</div>
<div class="a" style="left:589px;top:0;width:1px;height:17px;background:#2a2a2a"></div><div class="a" style="left:590px;top:0;width:1px;height:17px;background:#01050c"></div>
<div class="v" style="left:590px">66 °C</div>
<div class="a" style="left:669px;top:0;width:1px;height:17px;background:#2a2a2a"></div><div class="a" style="left:670px;top:0;width:1px;height:17px;background:#01050c"></div>
<div class="v" style="left:670px">51 °C</div>
<div class="a" style="left:749px;top:0;width:1px;height:17px;background:#2a2a2a"></div><div class="a" style="left:750px;top:0;width:1px;height:17px;background:#01050c"></div>
<div class="v" style="left:750px">71 °C</div>
<div class="a" style="left:829px;top:0;width:1px;height:17px;background:#2a2a2a"></div><div class="a" style="left:830px;top:0;width:1px;height:17px;background:#01050c"></div>
<div class="v" style="left:830px">66 °C</div>
</div>
<div class="r" style="top:1851px">
<div class="a" style="left:43px;top:0;width:866px;height:17px;background:#000"></div>
<div class="a" style="left:27px;top:16px;width:16px;height:1px;background:#1e1e1e"></div>
<div class="a" style="left:32px;top:0"><svg width="6" height="16" viewBox="0 0 6 16"><rect x="2" y="1" width="2" height="4.5" fill="#e4ecef"/><rect x="2" y="5.5" width="2" height="6" fill="#e0705e"/><circle cx="3" cy="12.8" r="2" fill="#e82020"/></svg></div>
<div class="tx" id="n106" style="left:45px;top:1px;letter-spacing:-0.366px">VRM SOC Temperatur</div>
<div class="a" style="left:589px;top:0;width:1px;height:17px;background:#2a2a2a"></div><div class="a" style="left:590px;top:0;width:1px;height:17px;background:#01050c"></div>
<div class="a" style="left:591px;top:0;width:79px;height:16px;background:#15203a"></div>
<div class="v" style="left:590px">63 °C</div>
<div class="a" style="left:669px;top:0;width:1px;height:17px;background:#2a2a2a"></div><div class="a" style="left:670px;top:0;width:1px;height:17px;background:#01050c"></div>
<div class="v" style="left:670px">51 °C</div>
<div class="a" style="left:749px;top:0;width:1px;height:17px;background:#2a2a2a"></div><div class="a" style="left:750px;top:0;width:1px;height:17px;background:#01050c"></div>
<div class="v" style="left:750px">66 °C</div>
<div class="a" style="left:829px;top:0;width:1px;height:17px;background:#2a2a2a"></div><div class="a" style="left:830px;top:0;width:1px;height:17px;background:#01050c"></div>
<div class="v" style="left:830px">62 °C</div>
</div>
<div class="r" style="top:1868px">
<div class="a" style="left:43px;top:0;width:866px;height:17px;background:#191919"></div>
<div class="a" style="left:27px;top:16px;width:16px;height:1px;background:#1e1e1e"></div>
<div class="a" style="left:30px;top:0"><svg width="10" height="16" viewBox="0 0 10 16"><path d="M4 0.2H8.6L5.6 5.6H8.8L0.3 15.3L3 8.3H0Z" fill="#f0c020"/></svg></div>
<div class="tx" id="n107" style="left:45px;top:1px;letter-spacing:-0.429px">VRM Vcore Spannung (VOUT)</div>
<div class="a" style="left:589px;top:0;width:1px;height:17px;background:#2a2a2a"></div><div class="a" style="left:590px;top:0;width:1px;height:17px;background:#01050c"></div>
<div class="a" style="left:591px;top:0;width:79px;height:16px;background:#15203a"></div>
<div class="v" style="left:590px">1.101 V</div>
<div class="a" style="left:669px;top:0;width:1px;height:17px;background:#2a2a2a"></div><div class="a" style="left:670px;top:0;width:1px;height:17px;background:#01050c"></div>
<div class="v" style="left:670px">1.000 V</div>
<div class="a" style="left:749px;top:0;width:1px;height:17px;background:#2a2a2a"></div><div class="a" style="left:750px;top:0;width:1px;height:17px;background:#01050c"></div>
<div class="v" style="left:750px">1.140 V</div>
<div class="a" style="left:829px;top:0;width:1px;height:17px;background:#2a2a2a"></div><div class="a" style="left:830px;top:0;width:1px;height:17px;background:#01050c"></div>
<div class="v" style="left:830px">1.077 V</div>
</div>
<div class="r" style="top:1885px">
<div class="a" style="left:43px;top:0;width:866px;height:17px;background:#000"></div>
<div class="a" style="left:27px;top:16px;width:16px;height:1px;background:#1e1e1e"></div>
<div class="a" style="left:30px;top:0"><svg width="10" height="16" viewBox="0 0 10 16"><path d="M4 0.2H8.6L5.6 5.6H8.8L0.3 15.3L3 8.3H0Z" fill="#f0c020"/></svg></div>
<div class="tx" id="n108" style="left:45px;top:1px;letter-spacing:-0.523px">VRM SOC Spannung (VOUT)</div>
<div class="a" style="left:589px;top:0;width:1px;height:17px;background:#2a2a2a"></div><div class="a" style="left:590px;top:0;width:1px;height:17px;background:#01050c"></div>
<div class="v" style="left:590px">1.187 V</div>
<div class="a" style="left:669px;top:0;width:1px;height:17px;background:#2a2a2a"></div><div class="a" style="left:670px;top:0;width:1px;height:17px;background:#01050c"></div>
<div class="v" style="left:670px">1.183 V</div>
<div class="a" style="left:749px;top:0;width:1px;height:17px;background:#2a2a2a"></div><div class="a" style="left:750px;top:0;width:1px;height:17px;background:#01050c"></div>
<div class="v" style="left:750px">1.187 V</div>
<div class="a" style="left:829px;top:0;width:1px;height:17px;background:#2a2a2a"></div><div class="a" style="left:830px;top:0;width:1px;height:17px;background:#01050c"></div>
<div class="v" style="left:830px">1.186 V</div>
</div>
<div class="r" style="top:1902px">
<div class="a" style="left:43px;top:0;width:866px;height:17px;background:#191919"></div>
<div class="a" style="left:27px;top:16px;width:16px;height:1px;background:#1e1e1e"></div>
<div class="a" style="left:28px;top:2px"><svg width="14" height="14" viewBox="0 0 14 14"><ellipse cx="7" cy="3.2" rx="2.9" ry="2.4" fill="#d4d4d4"/><ellipse cx="7" cy="10.8" rx="2.9" ry="2.4" fill="#d4d4d4"/><ellipse cx="3.2" cy="7" rx="2.4" ry="2.9" fill="#d4d4d4"/><ellipse cx="10.8" cy="7" rx="2.4" ry="2.9" fill="#d4d4d4"/><circle cx="7" cy="7" r="1.6" fill="#bbb"/><circle cx="7" cy="7" r="2.6" fill="none" stroke="#000" stroke-width="0.7"/></svg></div>
<div class="tx" id="n109" style="left:45px;top:1px;letter-spacing:-0.439px">VRM HS Lüfter</div>
<div class="a" style="left:589px;top:0;width:1px;height:17px;background:#2a2a2a"></div><div class="a" style="left:590px;top:0;width:1px;height:17px;background:#01050c"></div>
<div class="a" style="left:591px;top:0;width:79px;height:16px;background:#15203a"></div>
<div class="v" style="left:590px">3,355 RPM</div>
<div class="a" style="left:669px;top:0;width:1px;height:17px;background:#2a2a2a"></div><div class="a" style="left:670px;top:0;width:1px;height:17px;background:#01050c"></div>
<div class="v" style="left:670px">1,162 RPM</div>
<div class="a" style="left:749px;top:0;width:1px;height:17px;background:#2a2a2a"></div><div class="a" style="left:750px;top:0;width:1px;height:17px;background:#01050c"></div>
<div class="v" style="left:750px">4,790 RPM</div>
<div class="a" style="left:829px;top:0;width:1px;height:17px;background:#2a2a2a"></div><div class="a" style="left:830px;top:0;width:1px;height:17px;background:#01050c"></div>
<div class="v" style="left:830px">3,631 RPM</div>
</div>
<div class="r" style="top:1919px">
<div class="a" style="left:43px;top:0;width:866px;height:17px;background:#000"></div>
<div class="a" style="left:27px;top:16px;width:16px;height:1px;background:#1e1e1e"></div>
<div class="a" style="left:30px;top:0"><svg width="10" height="16" viewBox="0 0 10 16"><path d="M4 0.2H8.6L5.6 5.6H8.8L0.3 15.3L3 8.3H0Z" fill="#f0c020"/></svg></div>
<div class="tx" id="n110" style="left:45px;top:1px;letter-spacing:-0.357px">VRM Vcore Strom (IOUT)</div>
<div class="a" style="left:589px;top:0;width:1px;height:17px;background:#2a2a2a"></div><div class="a" style="left:590px;top:0;width:1px;height:17px;background:#01050c"></div>
<div class="a" style="left:591px;top:0;width:79px;height:16px;background:#15203a"></div>
<div class="v" style="left:590px">59 A</div>
<div class="a" style="left:669px;top:0;width:1px;height:17px;background:#2a2a2a"></div><div class="a" style="left:670px;top:0;width:1px;height:17px;background:#01050c"></div>
<div class="v" style="left:670px">9 A</div>
<div class="a" style="left:749px;top:0;width:1px;height:17px;background:#2a2a2a"></div><div class="a" style="left:750px;top:0;width:1px;height:17px;background:#01050c"></div>
<div class="v" style="left:750px">116 A</div>
<div class="a" style="left:829px;top:0;width:1px;height:17px;background:#2a2a2a"></div><div class="a" style="left:830px;top:0;width:1px;height:17px;background:#01050c"></div>
<div class="v" style="left:830px">83 A</div>
</div>
<div class="r" style="top:1936px">
<div class="a" style="left:43px;top:0;width:866px;height:17px;background:#191919"></div>
<div class="a" style="left:27px;top:16px;width:16px;height:1px;background:#1e1e1e"></div>
<div class="a" style="left:30px;top:0"><svg width="10" height="16" viewBox="0 0 10 16"><path d="M4 0.2H8.6L5.6 5.6H8.8L0.3 15.3L3 8.3H0Z" fill="#f0c020"/></svg></div>
<div class="tx" id="n111" style="left:45px;top:1px;letter-spacing:-0.447px">VRM SOC Strom (IOUT)</div>
<div class="a" style="left:589px;top:0;width:1px;height:17px;background:#2a2a2a"></div><div class="a" style="left:590px;top:0;width:1px;height:17px;background:#01050c"></div>
<div class="a" style="left:591px;top:0;width:79px;height:16px;background:#15203a"></div>
<div class="v" style="left:590px">12 A</div>
<div class="a" style="left:669px;top:0;width:1px;height:17px;background:#2a2a2a"></div><div class="a" style="left:670px;top:0;width:1px;height:17px;background:#01050c"></div>
<div class="v" style="left:670px">10 A</div>
<div class="a" style="left:749px;top:0;width:1px;height:17px;background:#2a2a2a"></div><div class="a" style="left:750px;top:0;width:1px;height:17px;background:#01050c"></div>
<div class="v" style="left:750px">16 A</div>
<div class="a" style="left:829px;top:0;width:1px;height:17px;background:#2a2a2a"></div><div class="a" style="left:830px;top:0;width:1px;height:17px;background:#01050c"></div>
<div class="v" style="left:830px">13 A</div>
</div>
<div class="r" style="top:1953px">
<div class="a" style="left:43px;top:0;width:866px;height:17px;background:#000"></div>
<div class="a" style="left:27px;top:16px;width:16px;height:1px;background:#1e1e1e"></div>
<div class="a" style="left:30px;top:0"><svg width="10" height="16" viewBox="0 0 10 16"><path d="M4 0.2H8.6L5.6 5.6H8.8L0.3 15.3L3 8.3H0Z" fill="#f0c020"/></svg></div>
<div class="tx" id="n112" style="left:45px;top:1px;letter-spacing:-0.418px">VRM Vcore Leistung (POUT)</div>
<div class="a" style="left:589px;top:0;width:1px;height:17px;background:#2a2a2a"></div><div class="a" style="left:590px;top:0;width:1px;height:17px;background:#01050c"></div>
<div class="a" style="left:591px;top:0;width:79px;height:16px;background:#15203a"></div>
<div class="v" style="left:590px">68 W</div>
<div class="a" style="left:669px;top:0;width:1px;height:17px;background:#2a2a2a"></div><div class="a" style="left:670px;top:0;width:1px;height:17px;background:#01050c"></div>
<div class="v" style="left:670px">4 W</div>
<div class="a" style="left:749px;top:0;width:1px;height:17px;background:#2a2a2a"></div><div class="a" style="left:750px;top:0;width:1px;height:17px;background:#01050c"></div>
<div class="v" style="left:750px">125 W</div>
<div class="a" style="left:829px;top:0;width:1px;height:17px;background:#2a2a2a"></div><div class="a" style="left:830px;top:0;width:1px;height:17px;background:#01050c"></div>
<div class="v" style="left:830px">89 W</div>
</div>
<div class="r" style="top:1970px">
<div class="a" style="left:43px;top:0;width:866px;height:17px;background:#191919"></div>
<div class="a" style="left:27px;top:16px;width:16px;height:1px;background:#1e1e1e"></div>
<div class="a" style="left:30px;top:0"><svg width="10" height="16" viewBox="0 0 10 16"><path d="M4 0.2H8.6L5.6 5.6H8.8L0.3 15.3L3 8.3H0Z" fill="#f0c020"/></svg></div>
<div class="tx" id="n113" style="left:45px;top:1px;letter-spacing:-0.501px">VRM SOC Leistung (POUT)</div>
<div class="a" style="left:589px;top:0;width:1px;height:17px;background:#2a2a2a"></div><div class="a" style="left:590px;top:0;width:1px;height:17px;background:#01050c"></div>
<div class="v" style="left:590px">15 W</div>
<div class="a" style="left:669px;top:0;width:1px;height:17px;background:#2a2a2a"></div><div class="a" style="left:670px;top:0;width:1px;height:17px;background:#01050c"></div>
<div class="v" style="left:670px">12 W</div>
<div class="a" style="left:749px;top:0;width:1px;height:17px;background:#2a2a2a"></div><div class="a" style="left:750px;top:0;width:1px;height:17px;background:#01050c"></div>
<div class="v" style="left:750px">19 W</div>
<div class="a" style="left:829px;top:0;width:1px;height:17px;background:#2a2a2a"></div><div class="a" style="left:830px;top:0;width:1px;height:17px;background:#01050c"></div>
<div class="v" style="left:830px">15 W</div>
</div>
<div class="r" style="top:1987px">
<div class="a" style="left:43px;top:0;width:866px;height:17px;background:#000"></div>
<div class="a" style="left:589px;top:0;width:1px;height:17px;background:#2a2a2a"></div><div class="a" style="left:590px;top:0;width:1px;height:17px;background:#01050c"></div>
<div class="a" style="left:669px;top:0;width:1px;height:17px;background:#2a2a2a"></div><div class="a" style="left:670px;top:0;width:1px;height:17px;background:#01050c"></div>
<div class="a" style="left:749px;top:0;width:1px;height:17px;background:#2a2a2a"></div><div class="a" style="left:750px;top:0;width:1px;height:17px;background:#01050c"></div>
<div class="a" style="left:829px;top:0;width:1px;height:17px;background:#2a2a2a"></div><div class="a" style="left:830px;top:0;width:1px;height:17px;background:#01050c"></div>
</div>
<div class="r" style="top:2004px">
<div class="a" style="left:43px;top:0;width:866px;height:17px;background:#242424"></div>
<div class="a" style="left:27px;top:0;width:16px;height:16px;background:#0a0a0a"></div>
<div class="a" style="left:9px;top:4px"><svg width="14" height="9" viewBox="0 0 14 9"><path d="M1 1L7 7L13 1" fill="none" stroke="#dcdcdc" stroke-width="1.25"/></svg></div>
<div class="a" style="left:29px;top:0px"><svg width="12" height="16" viewBox="0 0 12 16"><rect x="2" y="1" width="8" height="14" rx="1.5" fill="#555"/><rect x="3.5" y="2.5" width="5" height="11" fill="#676767"/><rect x="0.3" y="2.5" width="1.8" height="1.3" fill="#b0b0b0"/><rect x="9.9" y="2.5" width="1.8" height="1.3" fill="#b0b0b0"/><rect x="0.3" y="5.5" width="1.8" height="1.3" fill="#b0b0b0"/><rect x="9.9" y="5.5" width="1.8" height="1.3" fill="#b0b0b0"/><rect x="0.3" y="8.5" width="1.8" height="1.3" fill="#b0b0b0"/><rect x="9.9" y="8.5" width="1.8" height="1.3" fill="#b0b0b0"/><rect x="0.3" y="11.5" width="1.8" height="1.3" fill="#b0b0b0"/><rect x="9.9" y="11.5" width="1.8" height="1.3" fill="#b0b0b0"/></svg></div>
<div class="gx" id="n115" style="left:45px;top:0px;letter-spacing:-0.002px">DDR5 DIMM [#1]: Micron CP16G60C36U5B.M8D3 (P0 CHANNEL A/DIMM 1)</div>
<div class="a" style="left:589px;top:0;width:1px;height:17px;background:#2a2a2a"></div><div class="a" style="left:590px;top:0;width:1px;height:17px;background:#01050c"></div>
<div class="a" style="left:669px;top:0;width:1px;height:17px;background:#2a2a2a"></div><div class="a" style="left:670px;top:0;width:1px;height:17px;background:#01050c"></div>
<div class="a" style="left:749px;top:0;width:1px;height:17px;background:#2a2a2a"></div><div class="a" style="left:750px;top:0;width:1px;height:17px;background:#01050c"></div>
<div class="a" style="left:829px;top:0;width:1px;height:17px;background:#2a2a2a"></div><div class="a" style="left:830px;top:0;width:1px;height:17px;background:#01050c"></div>
</div>
<div class="r" style="top:2021px">
<div class="a" style="left:43px;top:0;width:866px;height:17px;background:#000"></div>
<div class="a" style="left:27px;top:16px;width:16px;height:1px;background:#1e1e1e"></div>
<div class="a" style="left:32px;top:0"><svg width="6" height="16" viewBox="0 0 6 16"><rect x="2" y="1" width="2" height="4.5" fill="#e4ecef"/><rect x="2" y="5.5" width="2" height="6" fill="#e0705e"/><circle cx="3" cy="12.8" r="2" fill="#e82020"/></svg></div>
<div class="tx" id="n116" style="left:45px;top:1px;letter-spacing:-0.411px">RAM_1_Temp</div>
<div class="a" style="left:589px;top:0;width:1px;height:17px;background:#2a2a2a"></div><div class="a" style="left:590px;top:0;width:1px;height:17px;background:#01050c"></div>
<div class="a" style="left:591px;top:0;width:79px;height:16px;background:#15203a"></div>
<div class="v" style="left:590px">65.2 °C</div>
<div class="a" style="left:669px;top:0;width:1px;height:17px;background:#2a2a2a"></div><div class="a" style="left:670px;top:0;width:1px;height:17px;background:#01050c"></div>
<div class="v" style="left:670px">32.0 °C</div>
<div class="a" style="left:749px;top:0;width:1px;height:17px;background:#2a2a2a"></div><div class="a" style="left:750px;top:0;width:1px;height:17px;background:#01050c"></div>
<div class="v" style="left:750px">79.8 °C</div>
<div class="a" style="left:829px;top:0;width:1px;height:17px;background:#2a2a2a"></div><div class="a" style="left:830px;top:0;width:1px;height:17px;background:#01050c"></div>
<div class="v" style="left:830px">56.7 °C</div>
</div>
<div class="r" style="top:2038px">
<div class="a" style="left:43px;top:0;width:866px;height:17px;background:#191919"></div>
<div class="a" style="left:27px;top:16px;width:16px;height:1px;background:#1e1e1e"></div>
<div class="a" style="left:30px;top:0"><svg width="10" height="16" viewBox="0 0 10 16"><path d="M4 0.2H8.6L5.6 5.6H8.8L0.3 15.3L3 8.3H0Z" fill="#f0c020"/></svg></div>
<div class="tx" id="n117" style="left:45px;top:1px;letter-spacing:-0.381px">VDD (SWA) Spannung</div>
<div class="a" style="left:589px;top:0;width:1px;height:17px;background:#2a2a2a"></div><div class="a" style="left:590px;top:0;width:1px;height:17px;background:#01050c"></div>
<div class="v" style="left:590px">1.350 V</div>
<div class="a" style="left:669px;top:0;width:1px;height:17px;background:#2a2a2a"></div><div class="a" style="left:670px;top:0;width:1px;height:17px;background:#01050c"></div>
<div class="v" style="left:670px">1.350 V</div>
<div class="a" style="left:749px;top:0;width:1px;height:17px;background:#2a2a2a"></div><div class="a" style="left:750px;top:0;width:1px;height:17px;background:#01050c"></div>
<div class="v" style="left:750px">1.365 V</div>
<div class="a" style="left:829px;top:0;width:1px;height:17px;background:#2a2a2a"></div><div class="a" style="left:830px;top:0;width:1px;height:17px;background:#01050c"></div>
<div class="v" style="left:830px">1.351 V</div>
</div>
<div class="a" style="left:3px;top:2055px;width:906px;height:1px;background:#2a2a2a"></div>
<div class="a" style="left:909px;top:32px;width:1px;height:17px;background:#2e2e2e"></div><div class="a" style="left:910px;top:49px;width:2px;height:2007px;background:#00050c"></div>
<div class="a" style="left:3px;top:2062px;width:42px;height:35px;border:1px solid #8c8c8c;border-radius:4px;background:linear-gradient(#3c3c3a,#1a1a1a 55%,#050505)"></div>
<div class="a" style="left:47px;top:2062px;width:42px;height:35px;border:1px solid #8c8c8c;border-radius:4px;background:linear-gradient(#3c3c3a,#1a1a1a 55%,#050505)"></div>
<svg class="a" style="left:7px;top:2071px" width="34" height="19" viewBox="0 0 34 19"><path d="M1 9.5L8.5 1.5V5.5H15.5V13.5H8.5V17.5Z" fill="#3a8ee0" stroke="#dcdcdc" stroke-width="0.9"/><path d="M33 9.5L25.5 1.5V5.5H18.5V13.5H25.5V17.5Z" fill="#3f95e6" stroke="#dcdcdc" stroke-width="0.9"/></svg>
<svg class="a" style="left:51px;top:2071px" width="34" height="19" viewBox="0 0 34 19"><path d="M16.5 9.5L9 1.5V5.5H1.5V13.5H9V17.5Z" fill="#2a72a6" stroke="#a0a8ac" stroke-width="0.9"/><path d="M16.5 9.5L24 1.5V5.5H31.5V13.5H24V17.5Z" fill="#2a72a6" stroke="#a0a8ac" stroke-width="0.9"/></svg>
</div>
</body></html>
